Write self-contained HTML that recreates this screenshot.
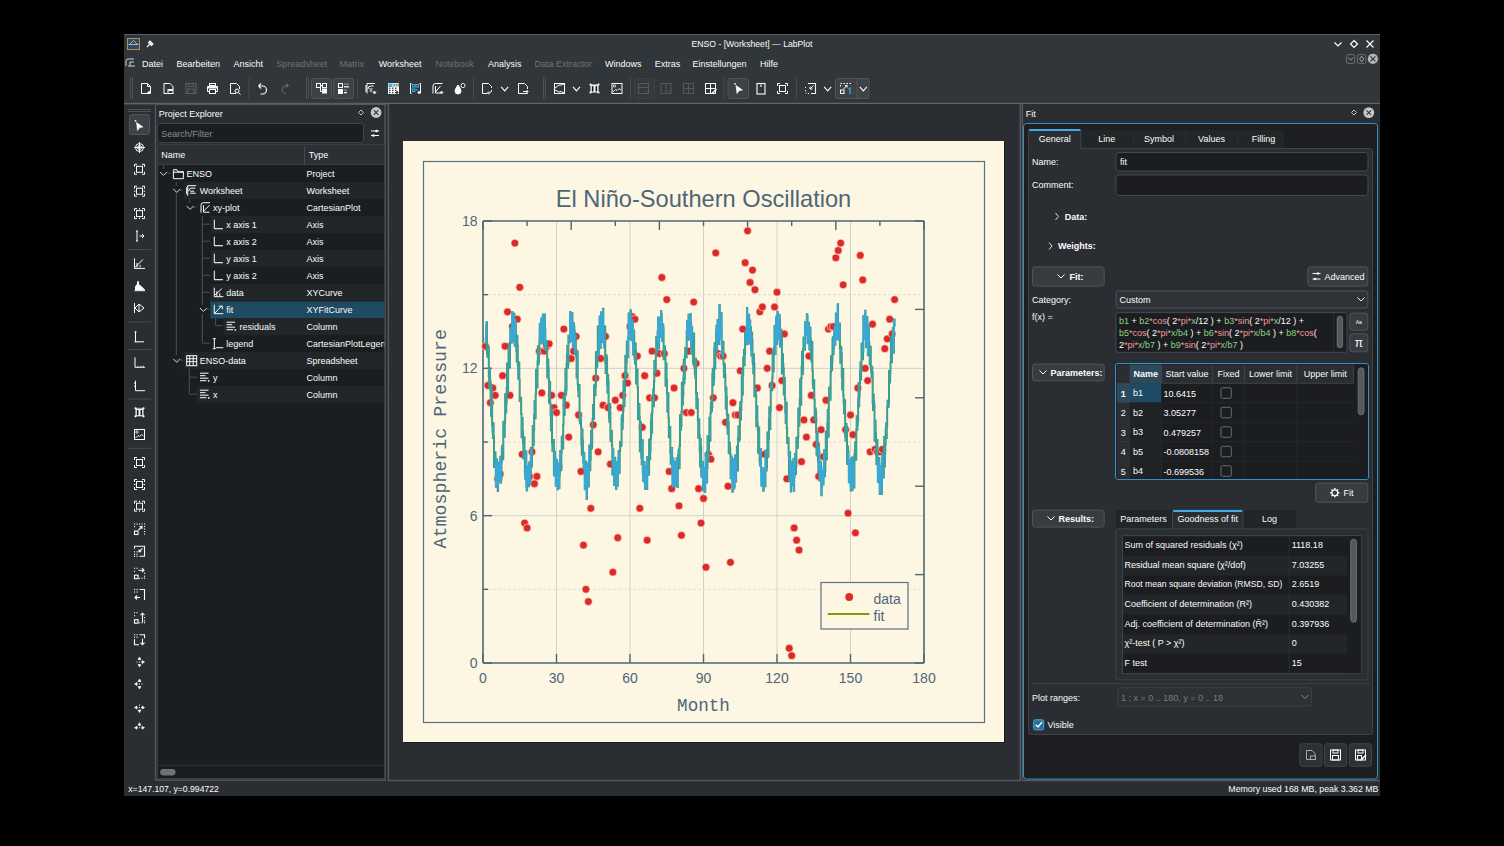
<!DOCTYPE html><html><head><meta charset="utf-8"><style>
*{margin:0;padding:0}html,body{width:1504px;height:846px;background:#000;overflow:hidden}
svg{position:absolute;left:0;top:0;display:block}
</style></head><body><svg width="1504" height="846" viewBox="0 0 1504 846" font-family="Liberation Sans" shape-rendering="auto">
<rect x="124" y="34" width="1256" height="762" fill="#31363b" />
<line x1="124" y1="34.5" x2="1380" y2="34.5" stroke="#5a5f65" stroke-width="1" />
<rect x="127.5" y="38.5" width="12" height="11" fill="#34495c" stroke="#b98c52" stroke-width="1" />
<path d="M129 45 L133.5 40.5 L138 45 M128.5 44.5 H138.5" stroke="#b9d2e6" stroke-width="0.8" fill="none" />
<path d="M147 47 L149.5 44.5 M149 42 L152 45 M150 41 L153 44 L151.5 45.5 L148.5 42.5 Z" stroke="#fcfcfc" stroke-width="1.1" fill="none" />
<text x="752" y="47.28" font-size="9" fill="#fcfcfc" text-anchor="middle" font-family="Liberation Sans" textLength="121" lengthAdjust="spacingAndGlyphs">ENSO - [Worksheet] — LabPlot</text>
<path d="M1334.5 42.5 L1338 46 L1341.5 42.5" stroke="#fcfcfc" stroke-width="1.2" fill="none" />
<path d="M1354 40.5 L1357.5 44 L1354 47.5 L1350.5 44 Z" stroke="#fcfcfc" stroke-width="1.2" fill="none" />
<path d="M1366.5 40.5 L1373.5 47.5 M1373.5 40.5 L1366.5 47.5" stroke="#fcfcfc" stroke-width="1.2" fill="none" />
<path d="M126 66 V61 Q126 59 128 59 H134 M130 66 V62 H134 M128 66 H135" stroke="#d0d2d4" stroke-width="1" fill="none" />
<text x="142" y="67.08" font-size="9" fill="#fcfcfc" text-anchor="start" font-family="Liberation Sans" >Datei</text>
<text x="176.6" y="67.08" font-size="9" fill="#fcfcfc" text-anchor="start" font-family="Liberation Sans" >Bearbeiten</text>
<text x="233.5" y="67.08" font-size="9" fill="#fcfcfc" text-anchor="start" font-family="Liberation Sans" >Ansicht</text>
<text x="276.3" y="67.08" font-size="9" fill="#6e7175" text-anchor="start" font-family="Liberation Sans" >Spreadsheet</text>
<text x="339.6" y="67.08" font-size="9" fill="#6e7175" text-anchor="start" font-family="Liberation Sans" >Matrix</text>
<text x="378.7" y="67.08" font-size="9" fill="#fcfcfc" text-anchor="start" font-family="Liberation Sans" >Worksheet</text>
<text x="435.4" y="67.08" font-size="9" fill="#6e7175" text-anchor="start" font-family="Liberation Sans" >Notebook</text>
<text x="488" y="67.08" font-size="9" fill="#fcfcfc" text-anchor="start" font-family="Liberation Sans" >Analysis</text>
<text x="534.5" y="67.08" font-size="9" fill="#6e7175" text-anchor="start" font-family="Liberation Sans" >Data Extractor</text>
<text x="605" y="67.08" font-size="9" fill="#fcfcfc" text-anchor="start" font-family="Liberation Sans" >Windows</text>
<text x="654.7" y="67.08" font-size="9" fill="#fcfcfc" text-anchor="start" font-family="Liberation Sans" >Extras</text>
<text x="692.5" y="67.08" font-size="9" fill="#fcfcfc" text-anchor="start" font-family="Liberation Sans" >Einstellungen</text>
<text x="760" y="67.08" font-size="9" fill="#fcfcfc" text-anchor="start" font-family="Liberation Sans" >Hilfe</text>
<rect x="1346.6" y="54.6" width="8.2" height="8.8" fill="none" stroke="#6f7378" stroke-width="0.9" rx="1.5" />
<path d="M1348.3 57.6 L1350.7 60.2 L1353.1 57.6" stroke="#a9acaf" stroke-width="0.9" fill="none" />
<rect x="1357.6" y="54.6" width="8.2" height="8.8" fill="none" stroke="#6f7378" stroke-width="0.9" rx="1.5" />
<path d="M1361.7 56 L1363.7 59 L1361.7 62 L1359.7 59 Z" stroke="#a9acaf" stroke-width="0.9" fill="none" />
<circle cx="1372.9" cy="58.8" r="5.1" fill="#b4b6b9"/>
<path d="M1370.4 56.3 L1375.4 61.3 M1375.4 56.3 L1370.4 61.3" stroke="#2c3034" stroke-width="1.1" fill="none" />
<line x1="130.5" y1="77" x2="130.5" y2="99" stroke="#4d5257" stroke-width="1" />
<line x1="132.5" y1="77" x2="132.5" y2="99" stroke="#4d5257" stroke-width="1" />
<line x1="249" y1="78" x2="249" y2="99" stroke="#464b50" stroke-width="1" />
<line x1="357.5" y1="78" x2="357.5" y2="99" stroke="#464b50" stroke-width="1" />
<line x1="473.5" y1="78" x2="473.5" y2="99" stroke="#464b50" stroke-width="1" />
<line x1="630.5" y1="78" x2="630.5" y2="99" stroke="#464b50" stroke-width="1" />
<line x1="724" y1="78" x2="724" y2="99" stroke="#464b50" stroke-width="1" />
<line x1="796.5" y1="78" x2="796.5" y2="99" stroke="#464b50" stroke-width="1" />
<line x1="306.5" y1="77" x2="306.5" y2="99" stroke="#4d5257" stroke-width="1" />
<line x1="308.5" y1="77" x2="308.5" y2="99" stroke="#4d5257" stroke-width="1" />
<line x1="543.5" y1="77" x2="543.5" y2="99" stroke="#4d5257" stroke-width="1" />
<line x1="545.5" y1="77" x2="545.5" y2="99" stroke="#4d5257" stroke-width="1" />
<rect x="311.5" y="78.5" width="20.0" height="20" fill="#3d4247" stroke="#50555a" stroke-width="1" rx="2" />
<rect x="333.5" y="78.5" width="20.0" height="20" fill="#3d4247" stroke="#50555a" stroke-width="1" rx="2" />
<rect x="728" y="78.5" width="20.5" height="20" fill="#3d4247" stroke="#50555a" stroke-width="1" rx="2" />
<rect x="634.5" y="78.5" width="20" height="20" fill="#34393e" stroke="#3c4146" stroke-width="1" rx="2" />
<rect x="835.5" y="78.5" width="33.5" height="20" fill="#3d4247" stroke="#50555a" stroke-width="1" rx="2" />
<line x1="857" y1="79" x2="857" y2="98" stroke="#50555a" stroke-width="1" />
<rect x="124" y="104" width="1256" height="692" fill="#2a2e32" />
<rect x="124" y="102.8" width="1256" height="1.6" fill="#62666b" />
<g transform="translate(141,83) scale(1)"><path d="M0.5 0.5 H6.5 L9.5 3.5 V10.5 H0.5 Z" stroke="#fcfcfc" stroke-width="1" fill="none" /><path d="M6.5 0.5 V3.5 H9.5" stroke="#fcfcfc" stroke-width="1" fill="none" /><path d="M8 8 L9.5 9.5 L8 11 L6.5 9.5Z" stroke="#fcfcfc" stroke-width="0.5" fill="#fcfcfc" /></g>
<g transform="translate(163.5,83) scale(1)"><path d="M0.5 0.5 H6.5 L9.5 3.5 V6 M4 10.5 H0.5 V0.5" stroke="#fcfcfc" stroke-width="1" fill="none" /><rect x="4.5" y="6.5" width="5" height="4" fill="none" stroke="#fcfcfc" stroke-width="1"/><rect x="5" y="7" width="4" height="1" fill="#fcfcfc"/></g>
<g transform="translate(185.5,83) scale(1)"><rect x="0.5" y="0.5" width="10" height="10" fill="none" stroke="#5c6065" stroke-width="1"/><rect x="3" y="0.5" width="5" height="3" fill="none" stroke="#5c6065" stroke-width="1"/><rect x="2.5" y="6" width="6" height="4.5" fill="none" stroke="#5c6065" stroke-width="1"/></g>
<g transform="translate(207,83) scale(1)"><rect x="2.5" y="0.5" width="6" height="2" fill="none" stroke="#fcfcfc" stroke-width="1"/><path d="M0.5 3.5 H10.5 V8.5 H0.5 Z" stroke="#fcfcfc" stroke-width="1" fill="none" /><rect x="2.5" y="6.5" width="6" height="4" fill="#31363b" stroke="#fcfcfc" stroke-width="1"/><rect x="1" y="4" width="9" height="1.5" fill="#fcfcfc"/></g>
<g transform="translate(230,83) scale(1)"><path d="M0.5 0.5 H6.5 L9.5 3.5 V6 M6 10.5 H0.5 V0.5" stroke="#fcfcfc" stroke-width="1" fill="none" /><circle cx="7" cy="8" r="2" fill="none" stroke="#fcfcfc" stroke-width="1"/><path d="M8.5 9.5 L10.5 11.5" stroke="#fcfcfc" stroke-width="1" fill="none" /></g>
<g transform="translate(257.5,83) scale(1)"><path d="M1 3 L3.5 0.5 M1 3 L3.5 5.5 M1 3 H5 A4 4 0 0 1 5 11 H3" stroke="#fcfcfc" stroke-width="1.1" fill="none" /></g>
<g transform="translate(280.5,83) scale(1)"><path d="M8 2.5 L5.5 0.5 M8 2.5 L5.5 4.5 M8 2.5 A5 4.3 0 0 0 5.5 11" stroke="#6e7175" stroke-width="1" fill="none" /></g>
<g transform="translate(316,83) scale(1)"><rect x="0.5" y="0.5" width="4" height="4" fill="none" stroke="#fcfcfc" stroke-width="1"/><rect x="6.5" y="0.5" width="4" height="4" fill="none" stroke="#fcfcfc" stroke-width="1"/><path d="M4.5 2.5 H6.5 M4.5 4.5 V8.5 H6" stroke="#fcfcfc" stroke-width="1" fill="none" /><rect x="6" y="5.5" width="5" height="5" fill="#fcfcfc"/></g>
<g transform="translate(338,83) scale(1)"><rect x="0.5" y="0.5" width="4" height="4" fill="none" stroke="#fcfcfc" stroke-width="1"/><rect x="6" y="0.5" width="5" height="1.2" fill="#8a8d90"/><rect x="6" y="3.2" width="5" height="1.2" fill="#fcfcfc"/><rect x="0" y="6" width="5" height="5" fill="#fcfcfc"/><rect x="6" y="6.5" width="3" height="1.2" fill="#8a8d90"/><rect x="6" y="9" width="3" height="1.2" fill="#fcfcfc"/></g>
<g transform="translate(365.5,83) scale(1)"><path d="M1.5 10.5 V0.5 H9.5" stroke="#fcfcfc" stroke-width="1" fill="none" /><path d="M2.5 6 Q2.5 3 5.5 3 H8 M4 8 H7 M4 6 H7" stroke="#fcfcfc" stroke-width="1" fill="none" /><path d="M9 8 L10.5 9.5 L9 11 L7.5 9.5Z" stroke="#fcfcfc" stroke-width="0.5" fill="#fcfcfc" /><path d="M0.5 2 V9" stroke="#fcfcfc" stroke-width="1" fill="none" /></g>
<g transform="translate(388,83) scale(1)"><rect x="0" y="0" width="11" height="11" fill="#fcfcfc"/><rect x="0.5" y="0.5" width="4" height="3.5" fill="#3daee9"/><rect x="1" y="4.6" width="1.5" height="1.2" fill="#31363b"/><rect x="1" y="6.8" width="1.5" height="1.2" fill="#31363b"/><rect x="1" y="9.0" width="1.5" height="1.2" fill="#31363b"/><rect x="4" y="4.6" width="1.5" height="1.2" fill="#31363b"/><rect x="4" y="6.8" width="1.5" height="1.2" fill="#31363b"/><rect x="4" y="9.0" width="1.5" height="1.2" fill="#31363b"/><rect x="7" y="4.6" width="1.5" height="1.2" fill="#31363b"/><rect x="7" y="6.8" width="1.5" height="1.2" fill="#31363b"/><rect x="7" y="9.0" width="1.5" height="1.2" fill="#31363b"/><rect x="5.5" y="0.8" width="1.2" height="1" fill="#31363b"/><rect x="5.5" y="2.4000000000000004" width="1.2" height="1" fill="#31363b"/><rect x="7.5" y="0.8" width="1.2" height="1" fill="#31363b"/><rect x="7.5" y="2.4000000000000004" width="1.2" height="1" fill="#31363b"/><rect x="9.5" y="0.8" width="1.2" height="1" fill="#31363b"/><rect x="9.5" y="2.4000000000000004" width="1.2" height="1" fill="#31363b"/><path d="M9 8 L10.5 9.5 L9 11 L7.5 9.5Z" stroke="#31363b" stroke-width="0.5" fill="#31363b" /></g>
<g transform="translate(410,83) scale(1)"><path d="M1.5 0.5 H0.5 V10.5 H1.5 M9.5 0.5 H10.5 V10.5" stroke="#fcfcfc" stroke-width="1" fill="none" /><rect x="2.5" y="1.5" width="2.5" height="2.5" fill="none" stroke="#3daee9" stroke-width="1"/><rect x="6" y="1.5" width="2.5" height="2.5" fill="none" stroke="#3daee9" stroke-width="1"/><rect x="2.5" y="6" width="2.5" height="2.5" fill="none" stroke="#3daee9" stroke-width="1"/><rect x="6" y="6" width="1.5" height="1.5" fill="#3daee9"/><path d="M9 8 L10.5 9.5 L9 11 L7.5 9.5Z" stroke="#fcfcfc" stroke-width="0.5" fill="#fcfcfc" /></g>
<g transform="translate(431.5,83) scale(1)"><path d="M1.5 10.5 V3 Q1.5 0.5 4 0.5 H11" stroke="#fcfcfc" stroke-width="1" fill="none" /><path d="M4 3 V10 H9 M4 9 L9 3" stroke="#fcfcfc" stroke-width="1" fill="none" /><path d="M10 8 L11.5 9.5 L10 11 L8.5 9.5Z" stroke="#fcfcfc" stroke-width="0.5" fill="#fcfcfc" /></g>
<g transform="translate(454,83) scale(1)"><path d="M4 2 Q1 6 1 8 A3 3 0 0 0 7 8 Q7 6 4 2Z" stroke="#fcfcfc" stroke-width="1" fill="#fcfcfc" /><circle cx="9" cy="2.5" r="2" fill="#111" stroke="#fcfcfc" stroke-width="1"/></g>
<g transform="translate(482,83) scale(1)"><path d="M0.5 0.5 H6.5 L9.5 3.5 V5 M5 10.5 H0.5 V0.5" stroke="#fcfcfc" stroke-width="1" fill="none" /><path d="M9.5 7 A2.5 2.5 0 0 1 7 10 H5.5 M7 8.5 L5.5 10 L7 11.5" stroke="#fcfcfc" stroke-width="1" fill="none" /></g>
<path d="M501.2 86.8 L504.7 90.8 L508.2 86.8" stroke="#fcfcfc" stroke-width="1.1" fill="none" />
<g transform="translate(518,83) scale(1)"><path d="M0.5 0.5 H6.5 L9.5 3.5 V6 M9.5 10 V10.5 H0.5 V0.5" stroke="#fcfcfc" stroke-width="1" fill="none" /><path d="M5 8.5 H10 M8.5 7 L10 8.5 L8.5 10" stroke="#fcfcfc" stroke-width="1" fill="none" /></g>
<g transform="translate(554,83) scale(1)"><rect x="0.5" y="0.5" width="10" height="10" fill="none" stroke="#fcfcfc" stroke-width="1"/><path d="M1 5 L5 2 H7 L10 1 M1 7 L5 9 L7 8.5 L10 10" stroke="#fcfcfc" stroke-width="1" fill="none" /></g>
<path d="M573 86.8 L576.5 90.8 L580 86.8" stroke="#fcfcfc" stroke-width="1.1" fill="none" />
<g transform="translate(589,83) scale(1)"><rect x="1.5" y="2" width="8" height="7.5" fill="#fcfcfc"/><rect x="2.8" y="3.2" width="1.7" height="5.3" fill="#15171a"/><rect x="6.5" y="3.2" width="1.7" height="5.3" fill="#15171a"/><rect x="1.5" y="1" width="8" height="1.2" fill="#9a9ea2"/><circle cx="1.5" cy="1.5" r="1.1" fill="#fcfcfc"/><circle cx="9.5" cy="1.5" r="1.1" fill="#fcfcfc"/><circle cx="1.5" cy="9.5" r="1.1" fill="#fcfcfc"/><circle cx="9.5" cy="9.5" r="1.1" fill="#fcfcfc"/></g>
<g transform="translate(611.5,83) scale(1)"><rect x="0.5" y="0.5" width="10" height="10" fill="none" stroke="#fcfcfc" stroke-width="1"/><circle cx="3" cy="3" r="1.2" fill="none" stroke="#fcfcfc" stroke-width="0.8"/><path d="M1.5 9 L4 6.5 L5.5 7.5 L7.5 5.5 L9.5 7" stroke="#fcfcfc" stroke-width="0.9" fill="none" /></g>
<g transform="translate(638,83) scale(1)"><rect x="0.5" y="0.5" width="10" height="10" fill="none" stroke="#55595e" stroke-width="1"/><path d="M0.5 4.5 H10.5 M7 9 L9 7.5" stroke="#55595e" stroke-width="1" fill="none" /></g>
<g transform="translate(660.5,83) scale(1)"><rect x="0.5" y="0.5" width="10" height="10" fill="none" stroke="#55595e" stroke-width="1"/><path d="M5.5 0.5 V10.5 M7 9 L9 7.5" stroke="#55595e" stroke-width="1" fill="none" /></g>
<g transform="translate(683,83) scale(1)"><rect x="0.5" y="0.5" width="10" height="10" fill="none" stroke="#55595e" stroke-width="1"/><path d="M5.5 0.5 V10.5 M0.5 5.5 H10.5" stroke="#55595e" stroke-width="1" fill="none" /></g>
<g transform="translate(705,83) scale(1)"><rect x="0.5" y="0.5" width="10" height="10" fill="none" stroke="#fcfcfc" stroke-width="1"/><path d="M5.5 0.5 V10.5 M0.5 5.5 H10.5" stroke="#fcfcfc" stroke-width="1" fill="none" /><path d="M7 10.5 L11.5 6" stroke="#fcfcfc" stroke-width="1.5" fill="none" /></g>
<g transform="translate(734,83) scale(1)"><path d="M2 2.5 L8.5 7 L5.2 7.6 L3 10.5 Z" stroke="#fcfcfc" stroke-width="0.6" fill="#fcfcfc" /><circle cx="1" cy="0.8" r="0.9" fill="#fcfcfc"/></g>
<g transform="translate(756.5,83) scale(1)"><rect x="0.5" y="0.5" width="8" height="10.5" fill="none" stroke="#fcfcfc" stroke-width="1.1"/><path d="M4.5 1.5 V4" stroke="#fcfcfc" stroke-width="1.2" fill="none" /></g>
<rect x="756.5" y="83.5" width="8" height="10.5" rx="4" fill="none" stroke="#31363b" stroke-width="0"/>
<g transform="translate(777,83) scale(1)"><path d="M0.5 3 V0.5 H3 M8 0.5 H10.5 V3 M10.5 8 V10.5 H8 M3 10.5 H0.5 V8" stroke="#fcfcfc" stroke-width="1" fill="none" /><rect x="2.5" y="2.5" width="6" height="6" fill="none" stroke="#fcfcfc" stroke-width="1"/></g>
<g transform="translate(805,83) scale(1)"><path d="M3 0.5 H10.5 V10.5 H6" stroke="#fcfcfc" stroke-width="1.1" fill="none" /><path d="M0.5 4 V5 M0.5 7 V8 M0.5 10 H1.5 M3 10.5 H4 M8.5 2.5 L5 6 M5 3.5 V6 H7.5" stroke="#fcfcfc" stroke-width="1" fill="none" /></g>
<path d="M824.2 86.9 L827.7 90.9 L831.2 86.9" stroke="#fcfcfc" stroke-width="1.1" fill="none" />
<g transform="translate(840,83) scale(1)"><path d="M0.5 0.5 H2 M3.5 0.5 H5 M6.5 0.5 H8 M9.5 0.5 H11 M0.5 2 V3.5" stroke="#fcfcfc" stroke-width="1" fill="none" /><rect x="0.5" y="7" width="3.5" height="3.5" fill="none" stroke="#fcfcfc" stroke-width="1"/><path d="M3.5 6 L7 2.5 M5 2.5 H7 V4.5" stroke="#fcfcfc" stroke-width="1" fill="none" /><path d="M8.5 6 L10 5 V11" stroke="#3daee9" stroke-width="1.2" fill="none" /></g>
<path d="M859.8 86.9 L863.3 90.9 L866.8 86.9" stroke="#fcfcfc" stroke-width="1.1" fill="none" />
<line x1="128" y1="109.5" x2="151" y2="109.5" stroke="#4d5257" stroke-width="1" />
<line x1="128" y1="111.5" x2="151" y2="111.5" stroke="#4d5257" stroke-width="1" />
<rect x="129.5" y="114.5" width="20" height="20" fill="#3d4247" stroke="#50555a" stroke-width="1" rx="2" />
<g transform="translate(134.5,120) scale(1)"><path d="M2 2.5 L8.5 7 L5.2 7.6 L3 10.5 Z" stroke="#fcfcfc" stroke-width="0.6" fill="#fcfcfc" /><circle cx="1" cy="0.8" r="0.9" fill="#fcfcfc"/></g>
<g transform="translate(134.0,142.0) scale(1)"><circle cx="5.5" cy="5.5" r="4" fill="none" stroke="#fcfcfc" stroke-width="1"/><circle cx="5.5" cy="5.5" r="2" fill="none" stroke="#fcfcfc" stroke-width="1"/><path d="M5.5 0 V11 M0 5.5 H11" stroke="#fcfcfc" stroke-width="1" fill="none" /></g>
<g transform="translate(134.0,163.8) scale(1)"><path d="M0.5 3 V0.5 H3 M8 0.5 H10.5 V3 M10.5 8 V10.5 H8 M3 10.5 H0.5 V8" stroke="#fcfcfc" stroke-width="1" fill="none" /><rect x="2.5" y="2.5" width="6" height="6" fill="none" stroke="#fcfcfc" stroke-width="1"/></g>
<g transform="translate(134.0,185.7) scale(1)"><path d="M0.5 3 V0.5 H3 M8 0.5 H10.5 V3 M10.5 8 V10.5 H8 M3 10.5 H0.5 V8" stroke="#fcfcfc" stroke-width="1" fill="none" /><rect x="2.5" y="2.5" width="6" height="6" fill="none" stroke="#fcfcfc" stroke-width="1"/><path d="M0 5.5 H1.5 M9.5 5.5 H11" stroke="#fcfcfc" stroke-width="1" fill="none" /></g>
<g transform="translate(134.0,208.1) scale(1)"><path d="M0.5 3 V0.5 H3 M8 0.5 H10.5 V3 M10.5 8 V10.5 H8 M3 10.5 H0.5 V8" stroke="#fcfcfc" stroke-width="1" fill="none" /><rect x="2.5" y="2.5" width="6" height="6" fill="none" stroke="#fcfcfc" stroke-width="1"/><path d="M5.5 0 V1.5 M5.5 9.5 V11" stroke="#fcfcfc" stroke-width="1" fill="none" /></g>
<g transform="translate(134.0,230.5) scale(1)"><path d="M2 0.5 H4 M3 0.5 V10.5 M2 10.5 H4 M5.5 5.5 H9 M8 3.5 L10 5.5 L8 7.5" stroke="#fcfcfc" stroke-width="1" fill="none" /></g>
<line x1="128" y1="249.5" x2="151" y2="249.5" stroke="#464b50" stroke-width="1" />
<line x1="128" y1="322" x2="151" y2="322" stroke="#464b50" stroke-width="1" />
<line x1="128" y1="349.5" x2="151" y2="349.5" stroke="#464b50" stroke-width="1" />
<line x1="128" y1="399" x2="151" y2="399" stroke="#464b50" stroke-width="1" />
<line x1="128" y1="448.3" x2="151" y2="448.3" stroke="#464b50" stroke-width="1" />
<g transform="translate(134.0,257.9) scale(1)"><path d="M0.5 0.5 V10.5 H11 M1 9.5 L9 1.5 M3 5 V9.5 M6 7 V9.5" stroke="#fcfcfc" stroke-width="1" fill="none" /></g>
<g transform="translate(134.0,280.2) scale(1)"><path d="M0.5 10.5 H11 M1.5 10 V6 L3 5 L4 1 L5 5 L7 6 L9 8 L10.5 9.5 V10" stroke="#fcfcfc" stroke-width="1" fill="#fcfcfc" /></g>
<g transform="translate(134.0,302.5) scale(1)"><path d="M0.5 0.5 V10.5 M1 5.5 L5 1.5 L10 5.5 L5 9.5 Z M5 1.5 V9.5" stroke="#fcfcfc" stroke-width="1" fill="none" /></g>
<g transform="translate(134.0,331.3) scale(1)"><path d="M1.5 0.5 V10.5 H10 M0.5 0.5 H2.5 M0.5 10.5 H2.5" stroke="#fcfcfc" stroke-width="1" fill="none" /></g>
<g transform="translate(134.0,356.8) scale(1)"><path d="M1 0.5 V10.5 H11 M4 9 V10 M7 9 V10 M9.5 9 V10" stroke="#fcfcfc" stroke-width="1" fill="none" /></g>
<g transform="translate(134.0,380.2) scale(1)"><path d="M1.5 0.5 V10.5 H11 M0 3 H1.5 M0 6 H1.5" stroke="#fcfcfc" stroke-width="1" fill="none" /></g>
<g transform="translate(134.0,406.8) scale(1)"><rect x="1.5" y="2" width="8" height="7.5" fill="#fcfcfc"/><rect x="2.8" y="3.2" width="1.7" height="5.3" fill="#15171a"/><rect x="6.5" y="3.2" width="1.7" height="5.3" fill="#15171a"/><rect x="1.5" y="1" width="8" height="1.2" fill="#9a9ea2"/><circle cx="1.5" cy="1.5" r="1.1" fill="#fcfcfc"/><circle cx="9.5" cy="1.5" r="1.1" fill="#fcfcfc"/><circle cx="1.5" cy="9.5" r="1.1" fill="#fcfcfc"/><circle cx="9.5" cy="9.5" r="1.1" fill="#fcfcfc"/></g>
<g transform="translate(134.0,429.0) scale(1)"><rect x="0.5" y="0.5" width="10" height="10" fill="none" stroke="#fcfcfc" stroke-width="1"/><circle cx="3" cy="3" r="1.2" fill="none" stroke="#fcfcfc" stroke-width="0.8"/><path d="M1.5 9 L4 6.5 L5.5 7.5 L7.5 5.5 L9.5 7" stroke="#fcfcfc" stroke-width="0.9" fill="none" /></g>
<g transform="translate(134.0,457.0) scale(1)"><path d="M0.5 3 V0.5 H3 M8 0.5 H10.5 V3 M10.5 8 V10.5 H8 M3 10.5 H0.5 V8" stroke="#fcfcfc" stroke-width="1" fill="none" /><rect x="2.5" y="2.5" width="6" height="6" fill="none" stroke="#fcfcfc" stroke-width="1"/></g>
<g transform="translate(134.0,479.0) scale(1)"><path d="M0.5 3 V0.5 H3 M8 0.5 H10.5 V3 M10.5 8 V10.5 H8 M3 10.5 H0.5 V8" stroke="#fcfcfc" stroke-width="1" fill="none" /><rect x="2.5" y="2.5" width="6" height="6" fill="none" stroke="#fcfcfc" stroke-width="1"/><path d="M0 5.5 H1.5 M9.5 5.5 H11" stroke="#fcfcfc" stroke-width="1" fill="none" /></g>
<g transform="translate(134.0,500.7) scale(1)"><path d="M0.5 3 V0.5 H3 M8 0.5 H10.5 V3 M10.5 8 V10.5 H8 M3 10.5 H0.5 V8" stroke="#fcfcfc" stroke-width="1" fill="none" /><rect x="2.5" y="2.5" width="6" height="6" fill="none" stroke="#fcfcfc" stroke-width="1"/><path d="M5.5 0 V1.5 M5.5 9.5 V11" stroke="#fcfcfc" stroke-width="1" fill="none" /></g>
<g transform="translate(134.0,523.5) scale(1)"><rect x="0" y="0" width="1.1" height="1.1" fill="#fcfcfc"/><rect x="2.5" y="0" width="1.1" height="1.1" fill="#fcfcfc"/><rect x="5" y="0" width="1.1" height="1.1" fill="#fcfcfc"/><rect x="7.5" y="0" width="1.1" height="1.1" fill="#fcfcfc"/><rect x="10" y="0" width="1.1" height="1.1" fill="#fcfcfc"/><rect x="10" y="2.5" width="1.1" height="1.1" fill="#fcfcfc"/><rect x="10" y="5" width="1.1" height="1.1" fill="#fcfcfc"/><rect x="10" y="7.5" width="1.1" height="1.1" fill="#fcfcfc"/><rect x="10" y="10" width="1.1" height="1.1" fill="#fcfcfc"/><rect x="0" y="2.5" width="1.1" height="1.1" fill="#fcfcfc"/><rect x="0.5" y="7.5" width="3.5" height="3.5" fill="none" stroke="#fcfcfc" stroke-width="1.1"/><path d="M4.5 6.5 L8 3 M5.5 3 H8 V5.5" stroke="#fcfcfc" stroke-width="1.1" fill="none" /></g>
<g transform="translate(134.0,545.8) scale(1)"><path d="M0.5 3 V0.5 H10.5 V10.5 H5.5" stroke="#fcfcfc" stroke-width="1.1" fill="none" /><rect x="0" y="5.5" width="1.1" height="1.1" fill="#fcfcfc"/><rect x="2.5" y="5.5" width="1.1" height="1.1" fill="#fcfcfc"/><rect x="0" y="8" width="1.1" height="1.1" fill="#fcfcfc"/><rect x="2.5" y="8" width="1.1" height="1.1" fill="#fcfcfc"/><rect x="0" y="10" width="1.1" height="1.1" fill="#fcfcfc"/><rect x="2.5" y="10" width="1.1" height="1.1" fill="#fcfcfc"/><path d="M8.5 2.5 L5 6 M5 3.8 V6 H7.2" stroke="#fcfcfc" stroke-width="1.1" fill="none" /></g>
<g transform="translate(134.0,567.7) scale(1)"><rect x="0" y="0" width="1.1" height="1.1" fill="#fcfcfc"/><rect x="2.5" y="0" width="1.1" height="1.1" fill="#fcfcfc"/><rect x="0" y="3" width="1.1" height="1.1" fill="#fcfcfc"/><rect x="10" y="5" width="1.1" height="1.1" fill="#fcfcfc"/><rect x="10" y="8" width="1.1" height="1.1" fill="#fcfcfc"/><rect x="10" y="10" width="1.1" height="1.1" fill="#fcfcfc"/><rect x="7.5" y="10" width="1.1" height="1.1" fill="#fcfcfc"/><rect x="5" y="10" width="1.1" height="1.1" fill="#fcfcfc"/><rect x="0.5" y="7.5" width="3.5" height="3.5" fill="none" stroke="#fcfcfc" stroke-width="1.1"/><path d="M4.5 2.5 H10 M8 0.5 L10 2.5 L8 4.5" stroke="#fcfcfc" stroke-width="1.1" fill="none" /></g>
<g transform="translate(134.0,589.0) scale(1)"><rect x="0" y="0" width="1.1" height="1.1" fill="#fcfcfc"/><rect x="2.5" y="0" width="1.1" height="1.1" fill="#fcfcfc"/><rect x="0" y="2.5" width="1.1" height="1.1" fill="#fcfcfc"/><rect x="2.5" y="2.5" width="1.1" height="1.1" fill="#fcfcfc"/><path d="M5.5 0.5 H10.5 V11" stroke="#fcfcfc" stroke-width="1.1" fill="none" /><path d="M1 8.5 H6 M3 6.5 L1 8.5 L3 10.5" stroke="#fcfcfc" stroke-width="1.1" fill="none" /></g>
<g transform="translate(134.0,612.2) scale(1)"><rect x="0" y="0" width="1.1" height="1.1" fill="#fcfcfc"/><rect x="2.5" y="0" width="1.1" height="1.1" fill="#fcfcfc"/><rect x="0" y="3" width="1.1" height="1.1" fill="#fcfcfc"/><rect x="10" y="5" width="1.1" height="1.1" fill="#fcfcfc"/><rect x="10" y="8" width="1.1" height="1.1" fill="#fcfcfc"/><rect x="10" y="10" width="1.1" height="1.1" fill="#fcfcfc"/><rect x="7.5" y="10" width="1.1" height="1.1" fill="#fcfcfc"/><rect x="5" y="10" width="1.1" height="1.1" fill="#fcfcfc"/><rect x="0.5" y="7.5" width="3.5" height="3.5" fill="none" stroke="#fcfcfc" stroke-width="1.1"/><path d="M8.5 10 V1 M6.5 3 L8.5 1 L10.5 3" stroke="#fcfcfc" stroke-width="1.1" fill="none" /></g>
<g transform="translate(134.0,634.2) scale(1)"><rect x="0" y="0" width="1.1" height="1.1" fill="#fcfcfc"/><rect x="2.5" y="0" width="1.1" height="1.1" fill="#fcfcfc"/><rect x="0" y="2.5" width="1.1" height="1.1" fill="#fcfcfc"/><rect x="2.5" y="2.5" width="1.1" height="1.1" fill="#fcfcfc"/><path d="M5.5 0.5 H10.5 V4 M0.5 5 V10.5 H5" stroke="#fcfcfc" stroke-width="1.1" fill="none" /><path d="M8.5 4.5 V10.5 M6.5 8.5 L8.5 10.5 L10.5 8.5" stroke="#fcfcfc" stroke-width="1.1" fill="none" /></g>
<g transform="translate(134.0,656.5) scale(1)"><path d="M5.5 0.5 L4 3 H7 Z M5.5 10.5 L4 8 H7 Z M10.5 5.5 L8 4 V7 Z" stroke="#fcfcfc" stroke-width="0.6" fill="#fcfcfc" /><rect x="5" y="5" width="1" height="1" fill="#fcfcfc"/><rect x="5" y="2.5" width="1" height="1" fill="#fcfcfc"/><rect x="2.5" y="5" width="1" height="1" fill="#fcfcfc"/><rect x="7.5" y="5" width="1" height="1" fill="#fcfcfc"/></g>
<g transform="translate(134.0,678.5) scale(1)"><path d="M5.5 0.5 L4 3 H7 Z M5.5 10.5 L4 8 H7 Z M0.5 5.5 L3 4 V7 Z" stroke="#fcfcfc" stroke-width="0.6" fill="#fcfcfc" /><rect x="5" y="5" width="1" height="1" fill="#fcfcfc"/><rect x="5" y="2.5" width="1" height="1" fill="#fcfcfc"/><rect x="2.5" y="5" width="1" height="1" fill="#fcfcfc"/><rect x="7.5" y="5" width="1" height="1" fill="#fcfcfc"/></g>
<g transform="translate(134.0,702.1) scale(1)"><path d="M0.5 5.5 L3 4 V7 Z M10.5 5.5 L8 4 V7 Z M5.5 10.5 L4 8 H7 Z" stroke="#fcfcfc" stroke-width="0.6" fill="#fcfcfc" /><rect x="5" y="5" width="1" height="1" fill="#fcfcfc"/><rect x="5" y="2.5" width="1" height="1" fill="#fcfcfc"/><rect x="2.5" y="5" width="1" height="1" fill="#fcfcfc"/><rect x="7.5" y="5" width="1" height="1" fill="#fcfcfc"/></g>
<g transform="translate(134.0,722.2) scale(1)"><path d="M0.5 5.5 L3 4 V7 Z M10.5 5.5 L8 4 V7 Z M5.5 0.5 L4 3 H7 Z" stroke="#fcfcfc" stroke-width="0.6" fill="#fcfcfc" /><rect x="5" y="5" width="1" height="1" fill="#fcfcfc"/><rect x="5" y="2.5" width="1" height="1" fill="#fcfcfc"/><rect x="2.5" y="5" width="1" height="1" fill="#fcfcfc"/><rect x="7.5" y="5" width="1" height="1" fill="#fcfcfc"/></g>
<rect x="155" y="104" width="231" height="676" fill="#2a2e32" />
<path d="M155.5 780.3 V106 Q155.5 104.3 157 104.3 H385 V780.3 H155.5" stroke="#53575c" stroke-width="1.4" fill="none" />
<text x="158.7" y="116.78" font-size="9" fill="#fcfcfc" text-anchor="start" font-family="Liberation Sans" >Project Explorer</text>
<path d="M361 110 L363.5 112.5 L361 115 L358.5 112.5 Z" stroke="#d0d2d4" stroke-width="0.9" fill="none" />
<circle cx="376.1" cy="112.5" r="5.4" fill="#c6c8ca"/>
<path d="M373.8 110.2 L378.4 114.8 M378.4 110.2 L373.8 114.8" stroke="#31363b" stroke-width="1.1" fill="none" />
<rect x="157.5" y="123.5" width="206" height="19" fill="#1b1e20" stroke="#3e4348" stroke-width="1" rx="2.5" />
<text x="161.3" y="136.78" font-size="9" fill="#8b8e91" text-anchor="start" font-family="Liberation Sans" >Search/Filter</text>
<path d="M371 131 H379 M371 135.5 H379" stroke="#fcfcfc" stroke-width="1" fill="none" />
<circle cx="376.5" cy="131" r="1.3" fill="#fcfcfc"/><circle cx="373.5" cy="135.5" r="1.3" fill="#fcfcfc"/>
<rect x="157" y="144.5" width="227.5" height="634" fill="#1b1e20" />
<rect x="157.5" y="144.5" width="227" height="20" fill="#2c3035" />
<path d="M157.5 778.5 V146 Q157.5 144.5 159 144.5 H383 Q384.5 144.5 384.5 146 V778.5 H157.5" stroke="#3a3f44" stroke-width="1" fill="none" />
<line x1="304.5" y1="146" x2="304.5" y2="164" stroke="#454a4f" stroke-width="1" />
<line x1="158" y1="164.5" x2="384" y2="164.5" stroke="#3a3f44" stroke-width="1" />
<text x="161.3" y="158.28" font-size="9" fill="#fcfcfc" text-anchor="start" font-family="Liberation Sans" >Name</text>
<text x="308.8" y="158.28" font-size="9" fill="#fcfcfc" text-anchor="start" font-family="Liberation Sans" >Type</text>
<clipPath id="tv"><rect x="157" y="144" width="227.3" height="636"/></clipPath><g clip-path="url(#tv)">
<path d="M160.0 171.89999999999998 L163.5 175.39999999999998 L167.0 171.89999999999998" stroke="#d8dadc" stroke-width="1" fill="none" />
<text x="186.4" y="176.98" font-size="9" fill="#fcfcfc" text-anchor="start" font-family="Liberation Sans" >ENSO</text>
<text x="306.5" y="176.98" font-size="9" fill="#fcfcfc" text-anchor="start" font-family="Liberation Sans" >Project</text>
<rect x="183.70000000000002" y="182" width="200.79999999999998" height="17" fill="#232629" />
<path d="M173.3 188.89999999999998 L176.8 192.39999999999998 L180.3 188.89999999999998" stroke="#d8dadc" stroke-width="1" fill="none" />
<text x="199.70000000000002" y="193.98" font-size="9" fill="#fcfcfc" text-anchor="start" font-family="Liberation Sans" >Worksheet</text>
<text x="306.5" y="193.98" font-size="9" fill="#fcfcfc" text-anchor="start" font-family="Liberation Sans" >Worksheet</text>
<path d="M186.6 205.89999999999998 L190.1 209.39999999999998 L193.6 205.89999999999998" stroke="#d8dadc" stroke-width="1" fill="none" />
<text x="213.0" y="210.98" font-size="9" fill="#fcfcfc" text-anchor="start" font-family="Liberation Sans" >xy-plot</text>
<text x="306.5" y="210.98" font-size="9" fill="#fcfcfc" text-anchor="start" font-family="Liberation Sans" >CartesianPlot</text>
<rect x="210.3" y="216" width="174.2" height="17" fill="#232629" />
<text x="226.3" y="227.98" font-size="9" fill="#fcfcfc" text-anchor="start" font-family="Liberation Sans" >x axis 1</text>
<text x="306.5" y="227.98" font-size="9" fill="#fcfcfc" text-anchor="start" font-family="Liberation Sans" >Axis</text>
<text x="226.3" y="244.98" font-size="9" fill="#fcfcfc" text-anchor="start" font-family="Liberation Sans" >x axis 2</text>
<text x="306.5" y="244.98" font-size="9" fill="#fcfcfc" text-anchor="start" font-family="Liberation Sans" >Axis</text>
<rect x="210.3" y="250" width="174.2" height="17" fill="#232629" />
<text x="226.3" y="261.98" font-size="9" fill="#fcfcfc" text-anchor="start" font-family="Liberation Sans" >y axis 1</text>
<text x="306.5" y="261.98" font-size="9" fill="#fcfcfc" text-anchor="start" font-family="Liberation Sans" >Axis</text>
<text x="226.3" y="278.98" font-size="9" fill="#fcfcfc" text-anchor="start" font-family="Liberation Sans" >y axis 2</text>
<text x="306.5" y="278.98" font-size="9" fill="#fcfcfc" text-anchor="start" font-family="Liberation Sans" >Axis</text>
<rect x="210.3" y="284" width="174.2" height="17" fill="#232629" />
<text x="226.3" y="295.98" font-size="9" fill="#fcfcfc" text-anchor="start" font-family="Liberation Sans" >data</text>
<text x="306.5" y="295.98" font-size="9" fill="#fcfcfc" text-anchor="start" font-family="Liberation Sans" >XYCurve</text>
<rect x="210.3" y="301.5" width="174.2" height="17" fill="#1e4a62" />
<path d="M199.9 307.9 L203.4 311.4 L206.9 307.9" stroke="#d8dadc" stroke-width="1" fill="none" />
<text x="226.3" y="312.98" font-size="9" fill="#fcfcfc" text-anchor="start" font-family="Liberation Sans" >fit</text>
<text x="306.5" y="312.98" font-size="9" fill="#fcfcfc" text-anchor="start" font-family="Liberation Sans" >XYFitCurve</text>
<rect x="223.60000000000002" y="318" width="160.89999999999998" height="17" fill="#232629" />
<text x="239.60000000000002" y="329.98" font-size="9" fill="#fcfcfc" text-anchor="start" font-family="Liberation Sans" >residuals</text>
<text x="306.5" y="329.98" font-size="9" fill="#fcfcfc" text-anchor="start" font-family="Liberation Sans" >Column</text>
<text x="226.3" y="346.98" font-size="9" fill="#fcfcfc" text-anchor="start" font-family="Liberation Sans" >legend</text>
<text x="306.5" y="346.98" font-size="9" fill="#fcfcfc" text-anchor="start" font-family="Liberation Sans" >CartesianPlotLegend</text>
<rect x="183.70000000000002" y="352" width="200.79999999999998" height="17" fill="#232629" />
<path d="M173.3 358.9 L176.8 362.4 L180.3 358.9" stroke="#d8dadc" stroke-width="1" fill="none" />
<text x="199.70000000000002" y="363.98" font-size="9" fill="#fcfcfc" text-anchor="start" font-family="Liberation Sans" >ENSO-data</text>
<text x="306.5" y="363.98" font-size="9" fill="#fcfcfc" text-anchor="start" font-family="Liberation Sans" >Spreadsheet</text>
<text x="213.0" y="380.98" font-size="9" fill="#fcfcfc" text-anchor="start" font-family="Liberation Sans" >y</text>
<text x="306.5" y="380.98" font-size="9" fill="#fcfcfc" text-anchor="start" font-family="Liberation Sans" >Column</text>
<rect x="197.0" y="386" width="187.5" height="17" fill="#232629" />
<text x="213.0" y="397.98" font-size="9" fill="#fcfcfc" text-anchor="start" font-family="Liberation Sans" >x</text>
<text x="306.5" y="397.98" font-size="9" fill="#fcfcfc" text-anchor="start" font-family="Liberation Sans" >Column</text>
</g>
<path d="M163.6 165 V169 M176.3 182 V186 M176.3 193 V355 M189.6 199 V203 M202.3 216 V305 M202.3 314 V342.4 M215.6 318 V325.7 H222.7 M189.3 368.7 V393.5 M176.3 360.2 H179 M202.3 224.2 H209.9 M202.3 241.2 H209.9 M202.3 258.2 H209.9 M202.3 275.2 H209.9 M202.3 292.2 H209.9 M202.3 343.2 H209.9 M189.3 377.2 H197 M189.3 394.2 H197 M167.1 173.2 H170.1 M180.1 190.2 H183.1 M193.1 207.2 H196.1 M206.3 309.2 H209.3 M180.1 360.2 H183.1" stroke="#4d5156" stroke-width="1" fill="none"/>
<g transform="translate(172.9,168.2) scale(1)"><path d="M0.5 2 V10.5 H10.5 V3.5 H5 L4 1.5 H0.5 Z M0.5 4 H10.5" stroke="#fcfcfc" stroke-width="1" fill="none" /></g>
<g transform="translate(186.20000000000002,185.2) scale(1)"><path d="M1.5 10.5 V0.5 H10 M2.5 6 Q2.5 3 5.5 3 H9 M4 8 H9.5 M4 6 H8 M0.5 2 V9" stroke="#fcfcfc" stroke-width="1" fill="none" /></g>
<g transform="translate(199.5,202.2) scale(1)"><path d="M1.5 10.5 V3 Q1.5 0.5 4 0.5 H10.5 M4 3 V10 H10 M4 9 L10 3" stroke="#fcfcfc" stroke-width="1" fill="none" /></g>
<g transform="translate(212.8,219.2) scale(1)"><path d="M1.5 0.5 V9.5 H10 M3 9 V10 M6 9 V10 M9 9 V10" stroke="#fcfcfc" stroke-width="1" fill="none" /></g>
<g transform="translate(212.8,236.2) scale(1)"><path d="M1.5 0.5 V9.5 H10 M3 9 V10 M6 9 V10 M9 9 V10" stroke="#fcfcfc" stroke-width="1" fill="none" /></g>
<g transform="translate(212.8,253.2) scale(1)"><path d="M1.5 0.5 V9.5 H10 M3 9 V10 M6 9 V10 M9 9 V10" stroke="#fcfcfc" stroke-width="1" fill="none" /></g>
<g transform="translate(212.8,270.2) scale(1)"><path d="M1.5 0.5 V9.5 H10 M3 9 V10 M6 9 V10 M9 9 V10" stroke="#fcfcfc" stroke-width="1" fill="none" /></g>
<g transform="translate(212.8,287.2) scale(1)"><path d="M1.5 0.5 V9.5 H10.5 M2 8 L9 1.5 M4 4 V9 M7 6 V9" stroke="#fcfcfc" stroke-width="1" fill="none" /></g>
<g transform="translate(212.8,304.2) scale(1)"><path d="M1.5 0.5 V9.5 H10.5 M2 9 L9 1.5 M6 2 H9.5 V5" stroke="#fcfcfc" stroke-width="1" fill="none" /></g>
<g transform="translate(226.10000000000002,321.2) scale(1)"><path d="M0.5 1 H9 M0.5 3.5 H6 M0.5 6 H9 M0.5 8.5 H7" stroke="#fcfcfc" stroke-width="1" fill="none" /><rect x="8.5" y="8" width="1.5" height="1.5" fill="#fcfcfc"/></g>
<g transform="translate(212.8,338.2) scale(1)"><path d="M1.5 0.5 V10.5 M0 0.5 H3 M0 10.5 H3 M3 9.5 H10.5" stroke="#fcfcfc" stroke-width="1" fill="none" /></g>
<g transform="translate(186.20000000000002,355.2) scale(1)"><rect x="0.5" y="0.5" width="10" height="10" fill="none" stroke="#fcfcfc" stroke-width="1"/><path d="M0.5 3.5 H10.5 M0.5 6.5 H10.5 M3.5 0.5 V10.5 M7 0.5 V10.5" stroke="#fcfcfc" stroke-width="1" fill="none" /></g>
<g transform="translate(199.5,372.2) scale(1)"><path d="M0.5 1 H9 M0.5 3.5 H6 M0.5 6 H9 M0.5 8.5 H7" stroke="#fcfcfc" stroke-width="1" fill="none" /><rect x="8.5" y="8" width="1.5" height="1.5" fill="#fcfcfc"/></g>
<g transform="translate(199.5,389.2) scale(1)"><path d="M0.5 1 H9 M0.5 3.5 H6 M0.5 6 H9 M0.5 8.5 H7" stroke="#fcfcfc" stroke-width="1" fill="none" /><rect x="8.5" y="8" width="1.5" height="1.5" fill="#fcfcfc"/></g>
<line x1="158" y1="765.5" x2="384" y2="765.5" stroke="#2d3135" stroke-width="1" />
<rect x="160.2" y="769" width="15.3" height="6.4" fill="#6e7175" rx="3.2" />
<rect x="388" y="104" width="632" height="676" fill="#2a2e32" />
<path d="M388.4 780.5 V104 M1020.3 104 V780.5 M388 780.5 H1021" stroke="#55595e" stroke-width="1.4" fill="none" />
<rect x="404" y="142" width="601" height="601" fill="#1a1c1e" />
<rect x="403" y="141" width="601" height="601" fill="#fdf6e3" />
<rect x="423.5" y="161.5" width="561" height="561" fill="none" stroke="#5a7282" stroke-width="1.2" />
<line x1="556.5" y1="221.0" x2="556.5" y2="663.0" stroke="#c4cac6" stroke-width="0.8" />
<line x1="630.0" y1="221.0" x2="630.0" y2="663.0" stroke="#c4cac6" stroke-width="0.8" />
<line x1="703.5" y1="221.0" x2="703.5" y2="663.0" stroke="#c4cac6" stroke-width="0.8" />
<line x1="777.0" y1="221.0" x2="777.0" y2="663.0" stroke="#c4cac6" stroke-width="0.8" />
<line x1="850.5" y1="221.0" x2="850.5" y2="663.0" stroke="#c4cac6" stroke-width="0.8" />
<line x1="483.0" y1="515.6666666666666" x2="924.0" y2="515.6666666666666" stroke="#c4cac6" stroke-width="0.8" />
<line x1="483.0" y1="368.3333333333333" x2="924.0" y2="368.3333333333333" stroke="#c4cac6" stroke-width="0.8" />
<line x1="483.0" y1="589.3333333333334" x2="924.0" y2="589.3333333333334" stroke="#d9d9cc" stroke-width="0.8" stroke-dasharray="3 2"/>
<line x1="483.0" y1="442.0" x2="924.0" y2="442.0" stroke="#d9d9cc" stroke-width="0.8" stroke-dasharray="3 2"/>
<line x1="483.0" y1="294.6666666666667" x2="924.0" y2="294.6666666666667" stroke="#d9d9cc" stroke-width="0.8" stroke-dasharray="3 2"/>
<line x1="483.0" y1="663.0" x2="924.0" y2="663.0" stroke="#4d6677" stroke-width="1.6" />
<line x1="483.0" y1="221.0" x2="924.0" y2="221.0" stroke="#4d6677" stroke-width="1.6" />
<line x1="483.0" y1="663.0" x2="483.0" y2="221.0" stroke="#4d6677" stroke-width="1.6" />
<line x1="924.0" y1="663.0" x2="924.0" y2="221.0" stroke="#4d6677" stroke-width="1.6" />
<line x1="483.0" y1="663.0" x2="483.0" y2="654.0" stroke="#4d6677" stroke-width="1.4" />
<line x1="556.5" y1="663.0" x2="556.5" y2="654.0" stroke="#4d6677" stroke-width="1.4" />
<line x1="630.0" y1="663.0" x2="630.0" y2="654.0" stroke="#4d6677" stroke-width="1.4" />
<line x1="703.5" y1="663.0" x2="703.5" y2="654.0" stroke="#4d6677" stroke-width="1.4" />
<line x1="777.0" y1="663.0" x2="777.0" y2="654.0" stroke="#4d6677" stroke-width="1.4" />
<line x1="850.5" y1="663.0" x2="850.5" y2="654.0" stroke="#4d6677" stroke-width="1.4" />
<line x1="924.0" y1="663.0" x2="924.0" y2="654.0" stroke="#4d6677" stroke-width="1.4" />
<line x1="483.0" y1="221.0" x2="483.0" y2="230.0" stroke="#4d6677" stroke-width="1.4" />
<line x1="527.1" y1="221.0" x2="527.1" y2="226.0" stroke="#4d6677" stroke-width="1.4" />
<line x1="571.2" y1="221.0" x2="571.2" y2="230.0" stroke="#4d6677" stroke-width="1.4" />
<line x1="615.3" y1="221.0" x2="615.3" y2="226.0" stroke="#4d6677" stroke-width="1.4" />
<line x1="659.4" y1="221.0" x2="659.4" y2="230.0" stroke="#4d6677" stroke-width="1.4" />
<line x1="703.5" y1="221.0" x2="703.5" y2="226.0" stroke="#4d6677" stroke-width="1.4" />
<line x1="747.6" y1="221.0" x2="747.6" y2="230.0" stroke="#4d6677" stroke-width="1.4" />
<line x1="791.7" y1="221.0" x2="791.7" y2="226.0" stroke="#4d6677" stroke-width="1.4" />
<line x1="835.8" y1="221.0" x2="835.8" y2="230.0" stroke="#4d6677" stroke-width="1.4" />
<line x1="879.9" y1="221.0" x2="879.9" y2="226.0" stroke="#4d6677" stroke-width="1.4" />
<line x1="924.0" y1="221.0" x2="924.0" y2="230.0" stroke="#4d6677" stroke-width="1.4" />
<line x1="483.0" y1="663.0" x2="492.0" y2="663.0" stroke="#4d6677" stroke-width="1.4" />
<line x1="483.0" y1="515.6666666666666" x2="492.0" y2="515.6666666666666" stroke="#4d6677" stroke-width="1.4" />
<line x1="483.0" y1="368.3333333333333" x2="492.0" y2="368.3333333333333" stroke="#4d6677" stroke-width="1.4" />
<line x1="483.0" y1="221.0" x2="492.0" y2="221.0" stroke="#4d6677" stroke-width="1.4" />
<line x1="483.0" y1="589.3333333333334" x2="488.0" y2="589.3333333333334" stroke="#4d6677" stroke-width="1.4" />
<line x1="483.0" y1="442.0" x2="488.0" y2="442.0" stroke="#4d6677" stroke-width="1.4" />
<line x1="483.0" y1="294.6666666666667" x2="488.0" y2="294.6666666666667" stroke="#4d6677" stroke-width="1.4" />
<line x1="924.0" y1="663.0" x2="915.0" y2="663.0" stroke="#4d6677" stroke-width="1.4" />
<line x1="924.0" y1="574.6" x2="915.0" y2="574.6" stroke="#4d6677" stroke-width="1.4" />
<line x1="924.0" y1="486.2" x2="915.0" y2="486.2" stroke="#4d6677" stroke-width="1.4" />
<line x1="924.0" y1="397.79999999999995" x2="915.0" y2="397.79999999999995" stroke="#4d6677" stroke-width="1.4" />
<line x1="924.0" y1="309.4" x2="915.0" y2="309.4" stroke="#4d6677" stroke-width="1.4" />
<line x1="924.0" y1="221.0" x2="915.0" y2="221.0" stroke="#4d6677" stroke-width="1.4" />
<text x="483.0" y="682.60" font-size="14" fill="#4d6677" text-anchor="middle" font-family="Liberation Sans" >0</text>
<text x="556.5" y="682.60" font-size="14" fill="#4d6677" text-anchor="middle" font-family="Liberation Sans" >30</text>
<text x="630.0" y="682.60" font-size="14" fill="#4d6677" text-anchor="middle" font-family="Liberation Sans" >60</text>
<text x="703.5" y="682.60" font-size="14" fill="#4d6677" text-anchor="middle" font-family="Liberation Sans" >90</text>
<text x="777.0" y="682.60" font-size="14" fill="#4d6677" text-anchor="middle" font-family="Liberation Sans" >120</text>
<text x="850.5" y="682.60" font-size="14" fill="#4d6677" text-anchor="middle" font-family="Liberation Sans" >150</text>
<text x="924.0" y="682.60" font-size="14" fill="#4d6677" text-anchor="middle" font-family="Liberation Sans" >180</text>
<text x="477.5" y="668.10" font-size="14" fill="#4d6677" text-anchor="end" font-family="Liberation Sans" >0</text>
<text x="477.5" y="520.77" font-size="14" fill="#4d6677" text-anchor="end" font-family="Liberation Sans" >6</text>
<text x="477.5" y="373.44" font-size="14" fill="#4d6677" text-anchor="end" font-family="Liberation Sans" >12</text>
<text x="477.5" y="226.10" font-size="14" fill="#4d6677" text-anchor="end" font-family="Liberation Sans" >18</text>
<text x="703.5" y="206.50" font-size="24" fill="#4d6677" text-anchor="middle" font-family="Liberation Sans" textLength="295.5" lengthAdjust="spacingAndGlyphs">El Niño-Southern Oscillation</text>
<text x="703.5" y="711.00" font-size="17.6" fill="#4d6677" text-anchor="middle" font-family="Liberation Mono" >Month</text>
<text x="0" y="0" font-size="18.3" fill="#4d6677" text-anchor="middle" font-family="Liberation Mono" transform="translate(446.2 438.7) rotate(-90)">Atmospheric Pressure</text>
<g fill="#dc2a26" stroke="#fff6ea" stroke-width="0.6"><circle cx="485.45" cy="346.23" r="3.9"/><circle cx="487.90" cy="385.52" r="3.9"/><circle cx="490.35" cy="402.71" r="3.9"/><circle cx="492.80" cy="387.98" r="3.9"/><circle cx="495.25" cy="395.34" r="3.9"/><circle cx="497.70" cy="478.83" r="3.9"/><circle cx="500.15" cy="473.92" r="3.9"/><circle cx="502.60" cy="375.70" r="3.9"/><circle cx="505.05" cy="346.23" r="3.9"/><circle cx="507.50" cy="311.86" r="3.9"/><circle cx="509.95" cy="395.34" r="3.9"/><circle cx="512.40" cy="326.59" r="3.9"/><circle cx="514.85" cy="243.10" r="3.9"/><circle cx="517.30" cy="319.22" r="3.9"/><circle cx="519.75" cy="287.30" r="3.9"/><circle cx="522.20" cy="454.28" r="3.9"/><circle cx="524.65" cy="523.03" r="3.9"/><circle cx="527.10" cy="527.94" r="3.9"/><circle cx="529.55" cy="476.38" r="3.9"/><circle cx="532.00" cy="451.82" r="3.9"/><circle cx="534.45" cy="483.74" r="3.9"/><circle cx="536.90" cy="476.38" r="3.9"/><circle cx="539.35" cy="351.14" r="3.9"/><circle cx="541.80" cy="392.89" r="3.9"/><circle cx="544.25" cy="351.14" r="3.9"/><circle cx="546.70" cy="346.23" r="3.9"/><circle cx="549.15" cy="343.78" r="3.9"/><circle cx="551.60" cy="395.34" r="3.9"/><circle cx="554.05" cy="407.62" r="3.9"/><circle cx="556.50" cy="412.53" r="3.9"/><circle cx="558.95" cy="466.56" r="3.9"/><circle cx="561.40" cy="395.34" r="3.9"/><circle cx="563.85" cy="329.04" r="3.9"/><circle cx="566.30" cy="405.17" r="3.9"/><circle cx="568.75" cy="437.09" r="3.9"/><circle cx="571.20" cy="358.51" r="3.9"/><circle cx="573.65" cy="351.14" r="3.9"/><circle cx="576.10" cy="336.41" r="3.9"/><circle cx="578.55" cy="414.99" r="3.9"/><circle cx="581.00" cy="471.47" r="3.9"/><circle cx="583.45" cy="545.13" r="3.9"/><circle cx="585.90" cy="589.33" r="3.9"/><circle cx="588.35" cy="601.61" r="3.9"/><circle cx="590.80" cy="508.30" r="3.9"/><circle cx="593.25" cy="424.81" r="3.9"/><circle cx="595.70" cy="378.16" r="3.9"/><circle cx="598.15" cy="451.82" r="3.9"/><circle cx="600.60" cy="358.51" r="3.9"/><circle cx="603.05" cy="405.17" r="3.9"/><circle cx="605.50" cy="336.41" r="3.9"/><circle cx="607.95" cy="407.62" r="3.9"/><circle cx="610.40" cy="464.10" r="3.9"/><circle cx="612.85" cy="572.14" r="3.9"/><circle cx="615.30" cy="400.26" r="3.9"/><circle cx="617.75" cy="537.77" r="3.9"/><circle cx="620.20" cy="407.62" r="3.9"/><circle cx="622.65" cy="395.34" r="3.9"/><circle cx="625.10" cy="375.70" r="3.9"/><circle cx="627.55" cy="383.07" r="3.9"/><circle cx="630.00" cy="326.59" r="3.9"/><circle cx="632.45" cy="316.77" r="3.9"/><circle cx="634.90" cy="319.22" r="3.9"/><circle cx="637.35" cy="356.06" r="3.9"/><circle cx="639.80" cy="508.30" r="3.9"/><circle cx="642.25" cy="427.27" r="3.9"/><circle cx="644.70" cy="375.70" r="3.9"/><circle cx="647.15" cy="540.22" r="3.9"/><circle cx="649.60" cy="397.80" r="3.9"/><circle cx="652.05" cy="351.14" r="3.9"/><circle cx="654.50" cy="397.80" r="3.9"/><circle cx="656.95" cy="373.24" r="3.9"/><circle cx="659.40" cy="353.60" r="3.9"/><circle cx="661.85" cy="277.48" r="3.9"/><circle cx="664.30" cy="353.60" r="3.9"/><circle cx="666.75" cy="299.58" r="3.9"/><circle cx="669.20" cy="471.47" r="3.9"/><circle cx="671.65" cy="488.66" r="3.9"/><circle cx="674.10" cy="387.98" r="3.9"/><circle cx="676.55" cy="464.10" r="3.9"/><circle cx="679.00" cy="505.84" r="3.9"/><circle cx="681.45" cy="535.31" r="3.9"/><circle cx="683.90" cy="368.33" r="3.9"/><circle cx="686.35" cy="412.53" r="3.9"/><circle cx="688.80" cy="351.14" r="3.9"/><circle cx="691.25" cy="412.53" r="3.9"/><circle cx="693.70" cy="302.03" r="3.9"/><circle cx="696.15" cy="363.42" r="3.9"/><circle cx="698.60" cy="488.66" r="3.9"/><circle cx="701.05" cy="523.03" r="3.9"/><circle cx="703.50" cy="498.48" r="3.9"/><circle cx="705.95" cy="567.23" r="3.9"/><circle cx="708.40" cy="454.28" r="3.9"/><circle cx="710.85" cy="459.19" r="3.9"/><circle cx="713.30" cy="397.80" r="3.9"/><circle cx="715.75" cy="252.92" r="3.9"/><circle cx="718.20" cy="353.60" r="3.9"/><circle cx="720.65" cy="356.06" r="3.9"/><circle cx="723.10" cy="356.06" r="3.9"/><circle cx="725.55" cy="422.36" r="3.9"/><circle cx="728.00" cy="486.20" r="3.9"/><circle cx="730.45" cy="562.32" r="3.9"/><circle cx="732.90" cy="402.71" r="3.9"/><circle cx="735.35" cy="414.99" r="3.9"/><circle cx="737.80" cy="414.99" r="3.9"/><circle cx="740.25" cy="370.79" r="3.9"/><circle cx="742.70" cy="329.04" r="3.9"/><circle cx="745.15" cy="262.74" r="3.9"/><circle cx="747.60" cy="230.82" r="3.9"/><circle cx="750.05" cy="282.39" r="3.9"/><circle cx="752.50" cy="270.11" r="3.9"/><circle cx="754.95" cy="289.76" r="3.9"/><circle cx="757.40" cy="387.98" r="3.9"/><circle cx="759.85" cy="311.86" r="3.9"/><circle cx="762.30" cy="306.94" r="3.9"/><circle cx="764.75" cy="454.28" r="3.9"/><circle cx="767.20" cy="368.33" r="3.9"/><circle cx="769.65" cy="351.14" r="3.9"/><circle cx="772.10" cy="385.52" r="3.9"/><circle cx="774.55" cy="306.94" r="3.9"/><circle cx="777.00" cy="292.21" r="3.9"/><circle cx="779.45" cy="407.62" r="3.9"/><circle cx="781.90" cy="380.61" r="3.9"/><circle cx="784.35" cy="333.96" r="3.9"/><circle cx="786.80" cy="478.83" r="3.9"/><circle cx="789.25" cy="648.27" r="3.9"/><circle cx="791.70" cy="655.63" r="3.9"/><circle cx="794.15" cy="527.94" r="3.9"/><circle cx="796.60" cy="540.22" r="3.9"/><circle cx="799.05" cy="550.04" r="3.9"/><circle cx="801.50" cy="461.64" r="3.9"/><circle cx="803.95" cy="419.90" r="3.9"/><circle cx="806.40" cy="437.09" r="3.9"/><circle cx="808.85" cy="356.06" r="3.9"/><circle cx="811.30" cy="395.34" r="3.9"/><circle cx="813.75" cy="419.90" r="3.9"/><circle cx="816.20" cy="444.46" r="3.9"/><circle cx="818.65" cy="476.38" r="3.9"/><circle cx="821.10" cy="429.72" r="3.9"/><circle cx="823.55" cy="456.73" r="3.9"/><circle cx="826.00" cy="400.26" r="3.9"/><circle cx="828.45" cy="329.04" r="3.9"/><circle cx="830.90" cy="326.59" r="3.9"/><circle cx="833.35" cy="326.59" r="3.9"/><circle cx="835.80" cy="257.83" r="3.9"/><circle cx="838.25" cy="250.47" r="3.9"/><circle cx="840.70" cy="243.10" r="3.9"/><circle cx="843.15" cy="284.84" r="3.9"/><circle cx="845.60" cy="429.72" r="3.9"/><circle cx="848.05" cy="513.21" r="3.9"/><circle cx="850.50" cy="414.99" r="3.9"/><circle cx="852.95" cy="434.63" r="3.9"/><circle cx="855.40" cy="532.86" r="3.9"/><circle cx="857.85" cy="387.98" r="3.9"/><circle cx="860.30" cy="255.38" r="3.9"/><circle cx="862.75" cy="279.93" r="3.9"/><circle cx="865.20" cy="368.33" r="3.9"/><circle cx="867.65" cy="380.61" r="3.9"/><circle cx="870.10" cy="451.82" r="3.9"/><circle cx="872.55" cy="324.13" r="3.9"/><circle cx="875.00" cy="449.37" r="3.9"/><circle cx="877.45" cy="451.82" r="3.9"/><circle cx="879.90" cy="451.82" r="3.9"/><circle cx="882.35" cy="449.37" r="3.9"/><circle cx="884.80" cy="348.69" r="3.9"/><circle cx="887.25" cy="338.87" r="3.9"/><circle cx="889.70" cy="319.22" r="3.9"/><circle cx="892.15" cy="333.96" r="3.9"/><circle cx="894.60" cy="299.58" r="3.9"/></g>
<path d="M485.45 337.86 L485.82 337.86 L485.82 343.36 L486.19 343.36 L486.19 325.21 L486.57 325.21 L486.57 322.33 L486.94 322.33 L486.94 352.70 L487.31 352.70 L487.31 356.78 L487.68 356.78 L487.68 354.13 L488.05 354.13 L488.05 348.45 L488.43 348.45 L488.43 346.95 L488.80 346.95 L488.80 376.34 L489.17 376.34 L489.17 388.03 L489.54 388.03 L489.54 368.38 L489.91 368.38 L489.91 379.80 L490.29 379.80 L490.29 382.62 L490.66 382.62 L490.66 404.98 L491.03 404.98 L491.03 415.82 L491.40 415.82 L491.40 385.10 L491.77 385.10 L491.77 402.04 L492.15 402.04 L492.15 425.21 L492.52 425.21 L492.52 431.38 L492.89 431.38 L492.89 438.06 L493.26 438.06 L493.26 423.28 L493.63 423.28 L493.63 436.39 L494.00 436.39 L494.00 467.03 L494.38 467.03 L494.38 456.48 L494.75 456.48 L494.75 453.58 L495.12 453.58 L495.12 452.17 L495.49 452.17 L495.49 462.31 L495.86 462.31 L495.86 486.68 L496.24 486.68 L496.24 463.96 L496.61 463.96 L496.61 459.16 L496.98 459.16 L496.98 469.46 L497.35 469.46 L497.35 478.98 L497.72 478.98 L497.72 490.96 L498.10 490.96 L498.10 472.58 L498.47 472.58 L498.47 462.38 L498.84 462.38 L498.84 477.91 L499.21 477.91 L499.21 480.00 L499.58 480.00 L499.58 478.55 L499.96 478.55 L499.96 464.70 L500.33 464.70 L500.33 456.79 L500.70 456.79 L500.70 482.75 L501.07 482.75 L501.07 479.86 L501.44 479.86 L501.44 461.99 L501.82 461.99 L501.82 448.57 L502.19 448.57 L502.19 445.78 L502.56 445.78 L502.56 459.28 L502.93 459.28 L502.93 458.69 L503.30 458.69 L503.30 421.75 L503.68 421.75 L503.68 424.10 L504.05 424.10 L504.05 435.12 L504.42 435.12 L504.42 436.76 L504.79 436.76 L504.79 422.34 L505.16 422.34 L505.16 394.20 L505.54 394.20 L505.54 394.82 L505.91 394.82 L505.91 412.39 L506.28 412.39 L506.28 403.66 L506.65 403.66 L506.65 387.67 L507.02 387.67 L507.02 363.42 L507.40 363.42 L507.40 374.51 L507.77 374.51 L507.77 393.04 L508.14 393.04 L508.14 367.56 L508.51 367.56 L508.51 347.57 L508.88 347.57 L508.88 343.82 L509.26 343.82 L509.26 354.30 L509.63 354.30 L509.63 367.51 L510.00 367.51 L510.00 342.99 L510.37 342.99 L510.37 327.78 L510.74 327.78 L510.74 332.85 L511.11 332.85 L511.11 341.19 L511.49 341.19 L511.49 342.58 L511.86 342.58 L511.86 323.49 L512.23 323.49 L512.23 312.30 L512.60 312.30 L512.60 331.96 L512.97 331.96 L512.97 339.68 L513.35 339.68 L513.35 326.78 L513.72 326.78 L513.72 323.27 L514.09 323.27 L514.09 313.64 L514.46 313.64 L514.46 343.75 L514.83 343.75 L514.83 346.03 L515.21 346.03 L515.21 320.05 L515.58 320.05 L515.58 325.60 L515.95 325.60 L515.95 335.36 L516.32 335.36 L516.32 351.05 L516.69 351.05 L516.69 361.55 L517.07 361.55 L517.07 336.33 L517.44 336.33 L517.44 345.16 L517.81 345.16 L517.81 364.79 L518.18 364.79 L518.18 378.61 L518.55 378.61 L518.55 373.02 L518.93 373.02 L518.93 362.38 L519.30 362.38 L519.30 379.35 L519.67 379.35 L519.67 401.05 L520.04 401.05 L520.04 400.34 L520.41 400.34 L520.41 400.53 L520.79 400.53 L520.79 397.68 L521.16 397.68 L521.16 413.91 L521.53 413.91 L521.53 437.32 L521.90 437.32 L521.90 426.47 L522.27 426.47 L522.27 418.01 L522.65 418.01 L522.65 431.65 L523.02 431.65 L523.02 443.21 L523.39 443.21 L523.39 458.60 L523.76 458.60 L523.76 447.01 L524.13 447.01 L524.13 437.29 L524.51 437.29 L524.51 459.02 L524.88 459.02 L524.88 473.43 L525.25 473.43 L525.25 478.70 L525.62 478.70 L525.62 459.37 L525.99 459.37 L525.99 451.15 L526.37 451.15 L526.37 486.07 L526.74 486.07 L526.74 490.43 L527.11 490.43 L527.11 472.29 L527.48 472.29 L527.48 465.98 L527.85 465.98 L527.85 468.79 L528.22 468.79 L528.22 485.05 L528.60 485.05 L528.60 486.20 L528.97 486.20 L528.97 462.52 L529.34 462.52 L529.34 466.88 L529.71 466.88 L529.71 473.88 L530.08 473.88 L530.08 484.28 L530.46 484.28 L530.46 471.95 L530.83 471.95 L530.83 448.09 L531.20 448.09 L531.20 449.58 L531.57 449.58 L531.57 466.56 L531.94 466.56 L531.94 453.88 L532.32 453.88 L532.32 447.87 L532.69 447.87 L532.69 426.04 L533.06 426.04 L533.06 432.83 L533.43 432.83 L533.43 444.77 L533.80 444.77 L533.80 430.33 L534.18 430.33 L534.18 414.75 L534.55 414.75 L534.55 401.04 L534.92 401.04 L534.92 400.95 L535.29 400.95 L535.29 418.16 L535.66 418.16 L535.66 394.47 L536.04 394.47 L536.04 369.69 L536.41 369.69 L536.41 383.06 L536.78 383.06 L536.78 384.85 L537.15 384.85 L537.15 387.44 L537.52 387.44 L537.52 361.42 L537.90 361.42 L537.90 346.20 L538.27 346.20 L538.27 364.33 L538.64 364.33 L538.64 361.28 L539.01 361.28 L539.01 350.36 L539.38 350.36 L539.38 339.76 L539.76 339.76 L539.76 323.98 L540.13 323.98 L540.13 342.56 L540.50 342.56 L540.50 341.32 L540.87 341.32 L540.87 322.88 L541.24 322.88 L541.24 319.47 L541.62 319.47 L541.62 318.21 L541.99 318.21 L541.99 341.58 L542.36 341.58 L542.36 343.61 L542.73 343.61 L542.73 316.30 L543.10 316.30 L543.10 314.60 L543.47 314.60 L543.47 328.30 L543.85 328.30 L543.85 333.64 L544.22 333.64 L544.22 343.93 L544.59 343.93 L544.59 314.55 L544.96 314.55 L544.96 329.03 L545.33 329.03 L545.33 350.08 L545.71 350.08 L545.71 349.74 L546.08 349.74 L546.08 341.86 L546.45 341.86 L546.45 340.90 L546.82 340.90 L546.82 350.73 L547.19 350.73 L547.19 377.27 L547.57 377.27 L547.57 362.86 L547.94 362.86 L547.94 359.45 L548.31 359.45 L548.31 367.64 L548.68 367.64 L548.68 379.84 L549.05 379.84 L549.05 402.54 L549.43 402.54 L549.43 393.49 L549.80 393.49 L549.80 382.10 L550.17 382.10 L550.17 403.76 L550.54 403.76 L550.54 414.86 L550.91 414.86 L550.91 430.28 L551.29 430.28 L551.29 416.53 L551.66 416.53 L551.66 407.97 L552.03 407.97 L552.03 442.65 L552.40 442.65 L552.40 450.86 L552.77 450.86 L552.77 447.38 L553.15 447.38 L553.15 443.14 L553.52 443.14 L553.52 440.11 L553.89 440.11 L553.89 474.45 L554.26 474.45 L554.26 475.48 L554.63 475.48 L554.63 451.68 L555.01 451.68 L555.01 457.76 L555.38 457.76 L555.38 465.36 L555.75 465.36 L555.75 485.78 L556.12 485.78 L556.12 485.36 L556.49 485.36 L556.49 459.91 L556.87 459.91 L556.87 469.98 L557.24 469.98 L557.24 481.51 L557.61 481.51 L557.61 489.27 L557.98 489.27 L557.98 479.91 L558.35 479.91 L558.35 463.56 L558.73 463.56 L558.73 466.09 L559.10 466.09 L559.10 488.03 L559.47 488.03 L559.47 475.51 L559.84 475.51 L559.84 460.53 L560.21 460.53 L560.21 451.01 L560.58 451.01 L560.58 454.57 L560.96 454.57 L560.96 470.15 L561.33 470.15 L561.33 452.68 L561.70 452.68 L561.70 437.59 L562.07 437.59 L562.07 438.52 L562.44 438.52 L562.44 435.63 L562.82 435.63 L562.82 448.57 L563.19 448.57 L563.19 424.18 L563.56 424.18 L563.56 396.01 L563.93 396.01 L563.93 414.56 L564.30 414.56 L564.30 415.12 L564.68 415.12 L564.68 403.46 L565.05 403.46 L565.05 390.57 L565.42 390.57 L565.42 369.08 L565.79 369.08 L565.79 394.57 L566.16 394.57 L566.16 390.27 L566.54 390.27 L566.54 364.23 L566.91 364.23 L566.91 354.42 L567.28 354.42 L567.28 346.01 L567.65 346.01 L567.65 367.67 L568.02 367.67 L568.02 364.13 L568.40 364.13 L568.40 335.69 L568.77 335.69 L568.77 337.94 L569.14 337.94 L569.14 339.24 L569.51 339.24 L569.51 342.13 L569.88 342.13 L569.88 339.98 L570.26 339.98 L570.26 311.93 L570.63 311.93 L570.63 316.26 L571.00 316.26 L571.00 340.73 L571.37 340.73 L571.37 335.97 L571.74 335.97 L571.74 328.81 L572.12 328.81 L572.12 313.15 L572.49 313.15 L572.49 323.19 L572.86 323.19 L572.86 346.43 L573.23 346.43 L573.23 330.05 L573.60 330.05 L573.60 323.31 L573.98 323.31 L573.98 326.00 L574.35 326.00 L574.35 330.86 L574.72 330.86 L574.72 353.08 L575.09 353.08 L575.09 342.14 L575.46 342.14 L575.46 335.12 L575.83 335.12 L575.83 354.58 L576.21 354.58 L576.21 356.33 L576.58 356.33 L576.58 377.85 L576.95 377.85 L576.95 359.91 L577.32 359.91 L577.32 351.45 L577.69 351.45 L577.69 384.54 L578.07 384.54 L578.07 390.09 L578.44 390.09 L578.44 395.89 L578.81 395.89 L578.81 391.96 L579.18 391.96 L579.18 385.07 L579.55 385.07 L579.55 420.97 L579.93 420.97 L579.93 423.28 L580.30 423.28 L580.30 413.28 L580.67 413.28 L580.67 419.91 L581.04 419.91 L581.04 427.42 L581.41 427.42 L581.41 444.50 L581.79 444.50 L581.79 454.59 L582.16 454.59 L582.16 429.64 L582.53 429.64 L582.53 440.20 L582.90 440.20 L582.90 456.49 L583.27 456.49 L583.27 462.86 L583.65 462.86 L583.65 468.81 L584.02 468.81 L584.02 452.64 L584.39 452.64 L584.39 461.39 L584.76 461.39 L584.76 489.36 L585.13 489.36 L585.13 483.56 L585.51 483.56 L585.51 474.40 L585.88 474.40 L585.88 461.71 L586.25 461.71 L586.25 475.59 L586.62 475.59 L586.62 499.10 L586.99 499.10 L586.99 480.37 L587.37 480.37 L587.37 463.69 L587.74 463.69 L587.74 469.53 L588.11 469.53 L588.11 473.20 L588.48 473.20 L588.48 486.43 L588.85 486.43 L588.85 468.69 L589.23 468.69 L589.23 445.70 L589.60 445.70 L589.60 460.80 L589.97 460.80 L589.97 470.22 L590.34 470.22 L590.34 460.09 L590.71 460.09 L590.71 444.19 L591.09 444.19 L591.09 430.93 L591.46 430.93 L591.46 448.87 L591.83 448.87 L591.83 446.85 L592.20 446.85 L592.20 424.67 L592.57 424.67 L592.57 418.98 L592.94 418.98 L592.94 404.97 L593.32 404.97 L593.32 419.02 L593.69 419.02 L593.69 418.43 L594.06 418.43 L594.06 385.43 L594.43 385.43 L594.43 386.48 L594.80 386.48 L594.80 384.55 L595.18 384.55 L595.18 395.18 L595.55 395.18 L595.55 386.76 L595.92 386.76 L595.92 352.24 L596.29 352.24 L596.29 355.40 L596.66 355.40 L596.66 367.33 L597.04 367.33 L597.04 365.58 L597.41 365.58 L597.41 351.78 L597.78 351.78 L597.78 326.56 L598.15 326.56 L598.15 330.51 L598.52 330.51 L598.52 355.80 L598.90 355.80 L598.90 336.85 L599.27 336.85 L599.27 329.62 L599.64 329.62 L599.64 316.48 L600.01 316.48 L600.01 321.97 L600.38 321.97 L600.38 348.07 L600.76 348.07 L600.76 331.16 L601.13 331.16 L601.13 312.24 L601.50 312.24 L601.50 322.64 L601.87 322.64 L601.87 326.63 L602.24 326.63 L602.24 342.08 L602.62 342.08 L602.62 331.16 L602.99 331.16 L602.99 308.67 L603.36 308.67 L603.36 341.42 L603.73 341.42 L603.73 342.32 L604.10 342.32 L604.10 347.41 L604.48 347.41 L604.48 339.21 L604.85 339.21 L604.85 326.47 L605.22 326.47 L605.22 362.91 L605.59 362.91 L605.59 373.00 L605.96 373.00 L605.96 354.89 L606.34 354.89 L606.34 355.90 L606.71 355.90 L606.71 358.24 L607.08 358.24 L607.08 384.53 L607.45 384.53 L607.45 392.44 L607.82 392.44 L607.82 374.98 L608.20 374.98 L608.20 380.55 L608.57 380.55 L608.57 406.11 L608.94 406.11 L608.94 417.45 L609.31 417.45 L609.31 421.69 L609.68 421.69 L609.68 403.94 L610.05 403.94 L610.05 412.44 L610.43 412.44 L610.43 440.70 L610.80 440.70 L610.80 440.71 L611.17 440.71 L611.17 437.96 L611.54 437.96 L611.54 431.11 L611.91 431.11 L611.91 445.40 L612.29 445.40 L612.29 474.42 L612.66 474.42 L612.66 458.25 L613.03 458.25 L613.03 449.52 L613.40 449.52 L613.40 461.41 L613.77 461.41 L613.77 464.17 L614.15 464.17 L614.15 485.02 L614.52 485.02 L614.52 473.40 L614.89 473.40 L614.89 457.82 L615.26 457.82 L615.26 479.51 L615.63 479.51 L615.63 482.56 L616.01 482.56 L616.01 488.97 L616.38 488.97 L616.38 473.54 L616.75 473.54 L616.75 462.30 L617.12 462.30 L617.12 476.98 L617.49 476.98 L617.49 485.77 L617.87 485.77 L617.87 474.11 L618.24 474.11 L618.24 460.77 L618.61 460.77 L618.61 451.11 L618.98 451.11 L618.98 472.36 L619.35 472.36 L619.35 472.74 L619.73 472.74 L619.73 450.92 L620.10 450.92 L620.10 442.21 L620.47 442.21 L620.47 441.81 L620.84 441.81 L620.84 445.95 L621.21 445.95 L621.21 445.22 L621.59 445.22 L621.59 417.78 L621.96 417.78 L621.96 415.15 L622.33 415.15 L622.33 428.77 L622.70 428.77 L622.70 421.06 L623.07 421.06 L623.07 410.63 L623.45 410.63 L623.45 381.30 L623.82 381.30 L623.82 386.05 L624.19 386.05 L624.19 406.06 L624.56 406.06 L624.56 390.77 L624.93 390.77 L624.93 372.92 L625.30 372.92 L625.30 355.80 L625.68 355.80 L625.68 364.40 L626.05 364.40 L626.05 377.14 L626.42 377.14 L626.42 362.58 L626.79 362.58 L626.79 341.48 L627.16 341.48 L627.16 344.91 L627.54 344.91 L627.54 342.07 L627.91 342.07 L627.91 356.97 L628.28 356.97 L628.28 336.71 L628.65 336.71 L628.65 313.44 L629.02 313.44 L629.02 337.06 L629.40 337.06 L629.40 334.97 L629.77 334.97 L629.77 338.80 L630.14 338.80 L630.14 322.75 L630.51 322.75 L630.51 310.19 L630.88 310.19 L630.88 336.15 L631.26 336.15 L631.26 340.07 L631.63 340.07 L631.63 325.21 L632.00 325.21 L632.00 323.30 L632.37 323.30 L632.37 319.95 L632.74 319.95 L632.74 341.83 L633.12 341.83 L633.12 354.52 L633.49 354.52 L633.49 330.36 L633.86 330.36 L633.86 331.90 L634.23 331.90 L634.23 344.27 L634.60 344.27 L634.60 358.95 L634.98 358.95 L634.98 363.50 L635.35 363.50 L635.35 343.53 L635.72 343.53 L635.72 351.64 L636.09 351.64 L636.09 383.59 L636.46 383.59 L636.46 380.45 L636.84 380.45 L636.84 382.26 L637.21 382.26 L637.21 369.61 L637.58 369.61 L637.58 387.32 L637.95 387.32 L637.95 419.16 L638.32 419.16 L638.32 405.68 L638.70 405.68 L638.70 407.52 L639.07 407.52 L639.07 403.89 L639.44 403.89 L639.44 416.42 L639.81 416.42 L639.81 451.36 L640.18 451.36 L640.18 438.70 L640.56 438.70 L640.56 422.13 L640.93 422.13 L640.93 445.58 L641.30 445.58 L641.30 457.73 L641.67 457.73 L641.67 464.31 L642.04 464.31 L642.04 457.95 L642.41 457.95 L642.41 440.23 L642.79 440.23 L642.79 473.77 L643.16 473.77 L643.16 480.83 L643.53 480.83 L643.53 473.32 L643.90 473.32 L643.90 473.81 L644.27 473.81 L644.27 461.97 L644.65 461.97 L644.65 482.80 L645.02 482.80 L645.02 488.79 L645.39 488.79 L645.39 466.78 L645.76 466.78 L645.76 473.54 L646.13 473.54 L646.13 469.22 L646.51 469.22 L646.51 482.15 L646.88 482.15 L646.88 489.09 L647.25 489.09 L647.25 456.95 L647.62 456.95 L647.62 462.58 L647.99 462.58 L647.99 474.66 L648.37 474.66 L648.37 475.05 L648.74 475.05 L648.74 473.23 L649.11 473.23 L649.11 439.65 L649.48 439.65 L649.48 440.75 L649.85 440.75 L649.85 459.32 L650.23 459.32 L650.23 450.50 L650.60 450.50 L650.60 438.46 L650.97 438.46 L650.97 420.99 L651.34 420.99 L651.34 414.39 L651.71 414.39 L651.71 432.76 L652.09 432.76 L652.09 412.18 L652.46 412.18 L652.46 400.10 L652.83 400.10 L652.83 398.99 L653.20 398.99 L653.20 389.59 L653.57 389.59 L653.57 406.30 L653.95 406.30 L653.95 381.18 L654.32 381.18 L654.32 360.99 L654.69 360.99 L654.69 372.41 L655.06 372.41 L655.06 372.80 L655.43 372.80 L655.43 371.35 L655.81 371.35 L655.81 352.75 L656.18 352.75 L656.18 337.10 L656.55 337.10 L656.55 350.71 L656.92 350.71 L656.92 353.02 L657.29 353.02 L657.29 342.24 L657.66 342.24 L657.66 330.92 L658.04 330.92 L658.04 317.51 L658.41 317.51 L658.41 340.21 L658.78 340.21 L658.78 348.24 L659.15 348.24 L659.15 321.56 L659.52 321.56 L659.52 317.52 L659.90 317.52 L659.90 327.56 L660.27 327.56 L660.27 330.64 L660.64 330.64 L660.64 337.01 L661.01 337.01 L661.01 310.91 L661.38 310.91 L661.38 314.45 L661.76 314.45 L661.76 337.29 L662.13 337.29 L662.13 340.90 L662.50 340.90 L662.50 340.32 L662.87 340.32 L662.87 324.20 L663.24 324.20 L663.24 327.75 L663.62 327.75 L663.62 359.37 L663.99 359.37 L663.99 357.84 L664.36 357.84 L664.36 346.15 L664.73 346.15 L664.73 347.27 L665.10 347.27 L665.10 356.95 L665.48 356.95 L665.48 385.87 L665.85 385.87 L665.85 379.59 L666.22 379.59 L666.22 363.45 L666.59 363.45 L666.59 380.06 L666.96 380.06 L666.96 393.44 L667.34 393.44 L667.34 411.40 L667.71 411.40 L667.71 402.90 L668.08 402.90 L668.08 393.14 L668.45 393.14 L668.45 417.68 L668.82 417.68 L668.82 437.19 L669.20 437.19 L669.20 436.45 L669.57 436.45 L669.57 431.50 L669.94 431.50 L669.94 426.99 L670.31 426.99 L670.31 452.98 L670.68 452.98 L670.68 463.68 L671.06 463.68 L671.06 449.11 L671.43 449.11 L671.43 454.10 L671.80 454.10 L671.80 448.04 L672.17 448.04 L672.17 472.43 L672.54 472.43 L672.54 486.51 L672.92 486.51 L672.92 458.28 L673.29 458.28 L673.29 462.86 L673.66 462.86 L673.66 476.26 L674.03 476.26 L674.03 485.67 L674.40 485.67 L674.40 483.75 L674.77 483.75 L674.77 461.63 L675.15 461.63 L675.15 464.53 L675.52 464.53 L675.52 486.07 L675.89 486.07 L675.89 477.59 L676.26 477.59 L676.26 480.79 L676.63 480.79 L676.63 458.08 L677.01 458.08 L677.01 458.58 L677.38 458.58 L677.38 486.98 L677.75 486.98 L677.75 468.93 L678.12 468.93 L678.12 455.28 L678.49 455.28 L678.49 450.85 L678.87 450.85 L678.87 449.43 L679.24 449.43 L679.24 467.98 L679.61 467.98 L679.61 446.02 L679.98 446.02 L679.98 415.13 L680.35 415.13 L680.35 428.77 L680.73 428.77 L680.73 429.86 L681.10 429.86 L681.10 426.05 L681.47 426.05 L681.47 411.70 L681.84 411.70 L681.84 382.83 L682.21 382.83 L682.21 403.82 L682.59 403.82 L682.59 404.57 L682.96 404.57 L682.96 395.41 L683.33 395.41 L683.33 377.74 L683.70 377.74 L683.70 359.65 L684.07 359.65 L684.07 383.49 L684.45 383.49 L684.45 378.71 L684.82 378.71 L684.82 357.40 L685.19 357.40 L685.19 348.11 L685.56 348.11 L685.56 349.07 L685.93 349.07 L685.93 355.36 L686.31 355.36 L686.31 357.25 L686.68 357.25 L686.68 330.83 L687.05 330.83 L687.05 320.92 L687.42 320.92 L687.42 339.88 L687.79 339.88 L687.79 338.30 L688.17 338.30 L688.17 336.35 L688.54 336.35 L688.54 314.73 L688.91 314.73 L688.91 317.79 L689.28 317.79 L689.28 339.24 L689.65 339.24 L689.65 331.40 L690.02 331.40 L690.02 326.24 L690.40 326.24 L690.40 314.10 L690.77 314.10 L690.77 323.45 L691.14 323.45 L691.14 353.59 L691.51 353.59 L691.51 339.26 L691.88 339.26 L691.88 327.30 L692.26 327.30 L692.26 336.53 L692.63 336.53 L692.63 339.33 L693.00 339.33 L693.00 362.65 L693.37 362.65 L693.37 347.72 L693.74 347.72 L693.74 333.40 L694.12 333.40 L694.12 364.61 L694.49 364.61 L694.49 368.02 L694.86 368.02 L694.86 373.68 L695.23 373.68 L695.23 377.87 L695.60 377.87 L695.60 358.67 L695.98 358.67 L695.98 393.02 L696.35 393.02 L696.35 408.16 L696.72 408.16 L696.72 392.91 L697.09 392.91 L697.09 401.69 L697.46 401.69 L697.46 398.93 L697.84 398.93 L697.84 420.28 L698.21 420.28 L698.21 437.76 L698.58 437.76 L698.58 419.35 L698.95 419.35 L698.95 419.77 L699.32 419.77 L699.32 435.20 L699.70 435.20 L699.70 451.54 L700.07 451.54 L700.07 466.58 L700.44 466.58 L700.44 439.12 L700.81 439.12 L700.81 447.05 L701.18 447.05 L701.18 474.66 L701.56 474.66 L701.56 477.08 L701.93 477.08 L701.93 472.87 L702.30 472.87 L702.30 461.87 L702.67 461.87 L702.67 463.85 L703.04 463.85 L703.04 490.41 L703.42 490.41 L703.42 482.62 L703.79 482.62 L703.79 473.20 L704.16 473.20 L704.16 468.00 L704.53 468.00 L704.53 473.35 L704.90 473.35 L704.90 492.12 L705.28 492.12 L705.28 479.10 L705.65 479.10 L705.65 453.65 L706.02 453.65 L706.02 464.70 L706.39 464.70 L706.39 470.43 L706.76 470.43 L706.76 482.43 L707.13 482.43 L707.13 467.95 L707.51 467.95 L707.51 436.28 L707.88 436.28 L707.88 455.20 L708.25 455.20 L708.25 461.27 L708.62 461.27 L708.62 452.26 L708.99 452.26 L708.99 440.53 L709.37 440.53 L709.37 417.67 L709.74 417.67 L709.74 436.04 L710.11 436.04 L710.11 440.73 L710.48 440.73 L710.48 413.12 L710.85 413.12 L710.85 403.30 L711.23 403.30 L711.23 402.32 L711.60 402.32 L711.60 411.32 L711.97 411.32 L711.97 407.10 L712.34 407.10 L712.34 373.81 L712.71 373.81 L712.71 368.70 L713.09 368.70 L713.09 385.35 L713.46 385.35 L713.46 383.93 L713.83 383.93 L713.83 379.35 L714.20 379.35 L714.20 348.43 L714.57 348.43 L714.57 343.32 L714.95 343.32 L714.95 368.59 L715.32 368.59 L715.32 353.73 L715.69 353.73 L715.69 347.88 L716.06 347.88 L716.06 332.18 L716.43 332.18 L716.43 325.80 L716.81 325.80 L716.81 350.97 L717.18 350.97 L717.18 335.19 L717.55 335.19 L717.55 319.93 L717.92 319.93 L717.92 321.21 L718.29 321.21 L718.29 327.22 L718.67 327.22 L718.67 344.10 L719.04 344.10 L719.04 326.55 L719.41 326.55 L719.41 304.96 L719.78 304.96 L719.78 330.29 L720.15 330.29 L720.15 338.58 L720.53 338.58 L720.53 337.10 L720.90 337.10 L720.90 330.87 L721.27 330.87 L721.27 313.16 L721.64 313.16 L721.64 344.62 L722.01 344.62 L722.01 356.43 L722.39 356.43 L722.39 348.68 L722.76 348.68 L722.76 341.96 L723.13 341.96 L723.13 341.72 L723.50 341.72 L723.50 364.07 L723.87 364.07 L723.87 376.99 L724.24 376.99 L724.24 363.79 L724.62 363.79 L724.62 365.55 L724.99 365.55 L724.99 374.78 L725.36 374.78 L725.36 390.17 L725.73 390.17 L725.73 408.56 L726.10 408.56 L726.10 387.60 L726.48 387.60 L726.48 396.81 L726.85 396.81 L726.85 414.54 L727.22 414.54 L727.22 428.37 L727.59 428.37 L727.59 433.84 L727.96 433.84 L727.96 414.83 L728.34 414.83 L728.34 422.65 L728.71 422.65 L728.71 453.03 L729.08 453.03 L729.08 453.05 L729.45 453.05 L729.45 442.67 L729.82 442.67 L729.82 448.34 L730.20 448.34 L730.20 454.01 L730.57 454.01 L730.57 478.35 L730.94 478.35 L730.94 474.55 L731.31 474.55 L731.31 456.45 L731.68 456.45 L731.68 464.45 L732.06 464.45 L732.06 472.45 L732.43 472.45 L732.43 491.63 L732.80 491.63 L732.80 482.22 L733.17 482.22 L733.17 459.30 L733.54 459.30 L733.54 476.02 L733.92 476.02 L733.92 488.49 L734.29 488.49 L734.29 487.04 L734.66 487.04 L734.66 471.93 L735.03 471.93 L735.03 455.54 L735.40 455.54 L735.40 472.53 L735.78 472.53 L735.78 481.53 L736.15 481.53 L736.15 460.12 L736.52 460.12 L736.52 457.54 L736.89 457.54 L736.89 446.48 L737.26 446.48 L737.26 464.29 L737.64 464.29 L737.64 470.62 L738.01 470.62 L738.01 437.91 L738.38 437.91 L738.38 426.58 L738.75 426.58 L738.75 433.16 L739.12 433.16 L739.12 440.80 L739.49 440.80 L739.49 439.30 L739.87 439.30 L739.87 407.96 L740.24 407.96 L740.24 402.35 L740.61 402.35 L740.61 419.61 L740.98 419.61 L740.98 409.98 L741.35 409.98 L741.35 401.57 L741.73 401.57 L741.73 377.18 L742.10 377.18 L742.10 370.29 L742.47 370.29 L742.47 394.58 L742.84 394.58 L742.84 375.40 L743.21 375.40 L743.21 358.02 L743.59 358.02 L743.59 357.03 L743.96 357.03 L743.96 349.75 L744.33 349.75 L744.33 365.25 L744.70 365.25 L744.70 354.21 L745.07 354.21 L745.07 331.37 L745.45 331.37 L745.45 337.05 L745.82 337.05 L745.82 340.50 L746.19 340.50 L746.19 344.52 L746.56 344.52 L746.56 327.82 L746.93 327.82 L746.93 308.05 L747.31 308.05 L747.31 326.60 L747.68 326.60 L747.68 343.63 L748.05 343.63 L748.05 328.40 L748.42 328.40 L748.42 319.55 L748.79 319.55 L748.79 314.63 L749.17 314.63 L749.17 336.18 L749.54 336.18 L749.54 343.53 L749.91 343.53 L749.91 320.58 L750.28 320.58 L750.28 327.88 L750.65 327.88 L750.65 327.33 L751.03 327.33 L751.03 348.26 L751.40 348.26 L751.40 355.56 L751.77 355.56 L751.77 332.75 L752.14 332.75 L752.14 339.93 L752.51 339.93 L752.51 361.76 L752.89 361.76 L752.89 363.76 L753.26 363.76 L753.26 373.32 L753.63 373.32 L753.63 354.28 L754.00 354.28 L754.00 363.45 L754.37 363.45 L754.37 396.22 L754.75 396.22 L754.75 389.29 L755.12 389.29 L755.12 389.55 L755.49 389.55 L755.49 388.39 L755.86 388.39 L755.86 395.49 L756.23 395.49 L756.23 426.14 L756.60 426.14 L756.60 420.83 L756.98 420.83 L756.98 406.37 L757.35 406.37 L757.35 423.30 L757.72 423.30 L757.72 429.40 L758.09 429.40 L758.09 452.85 L758.46 452.85 L758.46 444.66 L758.84 444.66 L758.84 427.42 L759.21 427.42 L759.21 449.44 L759.58 449.44 L759.58 462.05 L759.95 462.05 L759.95 465.62 L760.32 465.62 L760.32 463.72 L760.70 463.72 L760.70 449.26 L761.07 449.26 L761.07 471.89 L761.44 471.89 L761.44 485.66 L761.81 485.66 L761.81 475.32 L762.18 475.32 L762.18 471.73 L762.56 471.73 L762.56 468.18 L762.93 468.18 L762.93 480.63 L763.30 480.63 L763.30 490.65 L763.67 490.65 L763.67 470.12 L764.04 470.12 L764.04 468.66 L764.42 468.66 L764.42 475.15 L764.79 475.15 L764.79 479.83 L765.16 479.83 L765.16 486.33 L765.53 486.33 L765.53 450.44 L765.90 450.44 L765.90 454.86 L766.28 454.86 L766.28 470.59 L766.65 470.59 L766.65 467.19 L767.02 467.19 L767.02 455.67 L767.39 455.67 L767.39 432.38 L767.76 432.38 L767.76 433.08 L768.14 433.08 L768.14 456.85 L768.51 456.85 L768.51 438.92 L768.88 438.92 L768.88 419.02 L769.25 419.02 L769.25 407.18 L769.62 407.18 L769.62 412.04 L770.00 412.04 L770.00 429.00 L770.37 429.00 L770.37 410.92 L770.74 410.92 L770.74 383.35 L771.11 383.35 L771.11 388.46 L771.48 388.46 L771.48 384.14 L771.86 384.14 L771.86 390.15 L772.23 390.15 L772.23 378.09 L772.60 378.09 L772.60 350.55 L772.97 350.55 L772.97 364.30 L773.34 364.30 L773.34 371.33 L773.71 371.33 L773.71 354.50 L774.09 354.50 L774.09 347.60 L774.46 347.60 L774.46 326.09 L774.83 326.09 L774.83 340.44 L775.20 340.44 L775.20 354.08 L775.57 354.08 L775.57 332.57 L775.95 332.57 L775.95 319.94 L776.32 319.94 L776.32 316.47 L776.69 316.47 L776.69 334.98 L777.06 334.98 L777.06 343.66 L777.43 343.66 L777.43 311.81 L777.81 311.81 L777.81 313.91 L778.18 313.91 L778.18 331.19 L778.55 331.19 L778.55 338.42 L778.92 338.42 L778.92 335.46 L779.29 335.46 L779.29 315.06 L779.67 315.06 L779.67 319.79 L780.04 319.79 L780.04 346.52 L780.41 346.52 L780.41 345.40 L780.78 345.40 L780.78 344.85 L781.15 344.85 L781.15 329.81 L781.53 329.81 L781.53 337.31 L781.90 337.31 L781.90 373.50 L782.27 373.50 L782.27 370.92 L782.64 370.92 L782.64 354.32 L783.01 354.32 L783.01 363.66 L783.39 363.66 L783.39 368.51 L783.76 368.51 L783.76 394.44 L784.13 394.44 L784.13 390.76 L784.50 390.76 L784.50 378.02 L784.87 378.02 L784.87 399.29 L785.25 399.29 L785.25 412.13 L785.62 412.13 L785.62 422.79 L785.99 422.79 L785.99 414.26 L786.36 414.26 L786.36 402.71 L786.73 402.71 L786.73 428.02 L787.11 428.02 L787.11 443.01 L787.48 443.01 L787.48 442.86 L787.85 442.86 L787.85 439.74 L788.22 439.74 L788.22 438.03 L788.59 438.03 L788.59 455.00 L788.96 455.00 L788.96 480.91 L789.34 480.91 L789.34 452.42 L789.71 452.42 L789.71 452.07 L790.08 452.07 L790.08 460.53 L790.45 460.53 L790.45 481.08 L790.82 481.08 L790.82 491.47 L791.20 491.47 L791.20 462.14 L791.57 462.14 L791.57 466.85 L791.94 466.85 L791.94 483.67 L792.31 483.67 L792.31 485.19 L792.68 485.19 L792.68 480.97 L793.06 480.97 L793.06 464.50 L793.43 464.50 L793.43 459.05 L793.80 459.05 L793.80 490.63 L794.17 490.63 L794.17 477.40 L794.54 477.40 L794.54 467.56 L794.92 467.56 L794.92 453.79 L795.29 453.79 L795.29 459.39 L795.66 459.39 L795.66 474.03 L796.03 474.03 L796.03 466.19 L796.40 466.19 L796.40 437.86 L796.78 437.86 L796.78 441.60 L797.15 441.60 L797.15 445.57 L797.52 445.57 L797.52 447.64 L797.89 447.64 L797.89 437.84 L798.26 437.84 L798.26 408.55 L798.64 408.55 L798.64 423.04 L799.01 423.04 L799.01 425.65 L799.38 425.65 L799.38 415.34 L799.75 415.34 L799.75 399.79 L800.12 399.79 L800.12 379.39 L800.50 379.39 L800.50 390.45 L800.87 390.45 L800.87 404.74 L801.24 404.74 L801.24 378.03 L801.61 378.03 L801.61 366.87 L801.98 366.87 L801.98 351.80 L802.36 351.80 L802.36 363.39 L802.73 363.39 L802.73 373.82 L803.10 373.82 L803.10 349.08 L803.47 349.08 L803.47 337.40 L803.84 337.40 L803.84 341.44 L804.22 341.44 L804.22 349.10 L804.59 349.10 L804.59 349.71 L804.96 349.71 L804.96 323.13 L805.33 323.13 L805.33 321.95 L805.70 321.95 L805.70 334.30 L806.07 334.30 L806.07 332.54 L806.45 332.54 L806.45 333.34 L806.82 333.34 L806.82 314.16 L807.19 314.16 L807.19 315.62 L807.56 315.62 L807.56 343.26 L807.93 343.26 L807.93 334.66 L808.31 334.66 L808.31 322.65 L808.68 322.65 L808.68 323.79 L809.05 323.79 L809.05 327.53 L809.42 327.53 L809.42 349.38 L809.79 349.38 L809.79 346.99 L810.17 346.99 L810.17 327.80 L810.54 327.80 L810.54 338.99 L810.91 338.99 L810.91 354.76 L811.28 354.76 L811.28 360.85 L811.65 360.85 L811.65 361.25 L812.03 361.25 L812.03 342.01 L812.40 342.01 L812.40 370.56 L812.77 370.56 L812.77 384.32 L813.14 384.32 L813.14 387.98 L813.51 387.98 L813.51 387.34 L813.89 387.34 L813.89 380.24 L814.26 380.24 L814.26 399.17 L814.63 399.17 L814.63 420.32 L815.00 420.32 L815.00 409.26 L815.37 409.26 L815.37 408.47 L815.75 408.47 L815.75 411.75 L816.12 411.75 L816.12 431.93 L816.49 431.93 L816.49 454.71 L816.86 454.71 L816.86 432.10 L817.23 432.10 L817.23 433.86 L817.61 433.86 L817.61 456.26 L817.98 456.26 L817.98 461.18 L818.35 461.18 L818.35 472.07 L818.72 472.07 L818.72 446.33 L819.09 446.33 L819.09 451.35 L819.47 451.35 L819.47 480.60 L819.84 480.60 L819.84 477.59 L820.21 477.59 L820.21 469.86 L820.58 469.86 L820.58 462.17 L820.95 462.17 L820.95 466.94 L821.32 466.94 L821.32 495.30 L821.70 495.30 L821.70 486.62 L822.07 486.62 L822.07 470.76 L822.44 470.76 L822.44 471.59 L822.81 471.59 L822.81 471.67 L823.18 471.67 L823.18 484.39 L823.56 484.39 L823.56 475.71 L823.93 475.71 L823.93 450.13 L824.30 450.13 L824.30 463.55 L824.67 463.55 L824.67 476.35 L825.04 476.35 L825.04 470.54 L825.42 470.54 L825.42 459.43 L825.79 459.43 L825.79 431.71 L826.16 431.71 L826.16 451.85 L826.53 451.85 L826.53 459.29 L826.90 459.29 L826.90 437.69 L827.28 437.69 L827.28 424.12 L827.65 424.12 L827.65 410.08 L828.02 410.08 L828.02 422.56 L828.39 422.56 L828.39 436.56 L828.76 436.56 L828.76 399.63 L829.14 399.63 L829.14 387.52 L829.51 387.52 L829.51 393.13 L829.88 393.13 L829.88 397.48 L830.25 397.48 L830.25 399.82 L830.62 399.82 L830.62 372.15 L831.00 372.15 L831.00 356.31 L831.37 356.31 L831.37 370.26 L831.74 370.26 L831.74 369.66 L832.11 369.66 L832.11 361.46 L832.48 361.46 L832.48 338.70 L832.86 338.70 L832.86 337.29 L833.23 337.29 L833.23 354.14 L833.60 354.14 L833.60 347.66 L833.97 347.66 L833.97 334.79 L834.34 334.79 L834.34 329.69 L834.72 329.69 L834.72 326.10 L835.09 326.10 L835.09 344.85 L835.46 344.85 L835.46 333.93 L835.83 333.93 L835.83 313.56 L836.20 313.56 L836.20 316.76 L836.58 316.76 L836.58 328.69 L836.95 328.69 L836.95 339.02 L837.32 339.02 L837.32 335.55 L837.69 335.55 L837.69 304.20 L838.06 304.20 L838.06 331.81 L838.43 331.81 L838.43 339.32 L838.81 339.32 L838.81 339.72 L839.18 339.72 L839.18 336.48 L839.55 336.48 L839.55 323.43 L839.92 323.43 L839.92 348.58 L840.29 348.58 L840.29 362.85 L840.67 362.85 L840.67 346.72 L841.04 346.72 L841.04 347.98 L841.41 347.98 L841.41 353.35 L841.78 353.35 L841.78 376.49 L842.15 376.49 L842.15 389.55 L842.53 389.55 L842.53 374.44 L842.90 374.44 L842.90 369.05 L843.27 369.05 L843.27 395.78 L843.64 395.78 L843.64 403.51 L844.01 403.51 L844.01 413.13 L844.39 413.13 L844.39 402.81 L844.76 402.81 L844.76 400.29 L845.13 400.29 L845.13 436.58 L845.50 436.58 L845.50 440.42 L845.87 440.42 L845.87 438.26 L846.25 438.26 L846.25 424.05 L846.62 424.05 L846.62 427.07 L846.99 427.07 L846.99 462.61 L847.36 462.61 L847.36 464.06 L847.73 464.06 L847.73 446.47 L848.11 446.47 L848.11 451.84 L848.48 451.84 L848.48 461.37 L848.85 461.37 L848.85 482.19 L849.22 482.19 L849.22 475.30 L849.59 475.30 L849.59 460.50 L849.97 460.50 L849.97 473.86 L850.34 473.86 L850.34 481.97 L850.71 481.97 L850.71 490.58 L851.08 490.58 L851.08 482.01 L851.45 482.01 L851.45 457.66 L851.83 457.66 L851.83 479.34 L852.20 479.34 L852.20 490.22 L852.57 490.22 L852.57 479.39 L852.94 479.39 L852.94 468.82 L853.31 468.82 L853.31 457.35 L853.68 457.35 L853.68 467.94 L854.06 467.94 L854.06 487.59 L854.43 487.59 L854.43 454.54 L854.80 454.54 L854.80 450.12 L855.17 450.12 L855.17 442.50 L855.54 442.50 L855.54 451.20 L855.92 451.20 L855.92 459.76 L856.29 459.76 L856.29 429.55 L856.66 429.55 L856.66 416.14 L857.03 416.14 L857.03 429.67 L857.40 429.67 L857.40 425.21 L857.78 425.21 L857.78 421.00 L858.15 421.00 L858.15 398.85 L858.52 398.85 L858.52 382.88 L858.89 382.88 L858.89 406.30 L859.26 406.30 L859.26 396.18 L859.64 396.18 L859.64 383.13 L860.01 383.13 L860.01 370.85 L860.38 370.85 L860.38 362.59 L860.75 362.59 L860.75 379.55 L861.12 379.55 L861.12 371.34 L861.50 371.34 L861.50 344.26 L861.87 344.26 L861.87 347.29 L862.24 347.29 L862.24 343.33 L862.61 343.33 L862.61 359.21 L862.98 359.21 L862.98 351.36 L863.36 351.36 L863.36 316.07 L863.73 316.07 L863.73 327.11 L864.10 327.11 L864.10 338.59 L864.47 338.59 L864.47 335.68 L864.84 335.68 L864.84 326.64 L865.22 326.64 L865.22 310.65 L865.59 310.65 L865.59 324.95 L865.96 324.95 L865.96 347.03 L866.33 347.03 L866.33 329.68 L866.70 329.68 L866.70 321.59 L867.08 321.59 L867.08 316.89 L867.45 316.89 L867.45 333.45 L867.82 333.45 L867.82 355.36 L868.19 355.36 L868.19 326.58 L868.56 326.58 L868.56 324.99 L868.94 324.99 L868.94 342.42 L869.31 342.42 L869.31 352.18 L869.68 352.18 L869.68 364.36 L870.05 364.36 L870.05 346.85 L870.42 346.85 L870.42 346.86 L870.79 346.86 L870.79 367.80 L871.17 367.80 L871.17 372.18 L871.54 372.18 L871.54 377.15 L871.91 377.15 L871.91 366.81 L872.28 366.81 L872.28 372.60 L872.65 372.60 L872.65 403.11 L873.03 403.11 L873.03 410.02 L873.40 410.02 L873.40 394.41 L873.77 394.41 L873.77 401.32 L874.14 401.32 L874.14 404.72 L874.51 404.72 L874.51 440.64 L874.89 440.64 L874.89 433.32 L875.26 433.32 L875.26 420.75 L875.63 420.75 L875.63 432.82 L876.00 432.82 L876.00 442.11 L876.37 442.11 L876.37 464.34 L876.75 464.34 L876.75 460.61 L877.12 460.61 L877.12 440.05 L877.49 440.05 L877.49 460.59 L877.86 460.59 L877.86 481.88 L878.23 481.88 L878.23 468.36 L878.61 468.36 L878.61 466.27 L878.98 466.27 L878.98 458.08 L879.35 458.08 L879.35 476.69 L879.72 476.69 L879.72 493.98 L880.09 493.98 L880.09 479.13 L880.47 479.13 L880.47 473.55 L880.84 473.55 L880.84 466.17 L881.21 466.17 L881.21 482.35 L881.58 482.35 L881.58 494.11 L881.95 494.11 L881.95 463.08 L882.33 463.08 L882.33 453.66 L882.70 453.66 L882.70 473.37 L883.07 473.37 L883.07 476.92 L883.44 476.92 L883.44 477.40 L883.81 477.40 L883.81 447.32 L884.19 447.32 L884.19 436.97 L884.56 436.97 L884.56 466.57 L884.93 466.57 L884.93 453.54 L885.30 453.54 L885.30 444.40 L885.67 444.40 L885.67 429.14 L886.05 429.14 L886.05 423.47 L886.42 423.47 L886.42 437.96 L886.79 437.96 L886.79 425.98 L887.16 425.98 L887.16 407.06 L887.53 407.06 L887.53 400.84 L887.90 400.84 L887.90 402.59 L888.28 402.59 L888.28 406.99 L888.65 406.99 L888.65 403.50 L889.02 403.50 L889.02 371.03 L889.39 371.03 L889.39 372.63 L889.76 372.63 L889.76 382.45 L890.14 382.45 L890.14 372.60 L890.51 372.60 L890.51 362.20 L890.88 362.20 L890.88 337.01 L891.25 337.01 L891.25 354.80 L891.62 354.80 L891.62 362.31 L892.00 362.31 L892.00 341.72 L892.37 341.72 L892.37 336.99 L892.74 336.99 L892.74 328.33 L893.11 328.33 L893.11 338.13 L893.48 338.13 L893.48 352.87 L893.86 352.87 L893.86 323.21 L894.23 323.21 L894.23 319.60 L894.60 319.60 L894.60 326.40" fill="none" stroke="#3b9a74" stroke-width="2.0" stroke-linejoin="miter" stroke-miterlimit="2"/>
<path d="M485.45 337.86 L485.82 337.86 L485.82 343.36 L486.19 343.36 L486.19 325.21 L486.57 325.21 L486.57 322.33 L486.94 322.33 L486.94 352.70 L487.31 352.70 L487.31 356.78 L487.68 356.78 L487.68 354.13 L488.05 354.13 L488.05 348.45 L488.43 348.45 L488.43 346.95 L488.80 346.95 L488.80 376.34 L489.17 376.34 L489.17 388.03 L489.54 388.03 L489.54 368.38 L489.91 368.38 L489.91 379.80 L490.29 379.80 L490.29 382.62 L490.66 382.62 L490.66 404.98 L491.03 404.98 L491.03 415.82 L491.40 415.82 L491.40 385.10 L491.77 385.10 L491.77 402.04 L492.15 402.04 L492.15 425.21 L492.52 425.21 L492.52 431.38 L492.89 431.38 L492.89 438.06 L493.26 438.06 L493.26 423.28 L493.63 423.28 L493.63 436.39 L494.00 436.39 L494.00 467.03 L494.38 467.03 L494.38 456.48 L494.75 456.48 L494.75 453.58 L495.12 453.58 L495.12 452.17 L495.49 452.17 L495.49 462.31 L495.86 462.31 L495.86 486.68 L496.24 486.68 L496.24 463.96 L496.61 463.96 L496.61 459.16 L496.98 459.16 L496.98 469.46 L497.35 469.46 L497.35 478.98 L497.72 478.98 L497.72 490.96 L498.10 490.96 L498.10 472.58 L498.47 472.58 L498.47 462.38 L498.84 462.38 L498.84 477.91 L499.21 477.91 L499.21 480.00 L499.58 480.00 L499.58 478.55 L499.96 478.55 L499.96 464.70 L500.33 464.70 L500.33 456.79 L500.70 456.79 L500.70 482.75 L501.07 482.75 L501.07 479.86 L501.44 479.86 L501.44 461.99 L501.82 461.99 L501.82 448.57 L502.19 448.57 L502.19 445.78 L502.56 445.78 L502.56 459.28 L502.93 459.28 L502.93 458.69 L503.30 458.69 L503.30 421.75 L503.68 421.75 L503.68 424.10 L504.05 424.10 L504.05 435.12 L504.42 435.12 L504.42 436.76 L504.79 436.76 L504.79 422.34 L505.16 422.34 L505.16 394.20 L505.54 394.20 L505.54 394.82 L505.91 394.82 L505.91 412.39 L506.28 412.39 L506.28 403.66 L506.65 403.66 L506.65 387.67 L507.02 387.67 L507.02 363.42 L507.40 363.42 L507.40 374.51 L507.77 374.51 L507.77 393.04 L508.14 393.04 L508.14 367.56 L508.51 367.56 L508.51 347.57 L508.88 347.57 L508.88 343.82 L509.26 343.82 L509.26 354.30 L509.63 354.30 L509.63 367.51 L510.00 367.51 L510.00 342.99 L510.37 342.99 L510.37 327.78 L510.74 327.78 L510.74 332.85 L511.11 332.85 L511.11 341.19 L511.49 341.19 L511.49 342.58 L511.86 342.58 L511.86 323.49 L512.23 323.49 L512.23 312.30 L512.60 312.30 L512.60 331.96 L512.97 331.96 L512.97 339.68 L513.35 339.68 L513.35 326.78 L513.72 326.78 L513.72 323.27 L514.09 323.27 L514.09 313.64 L514.46 313.64 L514.46 343.75 L514.83 343.75 L514.83 346.03 L515.21 346.03 L515.21 320.05 L515.58 320.05 L515.58 325.60 L515.95 325.60 L515.95 335.36 L516.32 335.36 L516.32 351.05 L516.69 351.05 L516.69 361.55 L517.07 361.55 L517.07 336.33 L517.44 336.33 L517.44 345.16 L517.81 345.16 L517.81 364.79 L518.18 364.79 L518.18 378.61 L518.55 378.61 L518.55 373.02 L518.93 373.02 L518.93 362.38 L519.30 362.38 L519.30 379.35 L519.67 379.35 L519.67 401.05 L520.04 401.05 L520.04 400.34 L520.41 400.34 L520.41 400.53 L520.79 400.53 L520.79 397.68 L521.16 397.68 L521.16 413.91 L521.53 413.91 L521.53 437.32 L521.90 437.32 L521.90 426.47 L522.27 426.47 L522.27 418.01 L522.65 418.01 L522.65 431.65 L523.02 431.65 L523.02 443.21 L523.39 443.21 L523.39 458.60 L523.76 458.60 L523.76 447.01 L524.13 447.01 L524.13 437.29 L524.51 437.29 L524.51 459.02 L524.88 459.02 L524.88 473.43 L525.25 473.43 L525.25 478.70 L525.62 478.70 L525.62 459.37 L525.99 459.37 L525.99 451.15 L526.37 451.15 L526.37 486.07 L526.74 486.07 L526.74 490.43 L527.11 490.43 L527.11 472.29 L527.48 472.29 L527.48 465.98 L527.85 465.98 L527.85 468.79 L528.22 468.79 L528.22 485.05 L528.60 485.05 L528.60 486.20 L528.97 486.20 L528.97 462.52 L529.34 462.52 L529.34 466.88 L529.71 466.88 L529.71 473.88 L530.08 473.88 L530.08 484.28 L530.46 484.28 L530.46 471.95 L530.83 471.95 L530.83 448.09 L531.20 448.09 L531.20 449.58 L531.57 449.58 L531.57 466.56 L531.94 466.56 L531.94 453.88 L532.32 453.88 L532.32 447.87 L532.69 447.87 L532.69 426.04 L533.06 426.04 L533.06 432.83 L533.43 432.83 L533.43 444.77 L533.80 444.77 L533.80 430.33 L534.18 430.33 L534.18 414.75 L534.55 414.75 L534.55 401.04 L534.92 401.04 L534.92 400.95 L535.29 400.95 L535.29 418.16 L535.66 418.16 L535.66 394.47 L536.04 394.47 L536.04 369.69 L536.41 369.69 L536.41 383.06 L536.78 383.06 L536.78 384.85 L537.15 384.85 L537.15 387.44 L537.52 387.44 L537.52 361.42 L537.90 361.42 L537.90 346.20 L538.27 346.20 L538.27 364.33 L538.64 364.33 L538.64 361.28 L539.01 361.28 L539.01 350.36 L539.38 350.36 L539.38 339.76 L539.76 339.76 L539.76 323.98 L540.13 323.98 L540.13 342.56 L540.50 342.56 L540.50 341.32 L540.87 341.32 L540.87 322.88 L541.24 322.88 L541.24 319.47 L541.62 319.47 L541.62 318.21 L541.99 318.21 L541.99 341.58 L542.36 341.58 L542.36 343.61 L542.73 343.61 L542.73 316.30 L543.10 316.30 L543.10 314.60 L543.47 314.60 L543.47 328.30 L543.85 328.30 L543.85 333.64 L544.22 333.64 L544.22 343.93 L544.59 343.93 L544.59 314.55 L544.96 314.55 L544.96 329.03 L545.33 329.03 L545.33 350.08 L545.71 350.08 L545.71 349.74 L546.08 349.74 L546.08 341.86 L546.45 341.86 L546.45 340.90 L546.82 340.90 L546.82 350.73 L547.19 350.73 L547.19 377.27 L547.57 377.27 L547.57 362.86 L547.94 362.86 L547.94 359.45 L548.31 359.45 L548.31 367.64 L548.68 367.64 L548.68 379.84 L549.05 379.84 L549.05 402.54 L549.43 402.54 L549.43 393.49 L549.80 393.49 L549.80 382.10 L550.17 382.10 L550.17 403.76 L550.54 403.76 L550.54 414.86 L550.91 414.86 L550.91 430.28 L551.29 430.28 L551.29 416.53 L551.66 416.53 L551.66 407.97 L552.03 407.97 L552.03 442.65 L552.40 442.65 L552.40 450.86 L552.77 450.86 L552.77 447.38 L553.15 447.38 L553.15 443.14 L553.52 443.14 L553.52 440.11 L553.89 440.11 L553.89 474.45 L554.26 474.45 L554.26 475.48 L554.63 475.48 L554.63 451.68 L555.01 451.68 L555.01 457.76 L555.38 457.76 L555.38 465.36 L555.75 465.36 L555.75 485.78 L556.12 485.78 L556.12 485.36 L556.49 485.36 L556.49 459.91 L556.87 459.91 L556.87 469.98 L557.24 469.98 L557.24 481.51 L557.61 481.51 L557.61 489.27 L557.98 489.27 L557.98 479.91 L558.35 479.91 L558.35 463.56 L558.73 463.56 L558.73 466.09 L559.10 466.09 L559.10 488.03 L559.47 488.03 L559.47 475.51 L559.84 475.51 L559.84 460.53 L560.21 460.53 L560.21 451.01 L560.58 451.01 L560.58 454.57 L560.96 454.57 L560.96 470.15 L561.33 470.15 L561.33 452.68 L561.70 452.68 L561.70 437.59 L562.07 437.59 L562.07 438.52 L562.44 438.52 L562.44 435.63 L562.82 435.63 L562.82 448.57 L563.19 448.57 L563.19 424.18 L563.56 424.18 L563.56 396.01 L563.93 396.01 L563.93 414.56 L564.30 414.56 L564.30 415.12 L564.68 415.12 L564.68 403.46 L565.05 403.46 L565.05 390.57 L565.42 390.57 L565.42 369.08 L565.79 369.08 L565.79 394.57 L566.16 394.57 L566.16 390.27 L566.54 390.27 L566.54 364.23 L566.91 364.23 L566.91 354.42 L567.28 354.42 L567.28 346.01 L567.65 346.01 L567.65 367.67 L568.02 367.67 L568.02 364.13 L568.40 364.13 L568.40 335.69 L568.77 335.69 L568.77 337.94 L569.14 337.94 L569.14 339.24 L569.51 339.24 L569.51 342.13 L569.88 342.13 L569.88 339.98 L570.26 339.98 L570.26 311.93 L570.63 311.93 L570.63 316.26 L571.00 316.26 L571.00 340.73 L571.37 340.73 L571.37 335.97 L571.74 335.97 L571.74 328.81 L572.12 328.81 L572.12 313.15 L572.49 313.15 L572.49 323.19 L572.86 323.19 L572.86 346.43 L573.23 346.43 L573.23 330.05 L573.60 330.05 L573.60 323.31 L573.98 323.31 L573.98 326.00 L574.35 326.00 L574.35 330.86 L574.72 330.86 L574.72 353.08 L575.09 353.08 L575.09 342.14 L575.46 342.14 L575.46 335.12 L575.83 335.12 L575.83 354.58 L576.21 354.58 L576.21 356.33 L576.58 356.33 L576.58 377.85 L576.95 377.85 L576.95 359.91 L577.32 359.91 L577.32 351.45 L577.69 351.45 L577.69 384.54 L578.07 384.54 L578.07 390.09 L578.44 390.09 L578.44 395.89 L578.81 395.89 L578.81 391.96 L579.18 391.96 L579.18 385.07 L579.55 385.07 L579.55 420.97 L579.93 420.97 L579.93 423.28 L580.30 423.28 L580.30 413.28 L580.67 413.28 L580.67 419.91 L581.04 419.91 L581.04 427.42 L581.41 427.42 L581.41 444.50 L581.79 444.50 L581.79 454.59 L582.16 454.59 L582.16 429.64 L582.53 429.64 L582.53 440.20 L582.90 440.20 L582.90 456.49 L583.27 456.49 L583.27 462.86 L583.65 462.86 L583.65 468.81 L584.02 468.81 L584.02 452.64 L584.39 452.64 L584.39 461.39 L584.76 461.39 L584.76 489.36 L585.13 489.36 L585.13 483.56 L585.51 483.56 L585.51 474.40 L585.88 474.40 L585.88 461.71 L586.25 461.71 L586.25 475.59 L586.62 475.59 L586.62 499.10 L586.99 499.10 L586.99 480.37 L587.37 480.37 L587.37 463.69 L587.74 463.69 L587.74 469.53 L588.11 469.53 L588.11 473.20 L588.48 473.20 L588.48 486.43 L588.85 486.43 L588.85 468.69 L589.23 468.69 L589.23 445.70 L589.60 445.70 L589.60 460.80 L589.97 460.80 L589.97 470.22 L590.34 470.22 L590.34 460.09 L590.71 460.09 L590.71 444.19 L591.09 444.19 L591.09 430.93 L591.46 430.93 L591.46 448.87 L591.83 448.87 L591.83 446.85 L592.20 446.85 L592.20 424.67 L592.57 424.67 L592.57 418.98 L592.94 418.98 L592.94 404.97 L593.32 404.97 L593.32 419.02 L593.69 419.02 L593.69 418.43 L594.06 418.43 L594.06 385.43 L594.43 385.43 L594.43 386.48 L594.80 386.48 L594.80 384.55 L595.18 384.55 L595.18 395.18 L595.55 395.18 L595.55 386.76 L595.92 386.76 L595.92 352.24 L596.29 352.24 L596.29 355.40 L596.66 355.40 L596.66 367.33 L597.04 367.33 L597.04 365.58 L597.41 365.58 L597.41 351.78 L597.78 351.78 L597.78 326.56 L598.15 326.56 L598.15 330.51 L598.52 330.51 L598.52 355.80 L598.90 355.80 L598.90 336.85 L599.27 336.85 L599.27 329.62 L599.64 329.62 L599.64 316.48 L600.01 316.48 L600.01 321.97 L600.38 321.97 L600.38 348.07 L600.76 348.07 L600.76 331.16 L601.13 331.16 L601.13 312.24 L601.50 312.24 L601.50 322.64 L601.87 322.64 L601.87 326.63 L602.24 326.63 L602.24 342.08 L602.62 342.08 L602.62 331.16 L602.99 331.16 L602.99 308.67 L603.36 308.67 L603.36 341.42 L603.73 341.42 L603.73 342.32 L604.10 342.32 L604.10 347.41 L604.48 347.41 L604.48 339.21 L604.85 339.21 L604.85 326.47 L605.22 326.47 L605.22 362.91 L605.59 362.91 L605.59 373.00 L605.96 373.00 L605.96 354.89 L606.34 354.89 L606.34 355.90 L606.71 355.90 L606.71 358.24 L607.08 358.24 L607.08 384.53 L607.45 384.53 L607.45 392.44 L607.82 392.44 L607.82 374.98 L608.20 374.98 L608.20 380.55 L608.57 380.55 L608.57 406.11 L608.94 406.11 L608.94 417.45 L609.31 417.45 L609.31 421.69 L609.68 421.69 L609.68 403.94 L610.05 403.94 L610.05 412.44 L610.43 412.44 L610.43 440.70 L610.80 440.70 L610.80 440.71 L611.17 440.71 L611.17 437.96 L611.54 437.96 L611.54 431.11 L611.91 431.11 L611.91 445.40 L612.29 445.40 L612.29 474.42 L612.66 474.42 L612.66 458.25 L613.03 458.25 L613.03 449.52 L613.40 449.52 L613.40 461.41 L613.77 461.41 L613.77 464.17 L614.15 464.17 L614.15 485.02 L614.52 485.02 L614.52 473.40 L614.89 473.40 L614.89 457.82 L615.26 457.82 L615.26 479.51 L615.63 479.51 L615.63 482.56 L616.01 482.56 L616.01 488.97 L616.38 488.97 L616.38 473.54 L616.75 473.54 L616.75 462.30 L617.12 462.30 L617.12 476.98 L617.49 476.98 L617.49 485.77 L617.87 485.77 L617.87 474.11 L618.24 474.11 L618.24 460.77 L618.61 460.77 L618.61 451.11 L618.98 451.11 L618.98 472.36 L619.35 472.36 L619.35 472.74 L619.73 472.74 L619.73 450.92 L620.10 450.92 L620.10 442.21 L620.47 442.21 L620.47 441.81 L620.84 441.81 L620.84 445.95 L621.21 445.95 L621.21 445.22 L621.59 445.22 L621.59 417.78 L621.96 417.78 L621.96 415.15 L622.33 415.15 L622.33 428.77 L622.70 428.77 L622.70 421.06 L623.07 421.06 L623.07 410.63 L623.45 410.63 L623.45 381.30 L623.82 381.30 L623.82 386.05 L624.19 386.05 L624.19 406.06 L624.56 406.06 L624.56 390.77 L624.93 390.77 L624.93 372.92 L625.30 372.92 L625.30 355.80 L625.68 355.80 L625.68 364.40 L626.05 364.40 L626.05 377.14 L626.42 377.14 L626.42 362.58 L626.79 362.58 L626.79 341.48 L627.16 341.48 L627.16 344.91 L627.54 344.91 L627.54 342.07 L627.91 342.07 L627.91 356.97 L628.28 356.97 L628.28 336.71 L628.65 336.71 L628.65 313.44 L629.02 313.44 L629.02 337.06 L629.40 337.06 L629.40 334.97 L629.77 334.97 L629.77 338.80 L630.14 338.80 L630.14 322.75 L630.51 322.75 L630.51 310.19 L630.88 310.19 L630.88 336.15 L631.26 336.15 L631.26 340.07 L631.63 340.07 L631.63 325.21 L632.00 325.21 L632.00 323.30 L632.37 323.30 L632.37 319.95 L632.74 319.95 L632.74 341.83 L633.12 341.83 L633.12 354.52 L633.49 354.52 L633.49 330.36 L633.86 330.36 L633.86 331.90 L634.23 331.90 L634.23 344.27 L634.60 344.27 L634.60 358.95 L634.98 358.95 L634.98 363.50 L635.35 363.50 L635.35 343.53 L635.72 343.53 L635.72 351.64 L636.09 351.64 L636.09 383.59 L636.46 383.59 L636.46 380.45 L636.84 380.45 L636.84 382.26 L637.21 382.26 L637.21 369.61 L637.58 369.61 L637.58 387.32 L637.95 387.32 L637.95 419.16 L638.32 419.16 L638.32 405.68 L638.70 405.68 L638.70 407.52 L639.07 407.52 L639.07 403.89 L639.44 403.89 L639.44 416.42 L639.81 416.42 L639.81 451.36 L640.18 451.36 L640.18 438.70 L640.56 438.70 L640.56 422.13 L640.93 422.13 L640.93 445.58 L641.30 445.58 L641.30 457.73 L641.67 457.73 L641.67 464.31 L642.04 464.31 L642.04 457.95 L642.41 457.95 L642.41 440.23 L642.79 440.23 L642.79 473.77 L643.16 473.77 L643.16 480.83 L643.53 480.83 L643.53 473.32 L643.90 473.32 L643.90 473.81 L644.27 473.81 L644.27 461.97 L644.65 461.97 L644.65 482.80 L645.02 482.80 L645.02 488.79 L645.39 488.79 L645.39 466.78 L645.76 466.78 L645.76 473.54 L646.13 473.54 L646.13 469.22 L646.51 469.22 L646.51 482.15 L646.88 482.15 L646.88 489.09 L647.25 489.09 L647.25 456.95 L647.62 456.95 L647.62 462.58 L647.99 462.58 L647.99 474.66 L648.37 474.66 L648.37 475.05 L648.74 475.05 L648.74 473.23 L649.11 473.23 L649.11 439.65 L649.48 439.65 L649.48 440.75 L649.85 440.75 L649.85 459.32 L650.23 459.32 L650.23 450.50 L650.60 450.50 L650.60 438.46 L650.97 438.46 L650.97 420.99 L651.34 420.99 L651.34 414.39 L651.71 414.39 L651.71 432.76 L652.09 432.76 L652.09 412.18 L652.46 412.18 L652.46 400.10 L652.83 400.10 L652.83 398.99 L653.20 398.99 L653.20 389.59 L653.57 389.59 L653.57 406.30 L653.95 406.30 L653.95 381.18 L654.32 381.18 L654.32 360.99 L654.69 360.99 L654.69 372.41 L655.06 372.41 L655.06 372.80 L655.43 372.80 L655.43 371.35 L655.81 371.35 L655.81 352.75 L656.18 352.75 L656.18 337.10 L656.55 337.10 L656.55 350.71 L656.92 350.71 L656.92 353.02 L657.29 353.02 L657.29 342.24 L657.66 342.24 L657.66 330.92 L658.04 330.92 L658.04 317.51 L658.41 317.51 L658.41 340.21 L658.78 340.21 L658.78 348.24 L659.15 348.24 L659.15 321.56 L659.52 321.56 L659.52 317.52 L659.90 317.52 L659.90 327.56 L660.27 327.56 L660.27 330.64 L660.64 330.64 L660.64 337.01 L661.01 337.01 L661.01 310.91 L661.38 310.91 L661.38 314.45 L661.76 314.45 L661.76 337.29 L662.13 337.29 L662.13 340.90 L662.50 340.90 L662.50 340.32 L662.87 340.32 L662.87 324.20 L663.24 324.20 L663.24 327.75 L663.62 327.75 L663.62 359.37 L663.99 359.37 L663.99 357.84 L664.36 357.84 L664.36 346.15 L664.73 346.15 L664.73 347.27 L665.10 347.27 L665.10 356.95 L665.48 356.95 L665.48 385.87 L665.85 385.87 L665.85 379.59 L666.22 379.59 L666.22 363.45 L666.59 363.45 L666.59 380.06 L666.96 380.06 L666.96 393.44 L667.34 393.44 L667.34 411.40 L667.71 411.40 L667.71 402.90 L668.08 402.90 L668.08 393.14 L668.45 393.14 L668.45 417.68 L668.82 417.68 L668.82 437.19 L669.20 437.19 L669.20 436.45 L669.57 436.45 L669.57 431.50 L669.94 431.50 L669.94 426.99 L670.31 426.99 L670.31 452.98 L670.68 452.98 L670.68 463.68 L671.06 463.68 L671.06 449.11 L671.43 449.11 L671.43 454.10 L671.80 454.10 L671.80 448.04 L672.17 448.04 L672.17 472.43 L672.54 472.43 L672.54 486.51 L672.92 486.51 L672.92 458.28 L673.29 458.28 L673.29 462.86 L673.66 462.86 L673.66 476.26 L674.03 476.26 L674.03 485.67 L674.40 485.67 L674.40 483.75 L674.77 483.75 L674.77 461.63 L675.15 461.63 L675.15 464.53 L675.52 464.53 L675.52 486.07 L675.89 486.07 L675.89 477.59 L676.26 477.59 L676.26 480.79 L676.63 480.79 L676.63 458.08 L677.01 458.08 L677.01 458.58 L677.38 458.58 L677.38 486.98 L677.75 486.98 L677.75 468.93 L678.12 468.93 L678.12 455.28 L678.49 455.28 L678.49 450.85 L678.87 450.85 L678.87 449.43 L679.24 449.43 L679.24 467.98 L679.61 467.98 L679.61 446.02 L679.98 446.02 L679.98 415.13 L680.35 415.13 L680.35 428.77 L680.73 428.77 L680.73 429.86 L681.10 429.86 L681.10 426.05 L681.47 426.05 L681.47 411.70 L681.84 411.70 L681.84 382.83 L682.21 382.83 L682.21 403.82 L682.59 403.82 L682.59 404.57 L682.96 404.57 L682.96 395.41 L683.33 395.41 L683.33 377.74 L683.70 377.74 L683.70 359.65 L684.07 359.65 L684.07 383.49 L684.45 383.49 L684.45 378.71 L684.82 378.71 L684.82 357.40 L685.19 357.40 L685.19 348.11 L685.56 348.11 L685.56 349.07 L685.93 349.07 L685.93 355.36 L686.31 355.36 L686.31 357.25 L686.68 357.25 L686.68 330.83 L687.05 330.83 L687.05 320.92 L687.42 320.92 L687.42 339.88 L687.79 339.88 L687.79 338.30 L688.17 338.30 L688.17 336.35 L688.54 336.35 L688.54 314.73 L688.91 314.73 L688.91 317.79 L689.28 317.79 L689.28 339.24 L689.65 339.24 L689.65 331.40 L690.02 331.40 L690.02 326.24 L690.40 326.24 L690.40 314.10 L690.77 314.10 L690.77 323.45 L691.14 323.45 L691.14 353.59 L691.51 353.59 L691.51 339.26 L691.88 339.26 L691.88 327.30 L692.26 327.30 L692.26 336.53 L692.63 336.53 L692.63 339.33 L693.00 339.33 L693.00 362.65 L693.37 362.65 L693.37 347.72 L693.74 347.72 L693.74 333.40 L694.12 333.40 L694.12 364.61 L694.49 364.61 L694.49 368.02 L694.86 368.02 L694.86 373.68 L695.23 373.68 L695.23 377.87 L695.60 377.87 L695.60 358.67 L695.98 358.67 L695.98 393.02 L696.35 393.02 L696.35 408.16 L696.72 408.16 L696.72 392.91 L697.09 392.91 L697.09 401.69 L697.46 401.69 L697.46 398.93 L697.84 398.93 L697.84 420.28 L698.21 420.28 L698.21 437.76 L698.58 437.76 L698.58 419.35 L698.95 419.35 L698.95 419.77 L699.32 419.77 L699.32 435.20 L699.70 435.20 L699.70 451.54 L700.07 451.54 L700.07 466.58 L700.44 466.58 L700.44 439.12 L700.81 439.12 L700.81 447.05 L701.18 447.05 L701.18 474.66 L701.56 474.66 L701.56 477.08 L701.93 477.08 L701.93 472.87 L702.30 472.87 L702.30 461.87 L702.67 461.87 L702.67 463.85 L703.04 463.85 L703.04 490.41 L703.42 490.41 L703.42 482.62 L703.79 482.62 L703.79 473.20 L704.16 473.20 L704.16 468.00 L704.53 468.00 L704.53 473.35 L704.90 473.35 L704.90 492.12 L705.28 492.12 L705.28 479.10 L705.65 479.10 L705.65 453.65 L706.02 453.65 L706.02 464.70 L706.39 464.70 L706.39 470.43 L706.76 470.43 L706.76 482.43 L707.13 482.43 L707.13 467.95 L707.51 467.95 L707.51 436.28 L707.88 436.28 L707.88 455.20 L708.25 455.20 L708.25 461.27 L708.62 461.27 L708.62 452.26 L708.99 452.26 L708.99 440.53 L709.37 440.53 L709.37 417.67 L709.74 417.67 L709.74 436.04 L710.11 436.04 L710.11 440.73 L710.48 440.73 L710.48 413.12 L710.85 413.12 L710.85 403.30 L711.23 403.30 L711.23 402.32 L711.60 402.32 L711.60 411.32 L711.97 411.32 L711.97 407.10 L712.34 407.10 L712.34 373.81 L712.71 373.81 L712.71 368.70 L713.09 368.70 L713.09 385.35 L713.46 385.35 L713.46 383.93 L713.83 383.93 L713.83 379.35 L714.20 379.35 L714.20 348.43 L714.57 348.43 L714.57 343.32 L714.95 343.32 L714.95 368.59 L715.32 368.59 L715.32 353.73 L715.69 353.73 L715.69 347.88 L716.06 347.88 L716.06 332.18 L716.43 332.18 L716.43 325.80 L716.81 325.80 L716.81 350.97 L717.18 350.97 L717.18 335.19 L717.55 335.19 L717.55 319.93 L717.92 319.93 L717.92 321.21 L718.29 321.21 L718.29 327.22 L718.67 327.22 L718.67 344.10 L719.04 344.10 L719.04 326.55 L719.41 326.55 L719.41 304.96 L719.78 304.96 L719.78 330.29 L720.15 330.29 L720.15 338.58 L720.53 338.58 L720.53 337.10 L720.90 337.10 L720.90 330.87 L721.27 330.87 L721.27 313.16 L721.64 313.16 L721.64 344.62 L722.01 344.62 L722.01 356.43 L722.39 356.43 L722.39 348.68 L722.76 348.68 L722.76 341.96 L723.13 341.96 L723.13 341.72 L723.50 341.72 L723.50 364.07 L723.87 364.07 L723.87 376.99 L724.24 376.99 L724.24 363.79 L724.62 363.79 L724.62 365.55 L724.99 365.55 L724.99 374.78 L725.36 374.78 L725.36 390.17 L725.73 390.17 L725.73 408.56 L726.10 408.56 L726.10 387.60 L726.48 387.60 L726.48 396.81 L726.85 396.81 L726.85 414.54 L727.22 414.54 L727.22 428.37 L727.59 428.37 L727.59 433.84 L727.96 433.84 L727.96 414.83 L728.34 414.83 L728.34 422.65 L728.71 422.65 L728.71 453.03 L729.08 453.03 L729.08 453.05 L729.45 453.05 L729.45 442.67 L729.82 442.67 L729.82 448.34 L730.20 448.34 L730.20 454.01 L730.57 454.01 L730.57 478.35 L730.94 478.35 L730.94 474.55 L731.31 474.55 L731.31 456.45 L731.68 456.45 L731.68 464.45 L732.06 464.45 L732.06 472.45 L732.43 472.45 L732.43 491.63 L732.80 491.63 L732.80 482.22 L733.17 482.22 L733.17 459.30 L733.54 459.30 L733.54 476.02 L733.92 476.02 L733.92 488.49 L734.29 488.49 L734.29 487.04 L734.66 487.04 L734.66 471.93 L735.03 471.93 L735.03 455.54 L735.40 455.54 L735.40 472.53 L735.78 472.53 L735.78 481.53 L736.15 481.53 L736.15 460.12 L736.52 460.12 L736.52 457.54 L736.89 457.54 L736.89 446.48 L737.26 446.48 L737.26 464.29 L737.64 464.29 L737.64 470.62 L738.01 470.62 L738.01 437.91 L738.38 437.91 L738.38 426.58 L738.75 426.58 L738.75 433.16 L739.12 433.16 L739.12 440.80 L739.49 440.80 L739.49 439.30 L739.87 439.30 L739.87 407.96 L740.24 407.96 L740.24 402.35 L740.61 402.35 L740.61 419.61 L740.98 419.61 L740.98 409.98 L741.35 409.98 L741.35 401.57 L741.73 401.57 L741.73 377.18 L742.10 377.18 L742.10 370.29 L742.47 370.29 L742.47 394.58 L742.84 394.58 L742.84 375.40 L743.21 375.40 L743.21 358.02 L743.59 358.02 L743.59 357.03 L743.96 357.03 L743.96 349.75 L744.33 349.75 L744.33 365.25 L744.70 365.25 L744.70 354.21 L745.07 354.21 L745.07 331.37 L745.45 331.37 L745.45 337.05 L745.82 337.05 L745.82 340.50 L746.19 340.50 L746.19 344.52 L746.56 344.52 L746.56 327.82 L746.93 327.82 L746.93 308.05 L747.31 308.05 L747.31 326.60 L747.68 326.60 L747.68 343.63 L748.05 343.63 L748.05 328.40 L748.42 328.40 L748.42 319.55 L748.79 319.55 L748.79 314.63 L749.17 314.63 L749.17 336.18 L749.54 336.18 L749.54 343.53 L749.91 343.53 L749.91 320.58 L750.28 320.58 L750.28 327.88 L750.65 327.88 L750.65 327.33 L751.03 327.33 L751.03 348.26 L751.40 348.26 L751.40 355.56 L751.77 355.56 L751.77 332.75 L752.14 332.75 L752.14 339.93 L752.51 339.93 L752.51 361.76 L752.89 361.76 L752.89 363.76 L753.26 363.76 L753.26 373.32 L753.63 373.32 L753.63 354.28 L754.00 354.28 L754.00 363.45 L754.37 363.45 L754.37 396.22 L754.75 396.22 L754.75 389.29 L755.12 389.29 L755.12 389.55 L755.49 389.55 L755.49 388.39 L755.86 388.39 L755.86 395.49 L756.23 395.49 L756.23 426.14 L756.60 426.14 L756.60 420.83 L756.98 420.83 L756.98 406.37 L757.35 406.37 L757.35 423.30 L757.72 423.30 L757.72 429.40 L758.09 429.40 L758.09 452.85 L758.46 452.85 L758.46 444.66 L758.84 444.66 L758.84 427.42 L759.21 427.42 L759.21 449.44 L759.58 449.44 L759.58 462.05 L759.95 462.05 L759.95 465.62 L760.32 465.62 L760.32 463.72 L760.70 463.72 L760.70 449.26 L761.07 449.26 L761.07 471.89 L761.44 471.89 L761.44 485.66 L761.81 485.66 L761.81 475.32 L762.18 475.32 L762.18 471.73 L762.56 471.73 L762.56 468.18 L762.93 468.18 L762.93 480.63 L763.30 480.63 L763.30 490.65 L763.67 490.65 L763.67 470.12 L764.04 470.12 L764.04 468.66 L764.42 468.66 L764.42 475.15 L764.79 475.15 L764.79 479.83 L765.16 479.83 L765.16 486.33 L765.53 486.33 L765.53 450.44 L765.90 450.44 L765.90 454.86 L766.28 454.86 L766.28 470.59 L766.65 470.59 L766.65 467.19 L767.02 467.19 L767.02 455.67 L767.39 455.67 L767.39 432.38 L767.76 432.38 L767.76 433.08 L768.14 433.08 L768.14 456.85 L768.51 456.85 L768.51 438.92 L768.88 438.92 L768.88 419.02 L769.25 419.02 L769.25 407.18 L769.62 407.18 L769.62 412.04 L770.00 412.04 L770.00 429.00 L770.37 429.00 L770.37 410.92 L770.74 410.92 L770.74 383.35 L771.11 383.35 L771.11 388.46 L771.48 388.46 L771.48 384.14 L771.86 384.14 L771.86 390.15 L772.23 390.15 L772.23 378.09 L772.60 378.09 L772.60 350.55 L772.97 350.55 L772.97 364.30 L773.34 364.30 L773.34 371.33 L773.71 371.33 L773.71 354.50 L774.09 354.50 L774.09 347.60 L774.46 347.60 L774.46 326.09 L774.83 326.09 L774.83 340.44 L775.20 340.44 L775.20 354.08 L775.57 354.08 L775.57 332.57 L775.95 332.57 L775.95 319.94 L776.32 319.94 L776.32 316.47 L776.69 316.47 L776.69 334.98 L777.06 334.98 L777.06 343.66 L777.43 343.66 L777.43 311.81 L777.81 311.81 L777.81 313.91 L778.18 313.91 L778.18 331.19 L778.55 331.19 L778.55 338.42 L778.92 338.42 L778.92 335.46 L779.29 335.46 L779.29 315.06 L779.67 315.06 L779.67 319.79 L780.04 319.79 L780.04 346.52 L780.41 346.52 L780.41 345.40 L780.78 345.40 L780.78 344.85 L781.15 344.85 L781.15 329.81 L781.53 329.81 L781.53 337.31 L781.90 337.31 L781.90 373.50 L782.27 373.50 L782.27 370.92 L782.64 370.92 L782.64 354.32 L783.01 354.32 L783.01 363.66 L783.39 363.66 L783.39 368.51 L783.76 368.51 L783.76 394.44 L784.13 394.44 L784.13 390.76 L784.50 390.76 L784.50 378.02 L784.87 378.02 L784.87 399.29 L785.25 399.29 L785.25 412.13 L785.62 412.13 L785.62 422.79 L785.99 422.79 L785.99 414.26 L786.36 414.26 L786.36 402.71 L786.73 402.71 L786.73 428.02 L787.11 428.02 L787.11 443.01 L787.48 443.01 L787.48 442.86 L787.85 442.86 L787.85 439.74 L788.22 439.74 L788.22 438.03 L788.59 438.03 L788.59 455.00 L788.96 455.00 L788.96 480.91 L789.34 480.91 L789.34 452.42 L789.71 452.42 L789.71 452.07 L790.08 452.07 L790.08 460.53 L790.45 460.53 L790.45 481.08 L790.82 481.08 L790.82 491.47 L791.20 491.47 L791.20 462.14 L791.57 462.14 L791.57 466.85 L791.94 466.85 L791.94 483.67 L792.31 483.67 L792.31 485.19 L792.68 485.19 L792.68 480.97 L793.06 480.97 L793.06 464.50 L793.43 464.50 L793.43 459.05 L793.80 459.05 L793.80 490.63 L794.17 490.63 L794.17 477.40 L794.54 477.40 L794.54 467.56 L794.92 467.56 L794.92 453.79 L795.29 453.79 L795.29 459.39 L795.66 459.39 L795.66 474.03 L796.03 474.03 L796.03 466.19 L796.40 466.19 L796.40 437.86 L796.78 437.86 L796.78 441.60 L797.15 441.60 L797.15 445.57 L797.52 445.57 L797.52 447.64 L797.89 447.64 L797.89 437.84 L798.26 437.84 L798.26 408.55 L798.64 408.55 L798.64 423.04 L799.01 423.04 L799.01 425.65 L799.38 425.65 L799.38 415.34 L799.75 415.34 L799.75 399.79 L800.12 399.79 L800.12 379.39 L800.50 379.39 L800.50 390.45 L800.87 390.45 L800.87 404.74 L801.24 404.74 L801.24 378.03 L801.61 378.03 L801.61 366.87 L801.98 366.87 L801.98 351.80 L802.36 351.80 L802.36 363.39 L802.73 363.39 L802.73 373.82 L803.10 373.82 L803.10 349.08 L803.47 349.08 L803.47 337.40 L803.84 337.40 L803.84 341.44 L804.22 341.44 L804.22 349.10 L804.59 349.10 L804.59 349.71 L804.96 349.71 L804.96 323.13 L805.33 323.13 L805.33 321.95 L805.70 321.95 L805.70 334.30 L806.07 334.30 L806.07 332.54 L806.45 332.54 L806.45 333.34 L806.82 333.34 L806.82 314.16 L807.19 314.16 L807.19 315.62 L807.56 315.62 L807.56 343.26 L807.93 343.26 L807.93 334.66 L808.31 334.66 L808.31 322.65 L808.68 322.65 L808.68 323.79 L809.05 323.79 L809.05 327.53 L809.42 327.53 L809.42 349.38 L809.79 349.38 L809.79 346.99 L810.17 346.99 L810.17 327.80 L810.54 327.80 L810.54 338.99 L810.91 338.99 L810.91 354.76 L811.28 354.76 L811.28 360.85 L811.65 360.85 L811.65 361.25 L812.03 361.25 L812.03 342.01 L812.40 342.01 L812.40 370.56 L812.77 370.56 L812.77 384.32 L813.14 384.32 L813.14 387.98 L813.51 387.98 L813.51 387.34 L813.89 387.34 L813.89 380.24 L814.26 380.24 L814.26 399.17 L814.63 399.17 L814.63 420.32 L815.00 420.32 L815.00 409.26 L815.37 409.26 L815.37 408.47 L815.75 408.47 L815.75 411.75 L816.12 411.75 L816.12 431.93 L816.49 431.93 L816.49 454.71 L816.86 454.71 L816.86 432.10 L817.23 432.10 L817.23 433.86 L817.61 433.86 L817.61 456.26 L817.98 456.26 L817.98 461.18 L818.35 461.18 L818.35 472.07 L818.72 472.07 L818.72 446.33 L819.09 446.33 L819.09 451.35 L819.47 451.35 L819.47 480.60 L819.84 480.60 L819.84 477.59 L820.21 477.59 L820.21 469.86 L820.58 469.86 L820.58 462.17 L820.95 462.17 L820.95 466.94 L821.32 466.94 L821.32 495.30 L821.70 495.30 L821.70 486.62 L822.07 486.62 L822.07 470.76 L822.44 470.76 L822.44 471.59 L822.81 471.59 L822.81 471.67 L823.18 471.67 L823.18 484.39 L823.56 484.39 L823.56 475.71 L823.93 475.71 L823.93 450.13 L824.30 450.13 L824.30 463.55 L824.67 463.55 L824.67 476.35 L825.04 476.35 L825.04 470.54 L825.42 470.54 L825.42 459.43 L825.79 459.43 L825.79 431.71 L826.16 431.71 L826.16 451.85 L826.53 451.85 L826.53 459.29 L826.90 459.29 L826.90 437.69 L827.28 437.69 L827.28 424.12 L827.65 424.12 L827.65 410.08 L828.02 410.08 L828.02 422.56 L828.39 422.56 L828.39 436.56 L828.76 436.56 L828.76 399.63 L829.14 399.63 L829.14 387.52 L829.51 387.52 L829.51 393.13 L829.88 393.13 L829.88 397.48 L830.25 397.48 L830.25 399.82 L830.62 399.82 L830.62 372.15 L831.00 372.15 L831.00 356.31 L831.37 356.31 L831.37 370.26 L831.74 370.26 L831.74 369.66 L832.11 369.66 L832.11 361.46 L832.48 361.46 L832.48 338.70 L832.86 338.70 L832.86 337.29 L833.23 337.29 L833.23 354.14 L833.60 354.14 L833.60 347.66 L833.97 347.66 L833.97 334.79 L834.34 334.79 L834.34 329.69 L834.72 329.69 L834.72 326.10 L835.09 326.10 L835.09 344.85 L835.46 344.85 L835.46 333.93 L835.83 333.93 L835.83 313.56 L836.20 313.56 L836.20 316.76 L836.58 316.76 L836.58 328.69 L836.95 328.69 L836.95 339.02 L837.32 339.02 L837.32 335.55 L837.69 335.55 L837.69 304.20 L838.06 304.20 L838.06 331.81 L838.43 331.81 L838.43 339.32 L838.81 339.32 L838.81 339.72 L839.18 339.72 L839.18 336.48 L839.55 336.48 L839.55 323.43 L839.92 323.43 L839.92 348.58 L840.29 348.58 L840.29 362.85 L840.67 362.85 L840.67 346.72 L841.04 346.72 L841.04 347.98 L841.41 347.98 L841.41 353.35 L841.78 353.35 L841.78 376.49 L842.15 376.49 L842.15 389.55 L842.53 389.55 L842.53 374.44 L842.90 374.44 L842.90 369.05 L843.27 369.05 L843.27 395.78 L843.64 395.78 L843.64 403.51 L844.01 403.51 L844.01 413.13 L844.39 413.13 L844.39 402.81 L844.76 402.81 L844.76 400.29 L845.13 400.29 L845.13 436.58 L845.50 436.58 L845.50 440.42 L845.87 440.42 L845.87 438.26 L846.25 438.26 L846.25 424.05 L846.62 424.05 L846.62 427.07 L846.99 427.07 L846.99 462.61 L847.36 462.61 L847.36 464.06 L847.73 464.06 L847.73 446.47 L848.11 446.47 L848.11 451.84 L848.48 451.84 L848.48 461.37 L848.85 461.37 L848.85 482.19 L849.22 482.19 L849.22 475.30 L849.59 475.30 L849.59 460.50 L849.97 460.50 L849.97 473.86 L850.34 473.86 L850.34 481.97 L850.71 481.97 L850.71 490.58 L851.08 490.58 L851.08 482.01 L851.45 482.01 L851.45 457.66 L851.83 457.66 L851.83 479.34 L852.20 479.34 L852.20 490.22 L852.57 490.22 L852.57 479.39 L852.94 479.39 L852.94 468.82 L853.31 468.82 L853.31 457.35 L853.68 457.35 L853.68 467.94 L854.06 467.94 L854.06 487.59 L854.43 487.59 L854.43 454.54 L854.80 454.54 L854.80 450.12 L855.17 450.12 L855.17 442.50 L855.54 442.50 L855.54 451.20 L855.92 451.20 L855.92 459.76 L856.29 459.76 L856.29 429.55 L856.66 429.55 L856.66 416.14 L857.03 416.14 L857.03 429.67 L857.40 429.67 L857.40 425.21 L857.78 425.21 L857.78 421.00 L858.15 421.00 L858.15 398.85 L858.52 398.85 L858.52 382.88 L858.89 382.88 L858.89 406.30 L859.26 406.30 L859.26 396.18 L859.64 396.18 L859.64 383.13 L860.01 383.13 L860.01 370.85 L860.38 370.85 L860.38 362.59 L860.75 362.59 L860.75 379.55 L861.12 379.55 L861.12 371.34 L861.50 371.34 L861.50 344.26 L861.87 344.26 L861.87 347.29 L862.24 347.29 L862.24 343.33 L862.61 343.33 L862.61 359.21 L862.98 359.21 L862.98 351.36 L863.36 351.36 L863.36 316.07 L863.73 316.07 L863.73 327.11 L864.10 327.11 L864.10 338.59 L864.47 338.59 L864.47 335.68 L864.84 335.68 L864.84 326.64 L865.22 326.64 L865.22 310.65 L865.59 310.65 L865.59 324.95 L865.96 324.95 L865.96 347.03 L866.33 347.03 L866.33 329.68 L866.70 329.68 L866.70 321.59 L867.08 321.59 L867.08 316.89 L867.45 316.89 L867.45 333.45 L867.82 333.45 L867.82 355.36 L868.19 355.36 L868.19 326.58 L868.56 326.58 L868.56 324.99 L868.94 324.99 L868.94 342.42 L869.31 342.42 L869.31 352.18 L869.68 352.18 L869.68 364.36 L870.05 364.36 L870.05 346.85 L870.42 346.85 L870.42 346.86 L870.79 346.86 L870.79 367.80 L871.17 367.80 L871.17 372.18 L871.54 372.18 L871.54 377.15 L871.91 377.15 L871.91 366.81 L872.28 366.81 L872.28 372.60 L872.65 372.60 L872.65 403.11 L873.03 403.11 L873.03 410.02 L873.40 410.02 L873.40 394.41 L873.77 394.41 L873.77 401.32 L874.14 401.32 L874.14 404.72 L874.51 404.72 L874.51 440.64 L874.89 440.64 L874.89 433.32 L875.26 433.32 L875.26 420.75 L875.63 420.75 L875.63 432.82 L876.00 432.82 L876.00 442.11 L876.37 442.11 L876.37 464.34 L876.75 464.34 L876.75 460.61 L877.12 460.61 L877.12 440.05 L877.49 440.05 L877.49 460.59 L877.86 460.59 L877.86 481.88 L878.23 481.88 L878.23 468.36 L878.61 468.36 L878.61 466.27 L878.98 466.27 L878.98 458.08 L879.35 458.08 L879.35 476.69 L879.72 476.69 L879.72 493.98 L880.09 493.98 L880.09 479.13 L880.47 479.13 L880.47 473.55 L880.84 473.55 L880.84 466.17 L881.21 466.17 L881.21 482.35 L881.58 482.35 L881.58 494.11 L881.95 494.11 L881.95 463.08 L882.33 463.08 L882.33 453.66 L882.70 453.66 L882.70 473.37 L883.07 473.37 L883.07 476.92 L883.44 476.92 L883.44 477.40 L883.81 477.40 L883.81 447.32 L884.19 447.32 L884.19 436.97 L884.56 436.97 L884.56 466.57 L884.93 466.57 L884.93 453.54 L885.30 453.54 L885.30 444.40 L885.67 444.40 L885.67 429.14 L886.05 429.14 L886.05 423.47 L886.42 423.47 L886.42 437.96 L886.79 437.96 L886.79 425.98 L887.16 425.98 L887.16 407.06 L887.53 407.06 L887.53 400.84 L887.90 400.84 L887.90 402.59 L888.28 402.59 L888.28 406.99 L888.65 406.99 L888.65 403.50 L889.02 403.50 L889.02 371.03 L889.39 371.03 L889.39 372.63 L889.76 372.63 L889.76 382.45 L890.14 382.45 L890.14 372.60 L890.51 372.60 L890.51 362.20 L890.88 362.20 L890.88 337.01 L891.25 337.01 L891.25 354.80 L891.62 354.80 L891.62 362.31 L892.00 362.31 L892.00 341.72 L892.37 341.72 L892.37 336.99 L892.74 336.99 L892.74 328.33 L893.11 328.33 L893.11 338.13 L893.48 338.13 L893.48 352.87 L893.86 352.87 L893.86 323.21 L894.23 323.21 L894.23 319.60 L894.60 319.60 L894.60 326.40" fill="none" stroke="#3ba9dc" stroke-width="0.8" stroke-linejoin="round" opacity="0.55"/>
<path d="M485.45 337.86 L485.82 343.36 L486.19 325.21 L486.57 322.33 M495.49 462.31 L495.86 486.68 L496.24 463.96 L496.61 459.16 L496.98 469.46 L497.35 478.98 L497.72 490.96 L498.10 472.58 L498.47 462.38 L498.84 477.91 L499.21 480.00 L499.58 478.55 L499.96 464.70 L500.33 456.79 L500.70 482.75 L501.07 479.86 L501.44 461.99 M510.00 342.99 L510.37 327.78 L510.74 332.85 L511.11 341.19 L511.49 342.58 L511.86 323.49 L512.23 312.30 L512.60 331.96 L512.97 339.68 L513.35 326.78 L513.72 323.27 L514.09 313.64 L514.46 343.75 L514.83 346.03 L515.21 320.05 L515.58 325.60 L515.95 335.36 M524.88 473.43 L525.25 478.70 L525.62 459.37 L525.99 451.15 L526.37 486.07 L526.74 490.43 L527.11 472.29 L527.48 465.98 L527.85 468.79 L528.22 485.05 L528.60 486.20 L528.97 462.52 L529.34 466.88 L529.71 473.88 L530.08 484.28 L530.46 471.95 L530.83 448.09 M539.38 339.76 L539.76 323.98 L540.13 342.56 L540.50 341.32 L540.87 322.88 L541.24 319.47 L541.62 318.21 L541.99 341.58 L542.36 343.61 L542.73 316.30 L543.10 314.60 L543.47 328.30 L543.85 333.64 L544.22 343.93 L544.59 314.55 L544.96 329.03 L545.33 350.08 M554.26 475.48 L554.63 451.68 L555.01 457.76 L555.38 465.36 L555.75 485.78 L556.12 485.36 L556.49 459.91 L556.87 469.98 L557.24 481.51 L557.61 489.27 L557.98 479.91 L558.35 463.56 L558.73 466.09 L559.10 488.03 L559.47 475.51 L559.84 460.53 L560.21 451.01 M568.77 337.94 L569.14 339.24 L569.51 342.13 L569.88 339.98 L570.26 311.93 L570.63 316.26 L571.00 340.73 L571.37 335.97 L571.74 328.81 L572.12 313.15 L572.49 323.19 L572.86 346.43 L573.23 330.05 L573.60 323.31 L573.98 326.00 L574.35 330.86 L574.72 353.08 L575.09 342.14 M583.65 468.81 L584.02 452.64 L584.39 461.39 L584.76 489.36 L585.13 483.56 L585.51 474.40 L585.88 461.71 L586.25 475.59 L586.62 499.10 L586.99 480.37 L587.37 463.69 L587.74 469.53 L588.11 473.20 L588.48 486.43 L588.85 468.69 L589.23 445.70 L589.60 460.80 M598.52 355.80 L598.90 336.85 L599.27 329.62 L599.64 316.48 L600.01 321.97 L600.38 348.07 L600.76 331.16 L601.13 312.24 L601.50 322.64 L601.87 326.63 L602.24 342.08 L602.62 331.16 L602.99 308.67 L603.36 341.42 L603.73 342.32 L604.10 347.41 L604.48 339.21 M613.03 449.52 L613.40 461.41 L613.77 464.17 L614.15 485.02 L614.52 473.40 L614.89 457.82 L615.26 479.51 L615.63 482.56 L616.01 488.97 L616.38 473.54 L616.75 462.30 L617.12 476.98 L617.49 485.77 L617.87 474.11 L618.24 460.77 L618.61 451.11 L618.98 472.36 M627.91 356.97 L628.28 336.71 L628.65 313.44 L629.02 337.06 L629.40 334.97 L629.77 338.80 L630.14 322.75 L630.51 310.19 L630.88 336.15 L631.26 340.07 L631.63 325.21 L632.00 323.30 L632.37 319.95 L632.74 341.83 L633.12 354.52 L633.49 330.36 L633.86 331.90 M642.41 440.23 L642.79 473.77 L643.16 480.83 L643.53 473.32 L643.90 473.81 L644.27 461.97 L644.65 482.80 L645.02 488.79 L645.39 466.78 L645.76 473.54 L646.13 469.22 L646.51 482.15 L646.88 489.09 L647.25 456.95 L647.62 462.58 L647.99 474.66 L648.37 475.05 M657.29 342.24 L657.66 330.92 L658.04 317.51 L658.41 340.21 L658.78 348.24 L659.15 321.56 L659.52 317.52 L659.90 327.56 L660.27 330.64 L660.64 337.01 L661.01 310.91 L661.38 314.45 L661.76 337.29 L662.13 340.90 L662.50 340.32 L662.87 324.20 L663.24 327.75 M671.80 448.04 L672.17 472.43 L672.54 486.51 L672.92 458.28 L673.29 462.86 L673.66 476.26 L674.03 485.67 L674.40 483.75 L674.77 461.63 L675.15 464.53 L675.52 486.07 L675.89 477.59 L676.26 480.79 L676.63 458.08 L677.01 458.58 L677.38 486.98 L677.75 468.93 M686.68 330.83 L687.05 320.92 L687.42 339.88 L687.79 338.30 L688.17 336.35 L688.54 314.73 L688.91 317.79 L689.28 339.24 L689.65 331.40 L690.02 326.24 L690.40 314.10 L690.77 323.45 L691.14 353.59 L691.51 339.26 L691.88 327.30 L692.26 336.53 L692.63 339.33 M701.18 474.66 L701.56 477.08 L701.93 472.87 L702.30 461.87 L702.67 463.85 L703.04 490.41 L703.42 482.62 L703.79 473.20 L704.16 468.00 L704.53 473.35 L704.90 492.12 L705.28 479.10 L705.65 453.65 L706.02 464.70 L706.39 470.43 L706.76 482.43 L707.13 467.95 M716.06 332.18 L716.43 325.80 L716.81 350.97 L717.18 335.19 L717.55 319.93 L717.92 321.21 L718.29 327.22 L718.67 344.10 L719.04 326.55 L719.41 304.96 L719.78 330.29 L720.15 338.58 L720.53 337.10 L720.90 330.87 L721.27 313.16 L721.64 344.62 L722.01 356.43 M730.57 478.35 L730.94 474.55 L731.31 456.45 L731.68 464.45 L732.06 472.45 L732.43 491.63 L732.80 482.22 L733.17 459.30 L733.54 476.02 L733.92 488.49 L734.29 487.04 L734.66 471.93 L735.03 455.54 L735.40 472.53 L735.78 481.53 L736.15 460.12 L736.52 457.54 M745.45 337.05 L745.82 340.50 L746.19 344.52 L746.56 327.82 L746.93 308.05 L747.31 326.60 L747.68 343.63 L748.05 328.40 L748.42 319.55 L748.79 314.63 L749.17 336.18 L749.54 343.53 L749.91 320.58 L750.28 327.88 L750.65 327.33 L751.03 348.26 L751.40 355.56 M759.95 465.62 L760.32 463.72 L760.70 449.26 L761.07 471.89 L761.44 485.66 L761.81 475.32 L762.18 471.73 L762.56 468.18 L762.93 480.63 L763.30 490.65 L763.67 470.12 L764.04 468.66 L764.42 475.15 L764.79 479.83 L765.16 486.33 L765.53 450.44 L765.90 454.86 M774.83 340.44 L775.20 354.08 L775.57 332.57 L775.95 319.94 L776.32 316.47 L776.69 334.98 L777.06 343.66 L777.43 311.81 L777.81 313.91 L778.18 331.19 L778.55 338.42 L778.92 335.46 L779.29 315.06 L779.67 319.79 L780.04 346.52 L780.41 345.40 L780.78 344.85 M789.34 452.42 L789.71 452.07 L790.08 460.53 L790.45 481.08 L790.82 491.47 L791.20 462.14 L791.57 466.85 L791.94 483.67 L792.31 485.19 L792.68 480.97 L793.06 464.50 L793.43 459.05 L793.80 490.63 L794.17 477.40 L794.54 467.56 L794.92 453.79 L795.29 459.39 M804.22 349.10 L804.59 349.71 L804.96 323.13 L805.33 321.95 L805.70 334.30 L806.07 332.54 L806.45 333.34 L806.82 314.16 L807.19 315.62 L807.56 343.26 L807.93 334.66 L808.31 322.65 L808.68 323.79 L809.05 327.53 L809.42 349.38 L809.79 346.99 L810.17 327.80 M818.72 446.33 L819.09 451.35 L819.47 480.60 L819.84 477.59 L820.21 469.86 L820.58 462.17 L820.95 466.94 L821.32 495.30 L821.70 486.62 L822.07 470.76 L822.44 471.59 L822.81 471.67 L823.18 484.39 L823.56 475.71 L823.93 450.13 L824.30 463.55 L824.67 476.35 M833.60 347.66 L833.97 334.79 L834.34 329.69 L834.72 326.10 L835.09 344.85 L835.46 333.93 L835.83 313.56 L836.20 316.76 L836.58 328.69 L836.95 339.02 L837.32 335.55 L837.69 304.20 L838.06 331.81 L838.43 339.32 L838.81 339.72 L839.18 336.48 L839.55 323.43 M848.11 451.84 L848.48 461.37 L848.85 482.19 L849.22 475.30 L849.59 460.50 L849.97 473.86 L850.34 481.97 L850.71 490.58 L851.08 482.01 L851.45 457.66 L851.83 479.34 L852.20 490.22 L852.57 479.39 L852.94 468.82 L853.31 457.35 L853.68 467.94 L854.06 487.59 M862.98 351.36 L863.36 316.07 L863.73 327.11 L864.10 338.59 L864.47 335.68 L864.84 326.64 L865.22 310.65 L865.59 324.95 L865.96 347.03 L866.33 329.68 L866.70 321.59 L867.08 316.89 L867.45 333.45 L867.82 355.36 L868.19 326.58 L868.56 324.99 L868.94 342.42 M877.49 460.59 L877.86 481.88 L878.23 468.36 L878.61 466.27 L878.98 458.08 L879.35 476.69 L879.72 493.98 L880.09 479.13 L880.47 473.55 L880.84 466.17 L881.21 482.35 L881.58 494.11 L881.95 463.08 L882.33 453.66 L882.70 473.37 L883.07 476.92 L883.44 477.40 M892.37 336.99 L892.74 328.33 L893.11 338.13 L893.48 352.87 L893.86 323.21 L894.23 319.60 L894.60 326.40" fill="none" stroke="#3ba9dc" stroke-width="1.5" stroke-linejoin="round" opacity="0.9"/>
<rect x="821" y="582.5" width="87" height="46.5" fill="#fdf6e3" stroke="#5a7282" stroke-width="1.2" />
<circle cx="849.2" cy="597" r="3.9" fill="#dc2a26"/>
<line x1="827.7" y1="614" x2="869.3" y2="614" stroke="#859900" stroke-width="1.8" />
<text x="873.5" y="604.10" font-size="14" fill="#4d6677" text-anchor="start" font-family="Liberation Sans" >data</text>
<text x="873.5" y="621.10" font-size="14" fill="#4d6677" text-anchor="start" font-family="Liberation Sans" >fit</text>
<rect x="1022" y="104" width="358" height="676" fill="#2a2e32" />
<path d="M1022.4 780.5 V104 M1022 780.5 H1380" stroke="#55595e" stroke-width="1.4" fill="none" />
<text x="1025.7" y="116.98" font-size="9" fill="#fcfcfc" text-anchor="start" font-family="Liberation Sans" >Fit</text>
<path d="M1354 110 L1356.5 112.5 L1354 115 L1351.5 112.5 Z" stroke="#d0d2d4" stroke-width="0.9" fill="none" />
<circle cx="1368.8" cy="112.6" r="5.4" fill="#c6c8ca"/>
<path d="M1366.5 110.3 L1371.1 114.9 M1371.1 110.3 L1366.5 114.9" stroke="#31363b" stroke-width="1.1" fill="none" />
<rect x="1023.5" y="123.5" width="354" height="655.5" fill="#1c1e21" stroke="#3592c8" stroke-width="1" rx="3" />
<rect x="1081" y="130" width="203" height="18.5" fill="#232629" />
<line x1="1133.7" y1="131" x2="1133.7" y2="147" stroke="#2b2f33" stroke-width="1" />
<line x1="1185.7" y1="131" x2="1185.7" y2="147" stroke="#2b2f33" stroke-width="1" />
<line x1="1237.7" y1="131" x2="1237.7" y2="147" stroke="#2b2f33" stroke-width="1" />
<rect x="1028.5" y="148.5" width="344" height="586" fill="#2a2e32" stroke="#3e4348" stroke-width="1" rx="2" />
<rect x="1028.5" y="129" width="52.3" height="20" fill="#2a2e32" />
<path d="M1028.5 149 V131 Q1028.5 129.5 1030 129.5 H1079.5 Q1080.8 129.5 1080.8 131 V148.5" stroke="#3e4348" stroke-width="1" fill="none" />
<rect x="1029" y="129" width="51.5" height="2" fill="#3daee9" rx="1" />
<text x="1054.7" y="142.18" font-size="9" fill="#fcfcfc" text-anchor="middle" font-family="Liberation Sans" >General</text>
<text x="1106.8" y="142.18" font-size="9" fill="#fcfcfc" text-anchor="middle" font-family="Liberation Sans" >Line</text>
<text x="1159" y="142.18" font-size="9" fill="#fcfcfc" text-anchor="middle" font-family="Liberation Sans" >Symbol</text>
<text x="1211.5" y="142.18" font-size="9" fill="#fcfcfc" text-anchor="middle" font-family="Liberation Sans" >Values</text>
<text x="1263.6" y="142.18" font-size="9" fill="#fcfcfc" text-anchor="middle" font-family="Liberation Sans" >Filling</text>
<text x="1032" y="165.08" font-size="9" fill="#fcfcfc" text-anchor="start" font-family="Liberation Sans" >Name:</text>
<text x="1032" y="188.48" font-size="9" fill="#fcfcfc" text-anchor="start" font-family="Liberation Sans" >Comment:</text>
<rect x="1116" y="152.5" width="252" height="18.5" fill="#1b1d20" stroke="#44494e" stroke-width="1" rx="3" />
<text x="1120" y="165.08" font-size="9" fill="#fcfcfc" text-anchor="start" font-family="Liberation Sans" >fit</text>
<rect x="1116" y="175" width="252" height="20.5" fill="#1b1d20" stroke="#44494e" stroke-width="1" rx="3" />
<path d="M1055.5 213 L1058.5 216.5 L1055.5 220" stroke="#e0e2e4" stroke-width="1" fill="none" />
<text x="1064.8" y="219.98" font-size="9" fill="#fcfcfc" text-anchor="start" font-family="Liberation Sans" font-weight="bold" >Data:</text>
<path d="M1049 242.5 L1052 246 L1049 249.5" stroke="#e0e2e4" stroke-width="1" fill="none" />
<text x="1058" y="249.28" font-size="9" fill="#fcfcfc" text-anchor="start" font-family="Liberation Sans" font-weight="bold" >Weights:</text>
<rect x="1032.5" y="266.9" width="71.70000000000005" height="19.200000000000045" fill="#383c41" stroke="#50555a" stroke-width="1" rx="2.5" />
<path d="M1057.5 274.5 L1061 278 L1064.5 274.5" stroke="#fcfcfc" stroke-width="1" fill="none" />
<text x="1069.4" y="279.78" font-size="9" fill="#fcfcfc" text-anchor="start" font-family="Liberation Sans" font-weight="bold" >Fit:</text>
<rect x="1307.9" y="266.9" width="59.899999999999864" height="19.200000000000045" fill="#383c41" stroke="#50555a" stroke-width="1" rx="2.5" />
<path d="M1312.5 273.5 H1320.5 M1312.5 279 H1320.5" stroke="#fcfcfc" stroke-width="1" fill="none" />
<circle cx="1318" cy="273.5" r="1.2" fill="#fcfcfc"/><circle cx="1315" cy="279" r="1.2" fill="#fcfcfc"/>
<text x="1324.6" y="279.78" font-size="9" fill="#fcfcfc" text-anchor="start" font-family="Liberation Sans" >Advanced</text>
<text x="1032" y="303.28" font-size="9" fill="#fcfcfc" text-anchor="start" font-family="Liberation Sans" >Category:</text>
<rect x="1116.1" y="290.9" width="251.70000000000005" height="17.200000000000045" fill="#2f3337" stroke="#50555a" stroke-width="1" rx="2.5" />
<text x="1119.4" y="303.28" font-size="9" fill="#fcfcfc" text-anchor="start" font-family="Liberation Sans" >Custom</text>
<path d="M1357.5 297.5 L1361 301 L1364.5 297.5" stroke="#fcfcfc" stroke-width="1" fill="none" />
<text x="1032" y="320.28" font-size="9" fill="#fcfcfc" text-anchor="start" font-family="Liberation Sans" >f(x) =</text>
<rect x="1116" y="312.6" width="231" height="39.7" fill="#1b1d20" stroke="#44494e" stroke-width="1" rx="2" />
<rect x="1337.2" y="316.2" width="5.4" height="31.6" fill="#55595e" stroke="#75787c" stroke-width="0.8" rx="2.7" />
<line x1="1333.5" y1="313" x2="1333.5" y2="352" stroke="#2a2e32" stroke-width="1" />
<text x="1119" y="324.3" font-size="9" font-family="Liberation Sans" xml:space="preserve"><tspan fill="#8ad482">b1</tspan><tspan fill="#fcfcfc"> + </tspan><tspan fill="#8ad482">b2</tspan><tspan fill="#f49a9a">*</tspan><tspan fill="#f49a9a">cos</tspan><tspan fill="#fcfcfc">( 2</tspan><tspan fill="#f49a9a">*pi*</tspan><tspan fill="#8ad482">x</tspan><tspan fill="#fcfcfc">/12 ) + </tspan><tspan fill="#8ad482">b3</tspan><tspan fill="#f49a9a">*</tspan><tspan fill="#f49a9a">sin</tspan><tspan fill="#fcfcfc">( 2</tspan><tspan fill="#f49a9a">*pi*</tspan><tspan fill="#8ad482">x</tspan><tspan fill="#fcfcfc">/12 ) +</tspan></text>
<text x="1119" y="336" font-size="9" font-family="Liberation Sans" xml:space="preserve"><tspan fill="#8ad482">b5</tspan><tspan fill="#f49a9a">*</tspan><tspan fill="#f49a9a">cos</tspan><tspan fill="#fcfcfc">( 2</tspan><tspan fill="#f49a9a">*pi*</tspan><tspan fill="#8ad482">x/b4</tspan><tspan fill="#fcfcfc"> ) + </tspan><tspan fill="#8ad482">b6</tspan><tspan fill="#f49a9a">*</tspan><tspan fill="#f49a9a">sin</tspan><tspan fill="#fcfcfc">( 2</tspan><tspan fill="#f49a9a">*pi*</tspan><tspan fill="#8ad482">x/b4</tspan><tspan fill="#fcfcfc"> ) + </tspan><tspan fill="#8ad482">b8</tspan><tspan fill="#f49a9a">*</tspan><tspan fill="#f49a9a">cos</tspan><tspan fill="#fcfcfc">(</tspan></text>
<text x="1119" y="347.9" font-size="9" font-family="Liberation Sans" xml:space="preserve"><tspan fill="#fcfcfc">2</tspan><tspan fill="#f49a9a">*pi*</tspan><tspan fill="#8ad482">x/b7</tspan><tspan fill="#fcfcfc"> ) + </tspan><tspan fill="#8ad482">b9</tspan><tspan fill="#f49a9a">*</tspan><tspan fill="#f49a9a">sin</tspan><tspan fill="#fcfcfc">( 2</tspan><tspan fill="#f49a9a">*pi*</tspan><tspan fill="#8ad482">x/b7</tspan><tspan fill="#fcfcfc"> )</tspan></text>
<rect x="1349.8" y="313.1" width="18.0" height="17.19999999999999" fill="#383c41" stroke="#50555a" stroke-width="1" rx="2.5" />
<text x="1358.8" y="323.82" font-size="5" fill="#fcfcfc" text-anchor="middle" font-family="Liberation Sans" >Aa</text>
<rect x="1349.8" y="333.8" width="18.0" height="18.0" fill="#383c41" stroke="#50555a" stroke-width="1" rx="2.5" />
<text x="1358.8" y="347.37" font-size="12" fill="#fcfcfc" text-anchor="middle" font-family="Liberation Sans" >π</text>
<rect x="1032.5" y="364.1" width="71.70000000000005" height="16.69999999999999" fill="#383c41" stroke="#50555a" stroke-width="1" rx="2.5" />
<path d="M1039.5 370.5 L1043 374 L1046.5 370.5" stroke="#fcfcfc" stroke-width="1" fill="none" />
<text x="1050.5" y="375.78" font-size="9" fill="#fcfcfc" text-anchor="start" font-family="Liberation Sans" font-weight="bold" >Parameters:</text>
<rect x="1115.5" y="363.5" width="253" height="116" fill="#1b1d20" stroke="#3592c8" stroke-width="1" rx="2.5" />
<rect x="1116.6" y="364.6" width="237" height="18.7" fill="#2a2e32" />
<rect x="1130" y="364.6" width="31.6" height="18.7" fill="#2c4a5c" />
<line x1="1130" y1="365" x2="1130" y2="383" stroke="#3e4348" stroke-width="1" />
<line x1="1161.6" y1="365" x2="1161.6" y2="383" stroke="#3e4348" stroke-width="1" />
<line x1="1212.6" y1="365" x2="1212.6" y2="383" stroke="#3e4348" stroke-width="1" />
<line x1="1244.5" y1="365" x2="1244.5" y2="383" stroke="#3e4348" stroke-width="1" />
<line x1="1296.8" y1="365" x2="1296.8" y2="383" stroke="#3e4348" stroke-width="1" />
<line x1="1353.6" y1="365" x2="1353.6" y2="383" stroke="#3e4348" stroke-width="1" />
<line x1="1117" y1="383.3" x2="1354" y2="383.3" stroke="#3e4348" stroke-width="1" />
<text x="1145.8" y="377.08" font-size="9" fill="#fcfcfc" text-anchor="middle" font-family="Liberation Sans" font-weight="bold" >Name</text>
<text x="1187" y="377.08" font-size="9" fill="#fcfcfc" text-anchor="middle" font-family="Liberation Sans" >Start value</text>
<text x="1228.5" y="377.08" font-size="9" fill="#fcfcfc" text-anchor="middle" font-family="Liberation Sans" >Fixed</text>
<text x="1270.6" y="377.08" font-size="9" fill="#fcfcfc" text-anchor="middle" font-family="Liberation Sans" >Lower limit</text>
<text x="1325.2" y="377.08" font-size="9" fill="#fcfcfc" text-anchor="middle" font-family="Liberation Sans" >Upper limit</text>
<rect x="1116.6" y="383.3" width="13.4" height="19.5" fill="#2c4a5c" />
<line x1="1117" y1="402.8" x2="1130" y2="402.8" stroke="#3e4348" stroke-width="1" />
<rect x="1130" y="383.3" width="31.6" height="19.5" fill="#1f4a63" />
<line x1="1161.6" y1="383.3" x2="1161.6" y2="402.8" stroke="#25282b" stroke-width="1" />
<line x1="1212.6" y1="383.3" x2="1212.6" y2="402.8" stroke="#25282b" stroke-width="1" />
<line x1="1244.5" y1="383.3" x2="1244.5" y2="402.8" stroke="#25282b" stroke-width="1" />
<line x1="1296.8" y1="383.3" x2="1296.8" y2="402.8" stroke="#25282b" stroke-width="1" />
<line x1="1130" y1="402.8" x2="1353.6" y2="402.8" stroke="#25282b" stroke-width="1" />
<text x="1123.3" y="396.88" font-size="9" fill="#fcfcfc" text-anchor="middle" font-family="Liberation Sans" font-weight="bold" >1</text>
<text x="1133" y="396.38" font-size="9" fill="#fcfcfc" text-anchor="start" font-family="Liberation Sans" >b1</text>
<text x="1163.5" y="396.88" font-size="9" fill="#fcfcfc" text-anchor="start" font-family="Liberation Sans" >10.6415</text>
<rect x="1221" y="387.8" width="10.3" height="10.5" fill="#1b1d20" stroke="#6a6e72" stroke-width="1" rx="1.5" />
<rect x="1116.6" y="402.8" width="13.4" height="19.5" fill="#2a2e32" />
<line x1="1117" y1="422.3" x2="1130" y2="422.3" stroke="#3e4348" stroke-width="1" />
<rect x="1130" y="402.8" width="31.6" height="19.5" fill="#202326" />
<line x1="1161.6" y1="402.8" x2="1161.6" y2="422.3" stroke="#25282b" stroke-width="1" />
<line x1="1212.6" y1="402.8" x2="1212.6" y2="422.3" stroke="#25282b" stroke-width="1" />
<line x1="1244.5" y1="402.8" x2="1244.5" y2="422.3" stroke="#25282b" stroke-width="1" />
<line x1="1296.8" y1="402.8" x2="1296.8" y2="422.3" stroke="#25282b" stroke-width="1" />
<line x1="1130" y1="422.3" x2="1353.6" y2="422.3" stroke="#25282b" stroke-width="1" />
<text x="1123.3" y="416.38" font-size="9" fill="#fcfcfc" text-anchor="middle" font-family="Liberation Sans" >2</text>
<text x="1133" y="415.88" font-size="9" fill="#fcfcfc" text-anchor="start" font-family="Liberation Sans" >b2</text>
<text x="1163.5" y="416.38" font-size="9" fill="#fcfcfc" text-anchor="start" font-family="Liberation Sans" >3.05277</text>
<rect x="1221" y="407.3" width="10.3" height="10.5" fill="#1b1d20" stroke="#6a6e72" stroke-width="1" rx="1.5" />
<rect x="1116.6" y="422.3" width="13.4" height="19.5" fill="#2a2e32" />
<line x1="1117" y1="441.8" x2="1130" y2="441.8" stroke="#3e4348" stroke-width="1" />
<rect x="1130" y="422.3" width="31.6" height="19.5" fill="#202326" />
<line x1="1161.6" y1="422.3" x2="1161.6" y2="441.8" stroke="#25282b" stroke-width="1" />
<line x1="1212.6" y1="422.3" x2="1212.6" y2="441.8" stroke="#25282b" stroke-width="1" />
<line x1="1244.5" y1="422.3" x2="1244.5" y2="441.8" stroke="#25282b" stroke-width="1" />
<line x1="1296.8" y1="422.3" x2="1296.8" y2="441.8" stroke="#25282b" stroke-width="1" />
<line x1="1130" y1="441.8" x2="1353.6" y2="441.8" stroke="#25282b" stroke-width="1" />
<text x="1123.3" y="435.88" font-size="9" fill="#fcfcfc" text-anchor="middle" font-family="Liberation Sans" >3</text>
<text x="1133" y="435.38" font-size="9" fill="#fcfcfc" text-anchor="start" font-family="Liberation Sans" >b3</text>
<text x="1163.5" y="435.88" font-size="9" fill="#fcfcfc" text-anchor="start" font-family="Liberation Sans" >0.479257</text>
<rect x="1221" y="426.8" width="10.3" height="10.5" fill="#1b1d20" stroke="#6a6e72" stroke-width="1" rx="1.5" />
<rect x="1116.6" y="441.8" width="13.4" height="19.5" fill="#2a2e32" />
<line x1="1117" y1="461.3" x2="1130" y2="461.3" stroke="#3e4348" stroke-width="1" />
<rect x="1130" y="441.8" width="31.6" height="19.5" fill="#202326" />
<line x1="1161.6" y1="441.8" x2="1161.6" y2="461.3" stroke="#25282b" stroke-width="1" />
<line x1="1212.6" y1="441.8" x2="1212.6" y2="461.3" stroke="#25282b" stroke-width="1" />
<line x1="1244.5" y1="441.8" x2="1244.5" y2="461.3" stroke="#25282b" stroke-width="1" />
<line x1="1296.8" y1="441.8" x2="1296.8" y2="461.3" stroke="#25282b" stroke-width="1" />
<line x1="1130" y1="461.3" x2="1353.6" y2="461.3" stroke="#25282b" stroke-width="1" />
<text x="1123.3" y="455.38" font-size="9" fill="#fcfcfc" text-anchor="middle" font-family="Liberation Sans" >4</text>
<text x="1133" y="454.88" font-size="9" fill="#fcfcfc" text-anchor="start" font-family="Liberation Sans" >b5</text>
<text x="1163.5" y="455.38" font-size="9" fill="#fcfcfc" text-anchor="start" font-family="Liberation Sans" >-0.0808158</text>
<rect x="1221" y="446.3" width="10.3" height="10.5" fill="#1b1d20" stroke="#6a6e72" stroke-width="1" rx="1.5" />
<rect x="1116.6" y="461.3" width="13.4" height="17.5" fill="#2a2e32" />
<rect x="1130" y="461.3" width="31.6" height="17.5" fill="#202326" />
<line x1="1161.6" y1="461.3" x2="1161.6" y2="478.8" stroke="#25282b" stroke-width="1" />
<line x1="1212.6" y1="461.3" x2="1212.6" y2="478.8" stroke="#25282b" stroke-width="1" />
<line x1="1244.5" y1="461.3" x2="1244.5" y2="478.8" stroke="#25282b" stroke-width="1" />
<line x1="1296.8" y1="461.3" x2="1296.8" y2="478.8" stroke="#25282b" stroke-width="1" />
<text x="1123.3" y="474.88" font-size="9" fill="#fcfcfc" text-anchor="middle" font-family="Liberation Sans" >5</text>
<text x="1133" y="474.38" font-size="9" fill="#fcfcfc" text-anchor="start" font-family="Liberation Sans" >b4</text>
<text x="1163.5" y="474.88" font-size="9" fill="#fcfcfc" text-anchor="start" font-family="Liberation Sans" >-0.699536</text>
<rect x="1221" y="465.8" width="10.3" height="10.5" fill="#1b1d20" stroke="#6a6e72" stroke-width="1" rx="1.5" />
<rect x="1354" y="364.6" width="13.4" height="114.3" fill="#1b1d20" />
<rect x="1358.2" y="367.8" width="5.8" height="47" fill="#55595e" stroke="#75787c" stroke-width="0.8" rx="2.9" />
<rect x="1315.7" y="483.1" width="52.09999999999991" height="19.19999999999999" fill="#383c41" stroke="#50555a" stroke-width="1" rx="2.5" />
<circle cx="1334.8" cy="492.7" r="2.9" fill="none" stroke="#fcfcfc" stroke-width="1.2"/><path d="M1337.90 492.70 L1339.40 492.70 M1336.99 494.89 L1338.05 495.95 M1334.80 495.80 L1334.80 497.30 M1332.61 494.89 L1331.55 495.95 M1331.70 492.70 L1330.20 492.70 M1332.61 490.51 L1331.55 489.45 M1334.80 489.60 L1334.80 488.10 M1336.99 490.51 L1338.05 489.45 " stroke="#fcfcfc" stroke-width="1.5"/>
<text x="1343.5" y="495.98" font-size="9" fill="#fcfcfc" text-anchor="start" font-family="Liberation Sans" >Fit</text>
<rect x="1032.5" y="510.1" width="71.70000000000005" height="17.0" fill="#383c41" stroke="#50555a" stroke-width="1" rx="2.5" />
<path d="M1047.5 516.5 L1051 520 L1054.5 516.5" stroke="#fcfcfc" stroke-width="1" fill="none" />
<text x="1058.6" y="521.88" font-size="9" fill="#fcfcfc" text-anchor="start" font-family="Liberation Sans" font-weight="bold" >Results:</text>
<rect x="1116" y="510" width="180" height="18.8" fill="#232629" />
<rect x="1172.5" y="510" width="70.5" height="19.5" fill="#2a2e32" />
<rect x="1116" y="528.8" width="252" height="151" fill="#2a2e32" stroke="#3e4348" stroke-width="1" rx="2" />
<path d="M1172.5 529 V511.5 Q1172.5 510 1174 510 H1241.5 Q1243 510 1243 511.5 V529" stroke="#3e4348" stroke-width="1" fill="none" />
<rect x="1173" y="510" width="69.5" height="2" fill="#3daee9" rx="1" />
<text x="1143.5" y="522.28" font-size="9" fill="#fcfcfc" text-anchor="middle" font-family="Liberation Sans" >Parameters</text>
<text x="1207.8" y="522.28" font-size="9" fill="#fcfcfc" text-anchor="middle" font-family="Liberation Sans" >Goodness of fit</text>
<text x="1269.6" y="522.28" font-size="9" fill="#fcfcfc" text-anchor="middle" font-family="Liberation Sans" >Log</text>
<rect x="1122.4" y="535.7" width="238.8" height="138" fill="#1b1d20" stroke="#44494e" stroke-width="1" />
<line x1="1289.2" y1="536.2" x2="1289.2" y2="555.8000000000001" stroke="#2a2e32" stroke-width="1" />
<text x="1124.5" y="548.28" font-size="9" fill="#fcfcfc" text-anchor="start" font-family="Liberation Sans" >Sum of squared residuals (χ²)</text>
<text x="1291.7" y="548.28" font-size="9" fill="#fcfcfc" text-anchor="start" font-family="Liberation Sans" >1118.18</text>
<rect x="1123" y="555.8000000000001" width="224.3" height="19.6" fill="#232629" />
<line x1="1289.2" y1="555.8000000000001" x2="1289.2" y2="575.4000000000001" stroke="#2a2e32" stroke-width="1" />
<text x="1124.5" y="567.88" font-size="9" fill="#fcfcfc" text-anchor="start" font-family="Liberation Sans" >Residual mean square (χ²/dof)</text>
<text x="1291.7" y="567.88" font-size="9" fill="#fcfcfc" text-anchor="start" font-family="Liberation Sans" >7.03255</text>
<line x1="1289.2" y1="575.4000000000001" x2="1289.2" y2="595.0000000000001" stroke="#2a2e32" stroke-width="1" />
<text x="1124.5" y="587.48" font-size="9" fill="#fcfcfc" text-anchor="start" font-family="Liberation Sans" textLength="157.8" lengthAdjust="spacingAndGlyphs">Root mean square deviation (RMSD, SD)</text>
<text x="1291.7" y="587.48" font-size="9" fill="#fcfcfc" text-anchor="start" font-family="Liberation Sans" >2.6519</text>
<rect x="1123" y="595.0" width="224.3" height="19.6" fill="#232629" />
<line x1="1289.2" y1="595.0" x2="1289.2" y2="614.6" stroke="#2a2e32" stroke-width="1" />
<text x="1124.5" y="607.08" font-size="9" fill="#fcfcfc" text-anchor="start" font-family="Liberation Sans" >Coefficient of determination (R²)</text>
<text x="1291.7" y="607.08" font-size="9" fill="#fcfcfc" text-anchor="start" font-family="Liberation Sans" >0.430382</text>
<line x1="1289.2" y1="614.6" x2="1289.2" y2="634.2" stroke="#2a2e32" stroke-width="1" />
<text x="1124.5" y="626.68" font-size="9" fill="#fcfcfc" text-anchor="start" font-family="Liberation Sans" >Adj. coefficient of determination (R̄²)</text>
<text x="1291.7" y="626.68" font-size="9" fill="#fcfcfc" text-anchor="start" font-family="Liberation Sans" >0.397936</text>
<rect x="1123" y="634.2" width="224.3" height="19.6" fill="#232629" />
<line x1="1289.2" y1="634.2" x2="1289.2" y2="653.8000000000001" stroke="#2a2e32" stroke-width="1" />
<text x="1124.5" y="646.28" font-size="9" fill="#fcfcfc" text-anchor="start" font-family="Liberation Sans" >χ²-test ( P &gt; χ²)</text>
<text x="1291.7" y="646.28" font-size="9" fill="#fcfcfc" text-anchor="start" font-family="Liberation Sans" >0</text>
<line x1="1289.2" y1="653.8000000000001" x2="1289.2" y2="673.4000000000001" stroke="#2a2e32" stroke-width="1" />
<text x="1124.5" y="665.88" font-size="9" fill="#fcfcfc" text-anchor="start" font-family="Liberation Sans" >F test</text>
<text x="1291.7" y="665.88" font-size="9" fill="#fcfcfc" text-anchor="start" font-family="Liberation Sans" >15</text>
<rect x="1347.3" y="536.2" width="13.4" height="137" fill="#1b1d20" />
<rect x="1350.7" y="539.2" width="5.8" height="83" fill="#55595e" stroke="#75787c" stroke-width="0.8" rx="2.9" />
<line x1="1032" y1="683.7" x2="1370" y2="683.7" stroke="#3e4348" stroke-width="1" />
<text x="1032" y="700.58" font-size="9" fill="#fcfcfc" text-anchor="start" font-family="Liberation Sans" >Plot ranges:</text>
<rect x="1117.9" y="687.7" width="193.5" height="18.4" fill="#2d3135" stroke="#3c4045" stroke-width="1" rx="2.5" />
<text x="1121" y="700.58" font-size="9" fill="#7a7d80" text-anchor="start" font-family="Liberation Sans" >1 : x = 0 .. 180, y = 0 .. 18</text>
<path d="M1301.5 695 L1305 698.5 L1308.5 695" stroke="#8a8d90" stroke-width="1" fill="none" />
<rect x="1033.7" y="719.8" width="10" height="10" fill="#2a6d91" stroke="#3daee9" stroke-width="1" rx="1.5" />
<path d="M1035.8 724.7 L1038 727 L1042 722" stroke="#fcfcfc" stroke-width="1.3" fill="none" />
<text x="1047.4" y="727.88" font-size="9" fill="#fcfcfc" text-anchor="start" font-family="Liberation Sans" >Visible</text>
<rect x="1299.8" y="743.8" width="22.200000000000045" height="22.5" fill="#2d3135" stroke="#40454a" stroke-width="1" rx="2.5" />
<rect x="1324.5" y="743.8" width="22.299999999999955" height="22.5" fill="#2d3135" stroke="#40454a" stroke-width="1" rx="2.5" />
<rect x="1349.5" y="743.8" width="22" height="22.5" fill="#2d3135" stroke="#40454a" stroke-width="1" rx="2.5" />
<g transform="translate(1306,750) scale(1)"><path d="M0.5 0.5 H6 L9 3.5 V6 M4.5 9.5 H0.5 V0.5" stroke="#a8abae" stroke-width="1" fill="none" /><rect x="4.5" y="6" width="5" height="3.5" fill="none" stroke="#a8abae" stroke-width="1"/></g>
<g transform="translate(1330,749.5) scale(1)"><rect x="0.5" y="0.5" width="10" height="10" fill="none" stroke="#fcfcfc" stroke-width="1"/><rect x="3" y="0.5" width="5" height="3" fill="none" stroke="#fcfcfc" stroke-width="1"/><rect x="2.5" y="6" width="6" height="4.5" fill="none" stroke="#fcfcfc" stroke-width="1"/></g>
<g transform="translate(1355,749.5) scale(1)"><rect x="0.5" y="0.5" width="10" height="10" fill="none" stroke="#fcfcfc" stroke-width="1"/><rect x="3" y="0.5" width="5" height="3" fill="none" stroke="#fcfcfc" stroke-width="1"/><rect x="2.5" y="6" width="4" height="4.5" fill="none" stroke="#fcfcfc" stroke-width="1"/><path d="M6 10.5 L11 5.5" stroke="#fcfcfc" stroke-width="1.6" fill="none" /></g>
<text x="128.3" y="792.28" font-size="9" fill="#fcfcfc" text-anchor="start" font-family="Liberation Sans" textLength="90.5" lengthAdjust="spacingAndGlyphs">x=147.107, y=0.994722</text>
<text x="1228.3" y="792.28" font-size="9" fill="#fcfcfc" text-anchor="start" font-family="Liberation Sans" textLength="150.2" lengthAdjust="spacingAndGlyphs">Memory used 168 MB, peak 3.362 MB</text>
</svg></body></html>
